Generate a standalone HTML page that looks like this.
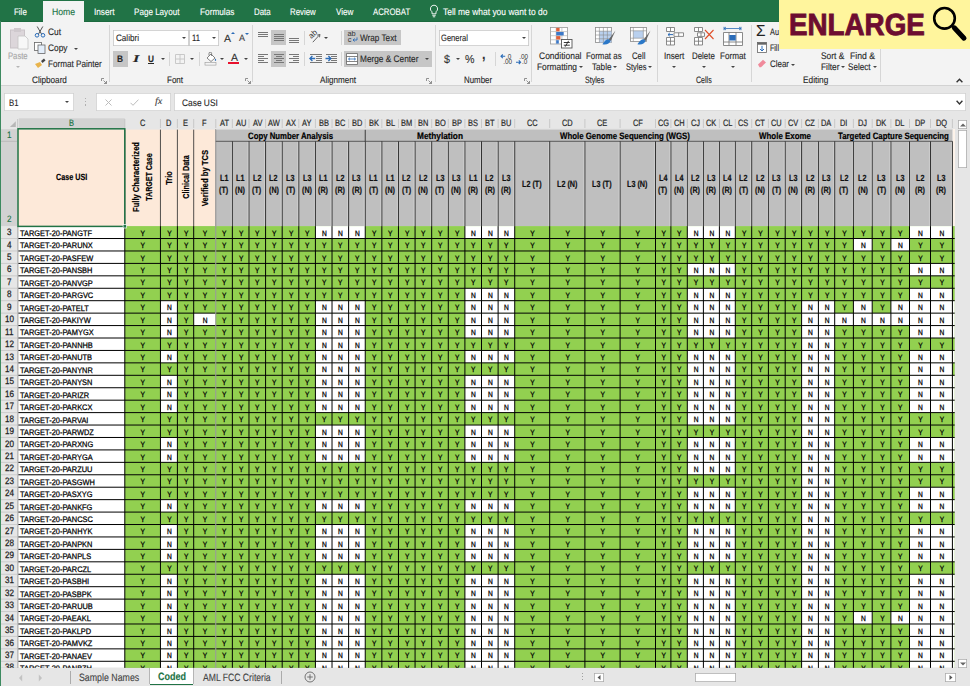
<!DOCTYPE html>
<html lang="en"><head><meta charset="utf-8"><title>Excel</title><style>
html,body{margin:0;padding:0}
body{width:970px;height:686px;overflow:hidden;background:#e6e6e6;font-family:"Liberation Sans",sans-serif;position:relative}
#w{position:absolute;left:0;top:0;width:970px;height:686px;overflow:hidden}
.r{position:absolute;display:block}
.t{position:absolute;white-space:nowrap;transform-origin:0 50%;display:block;-webkit-text-stroke:.12px currentColor}
.v{position:absolute;white-space:nowrap;font-weight:bold;color:#000;display:block;-webkit-text-stroke:.2px #000}
.arr{position:absolute;width:0;height:0;border:2.400px solid transparent;border-top:2.800px solid #444;border-bottom:0}
.arr.up{border:2.400px solid transparent;border-bottom:2.800px solid #444;border-top:0}
.row{position:absolute;left:0;height:11px;width:957px}
.row i{position:absolute;top:0;font-style:normal;text-align:center;font-size:7.7px;line-height:11px;color:#000;transform:scaleX(.86) rotate(.03deg);-webkit-text-stroke:.3px #000}
</style></head><body><div id="w">
<div class="r" style="left:0.0px;top:0.0px;width:970.0px;height:21.6px;background:#217346;"></div>
<div class="r" style="left:0.0px;top:21.6px;width:970.0px;height:64.0px;background:#f3f3f3;"></div>
<div class="r" style="left:0.0px;top:85.2px;width:970.0px;height:0.8px;background:#d2d2d2;"></div>
<div class="r" style="left:0.0px;top:20.8px;width:970.0px;height:0.8px;background:#1c6a3f;"></div>
<div class="r" style="left:42.9px;top:1.2px;width:41.2px;height:21.4px;background:#f3f3f3;"></div>
<span class="t" style="left:14.4px;top:6.1px;font-size:9.5px;line-height:11.40px;color:#fff;transform:scaleX(0.836) rotate(.03deg);">File</span>
<span class="t" style="left:51.5px;top:6.1px;font-size:9.5px;line-height:11.40px;color:#217346;transform:scaleX(0.912) rotate(.03deg);">Home</span>
<span class="t" style="left:94.2px;top:6.1px;font-size:9.5px;line-height:11.40px;color:#fff;transform:scaleX(0.867) rotate(.03deg);">Insert</span>
<span class="t" style="left:134.4px;top:6.1px;font-size:9.5px;line-height:11.40px;color:#fff;transform:scaleX(0.851) rotate(.03deg);">Page Layout</span>
<span class="t" style="left:199.6px;top:6.1px;font-size:9.5px;line-height:11.40px;color:#fff;transform:scaleX(0.869) rotate(.03deg);">Formulas</span>
<span class="t" style="left:253.6px;top:6.1px;font-size:9.5px;line-height:11.40px;color:#fff;transform:scaleX(0.832) rotate(.03deg);">Data</span>
<span class="t" style="left:290.3px;top:6.1px;font-size:9.5px;line-height:11.40px;color:#fff;transform:scaleX(0.825) rotate(.03deg);">Review</span>
<span class="t" style="left:335.7px;top:6.1px;font-size:9.5px;line-height:11.40px;color:#fff;transform:scaleX(0.857) rotate(.03deg);">View</span>
<span class="t" style="left:373.0px;top:6.1px;font-size:9.5px;line-height:11.40px;color:#fff;transform:scaleX(0.823) rotate(.03deg);">ACROBAT</span>
<span class="t" style="left:442.6px;top:6.1px;font-size:9.5px;line-height:11.40px;color:#fff;transform:scaleX(0.891) rotate(.03deg);">Tell me what you want to do</span>
<svg class="r" style="left:428px;top:4px" width="12" height="15" viewBox="0 0 12 15"><path d="M6 1.2a3.6 3.6 0 0 0-2 6.6v2h4v-2a3.6 3.6 0 0 0-2-6.6zM4.3 11.3h3.4M4.8 12.8h2.4" fill="none" stroke="#fff" stroke-width="0.9"/></svg>
<svg class="r" style="left:9px;top:27px" width="22" height="24" viewBox="0 0 22 24"><rect x="1.5" y="3" width="14" height="18" fill="#dcd6da" stroke="#c9c3c7"/><rect x="5" y="1" width="7" height="4" fill="#cfc9cd"/><path d="M9 9h7l3 3v10H9z" fill="#f7f7f7" stroke="#c4c4c4" stroke-width=".8"/></svg>
<span class="t" style="left:8.2px;top:49.8px;font-size:9.5px;line-height:11.40px;color:#a6a6a6;transform:scaleX(0.807) rotate(.03deg);">Paste</span>
<div class="arr" style="left:15.5px;top:66px;border-top-color:#b5b5b5"></div>
<svg class="r" style="left:34px;top:26px" width="12" height="12" viewBox="0 0 12 12"><path d="M3.2 0.5L7.5 8M8.8 0.5L4.5 8" stroke="#555" stroke-width="1" fill="none"/><circle cx="3" cy="9.3" r="1.8" fill="none" stroke="#2b6cb8" stroke-width="1"/><circle cx="9" cy="9.3" r="1.8" fill="none" stroke="#2b6cb8" stroke-width="1"/></svg>
<span class="t" style="left:47.8px;top:26.2px;font-size:9.5px;line-height:11.40px;color:#262626;transform:scaleX(0.879) rotate(.03deg);">Cut</span>
<svg class="r" style="left:34px;top:42px" width="12" height="12" viewBox="0 0 12 12"><rect x="0.5" y="0.5" width="7" height="8" fill="#fff" stroke="#666" stroke-width=".8"/><rect x="4" y="3" width="7" height="8.5" fill="#e4eefa" stroke="#666" stroke-width=".8"/></svg>
<span class="t" style="left:47.8px;top:42.3px;font-size:9.5px;line-height:11.40px;color:#262626;transform:scaleX(0.879) rotate(.03deg);">Copy</span>
<div class="arr" style="left:73.5px;top:47.5px"></div>
<svg class="r" style="left:34px;top:58px" width="13" height="12" viewBox="0 0 13 12"><path d="M1 6l5-2 2 3-4 3z" fill="#e9b44c"/><path d="M7 3l3-2.5 1.5 2L8.5 5z" fill="#444"/></svg>
<span class="t" style="left:47.8px;top:57.8px;font-size:9.5px;line-height:11.40px;color:#262626;transform:scaleX(0.856) rotate(.03deg);">Format Painter</span>
<span class="t" style="left:32.0px;top:73.9px;font-size:9.4px;line-height:11.28px;color:#262626;transform:scaleX(0.870) rotate(.03deg);">Clipboard</span>
<svg class="r" style="left:100.5px;top:78px" width="6" height="6" viewBox="0 0 6 6"><path d="M0.5 3V0.5H3M2.5 2.5l3 3M5.5 3v2.5H3" fill="none" stroke="#777" stroke-width=".8"/></svg>
<div class="r" style="left:109.0px;top:24.7px;width:1.0px;height:57.8px;background:#d6d6d6;"></div>
<div class="r" style="left:113.0px;top:29.6px;width:75.6px;height:16.0px;background:#fff;box-shadow:inset 0 0 0 .8px #c6c6c6"></div>
<span class="t" style="left:115.5px;top:31.9px;font-size:9.4px;line-height:11.28px;color:#262626;transform:scaleX(0.863) rotate(.03deg);">Calibri</span>
<div class="arr" style="left:182px;top:37px"></div>
<div class="r" style="left:189.4px;top:29.6px;width:29.2px;height:16.0px;background:#fff;box-shadow:inset 0 0 0 .8px #c6c6c6"></div>
<span class="t" style="left:192.0px;top:31.9px;font-size:9.4px;line-height:11.28px;color:#262626;transform:scaleX(0.820) rotate(.03deg);">11</span>
<div class="arr" style="left:212px;top:37px"></div>
<span class="t" style="left:223.5px;top:32.0px;font-size:10.5px;line-height:12.60px;color:#333;transform:scaleX(0.999) rotate(.03deg);">A</span>
<div class="arr up" style="left:231px;top:32px;border-bottom-color:#2b6cb8"></div>
<span class="t" style="left:239.0px;top:33.1px;font-size:9px;line-height:10.80px;color:#444;transform:scaleX(0.999) rotate(.03deg);">A</span>
<div class="arr" style="left:244.5px;top:32.5px;border-top-color:#2b6cb8"></div>
<div class="r" style="left:113.0px;top:51.1px;width:14.8px;height:15.5px;background:#c6c6c6;"></div>
<span class="t" style="left:117.3px;top:52.6px;font-size:9.5px;line-height:11.40px;color:#262626;transform:scaleX(0.875) rotate(.03deg);font-weight:bold;">B</span>
<span class="t" style="left:133.2px;top:52.8px;font-size:10.5px;line-height:12.60px;color:#262626;transform:scaleX(1.543) rotate(.03deg);font-weight:bold;font-style:italic;font-family:'Liberation Serif',serif;">I</span>
<span class="t" style="left:147.5px;top:52.6px;font-size:9.5px;line-height:11.40px;color:#262626;transform:scaleX(0.875) rotate(.03deg);font-weight:bold;text-decoration:underline;">U</span>
<div class="arr" style="left:160.5px;top:58px"></div>
<div class="r" style="left:169.0px;top:52.0px;width:1.0px;height:14.0px;background:#d6d6d6;"></div>
<svg class="r" style="left:175px;top:54px" width="10" height="10" viewBox="0 0 10 10"><path d="M.5 .5h9v9h-9zM5 .5v9M.5 5h9" fill="none" stroke="#c4c4c4" stroke-width=".9"/></svg>
<div class="arr" style="left:190px;top:58px"></div>
<div class="r" style="left:199.0px;top:52.0px;width:1.0px;height:14.0px;background:#d6d6d6;"></div>
<svg class="r" style="left:204px;top:52px" width="14" height="14" viewBox="0 0 14 14"><path d="M3 6l4-4 4 4-4 3.5z" fill="#fff" stroke="#666" stroke-width=".8"/><path d="M5 3.5V1.5a1.3 1.3 0 0 1 2.6 0V4" fill="none" stroke="#666" stroke-width=".8"/><path d="M11.5 6.5c.8 1.2 1 1.8 0 2.4-1-.6-.8-1.2 0-2.4z" fill="#2b6cb8"/><rect x="1" y="10.5" width="11" height="2.6" fill="#f3f3f3" stroke="#999" stroke-width=".6"/></svg>
<div class="arr" style="left:220px;top:58px"></div>
<span class="t" style="left:230.5px;top:50.7px;font-size:10.5px;line-height:12.60px;color:#333;transform:scaleX(0.999) rotate(.03deg);">A</span>
<div class="r" style="left:228.0px;top:62.3px;width:11.0px;height:2.2px;background:#e8112d;"></div>
<div class="arr" style="left:243.5px;top:58px"></div>
<span class="t" style="left:167.4px;top:73.9px;font-size:9.4px;line-height:11.28px;color:#262626;transform:scaleX(0.856) rotate(.03deg);">Font</span>
<svg class="r" style="left:244.5px;top:78px" width="6" height="6" viewBox="0 0 6 6"><path d="M0.5 3V0.5H3M2.5 2.5l3 3M5.5 3v2.5H3" fill="none" stroke="#777" stroke-width=".8"/></svg>
<div class="r" style="left:252.0px;top:24.7px;width:1.0px;height:57.8px;background:#d6d6d6;"></div>
<div class="r" style="left:271.0px;top:30.0px;width:15.0px;height:15.4px;background:#c6c6c6;"></div>
<div class="r" style="left:271.0px;top:51.0px;width:15.0px;height:15.6px;background:#c6c6c6;"></div>
<div class="r" style="left:258.0px;top:31.5px;width:10.0px;height:0.9px;background:#777;"></div>
<div class="r" style="left:258.0px;top:33.6px;width:10.0px;height:0.9px;background:#777;"></div>
<div class="r" style="left:258.0px;top:35.7px;width:10.0px;height:0.9px;background:#777;"></div>
<div class="r" style="left:273.5px;top:33.5px;width:10.0px;height:0.9px;background:#777;"></div>
<div class="r" style="left:273.5px;top:35.5px;width:10.0px;height:0.9px;background:#777;"></div>
<div class="r" style="left:273.5px;top:37.5px;width:10.0px;height:0.9px;background:#777;"></div>
<div class="r" style="left:273.5px;top:39.5px;width:10.0px;height:0.9px;background:#777;"></div>
<div class="r" style="left:289.0px;top:38.0px;width:10.0px;height:0.9px;background:#777;"></div>
<div class="r" style="left:289.0px;top:40.1px;width:10.0px;height:0.9px;background:#777;"></div>
<div class="r" style="left:289.0px;top:42.2px;width:10.0px;height:0.9px;background:#777;"></div>
<div class="r" style="left:258.0px;top:53.5px;width:10.0px;height:0.9px;background:#777;"></div>
<div class="r" style="left:258.0px;top:55.6px;width:6.0px;height:0.9px;background:#777;"></div>
<div class="r" style="left:258.0px;top:57.7px;width:10.0px;height:0.9px;background:#777;"></div>
<div class="r" style="left:258.0px;top:59.8px;width:6.0px;height:0.9px;background:#777;"></div>
<div class="r" style="left:258.0px;top:61.9px;width:10.0px;height:0.9px;background:#777;"></div>
<div class="r" style="left:273.5px;top:53.5px;width:10.0px;height:0.9px;background:#777;"></div>
<div class="r" style="left:275.5px;top:55.6px;width:6.0px;height:0.9px;background:#777;"></div>
<div class="r" style="left:273.5px;top:57.7px;width:10.0px;height:0.9px;background:#777;"></div>
<div class="r" style="left:275.5px;top:59.8px;width:6.0px;height:0.9px;background:#777;"></div>
<div class="r" style="left:273.5px;top:61.9px;width:10.0px;height:0.9px;background:#777;"></div>
<div class="r" style="left:289.0px;top:53.5px;width:10.0px;height:0.9px;background:#777;"></div>
<div class="r" style="left:293.0px;top:55.6px;width:6.0px;height:0.9px;background:#777;"></div>
<div class="r" style="left:289.0px;top:57.7px;width:10.0px;height:0.9px;background:#777;"></div>
<div class="r" style="left:293.0px;top:59.8px;width:6.0px;height:0.9px;background:#777;"></div>
<div class="r" style="left:289.0px;top:61.9px;width:10.0px;height:0.9px;background:#777;"></div>
<div class="r" style="left:304.0px;top:31.0px;width:1.0px;height:14.0px;background:#d6d6d6;"></div>
<div class="r" style="left:304.0px;top:52.0px;width:1.0px;height:14.0px;background:#d6d6d6;"></div>
<svg class="r" style="left:308px;top:29px" width="15" height="15" viewBox="0 0 15 15"><text x="0" y="0" font-size="8" fill="#333" transform="translate(3.200 10) rotate(-42)" font-family="Liberation Sans,sans-serif">ab</text><path d="M4.800 13.200L11.800 5.600M11.900 5.500l-2.800 .6M11.900 5.500l-.4 2.800" stroke="#555" stroke-width=".9" fill="none"/></svg>
<div class="arr" style="left:323.5px;top:37px"></div>
<div class="r" style="left:310.0px;top:53.6px;width:11.5px;height:0.9px;background:#777;"></div>
<div class="r" style="left:310.0px;top:62.0px;width:11.5px;height:0.9px;background:#777;"></div>
<div class="r" style="left:315.5px;top:55.7px;width:6.0px;height:0.9px;background:#777;"></div>
<div class="r" style="left:315.5px;top:57.8px;width:6.0px;height:0.9px;background:#777;"></div>
<div class="r" style="left:315.5px;top:59.9px;width:6.0px;height:0.9px;background:#777;"></div>
<svg class="r" style="left:309.0px;top:54.600px" width="7" height="7" viewBox="0 0 7 7"><path d="M6.200 3.500H1M3.400 1L.9 3.500 3.400 6" stroke="#2b6cb8" stroke-width="1.300" fill="none"/></svg>
<div class="r" style="left:325.5px;top:53.6px;width:11.5px;height:0.9px;background:#777;"></div>
<div class="r" style="left:325.5px;top:62.0px;width:11.5px;height:0.9px;background:#777;"></div>
<div class="r" style="left:331.0px;top:55.7px;width:6.0px;height:0.9px;background:#777;"></div>
<div class="r" style="left:331.0px;top:57.8px;width:6.0px;height:0.9px;background:#777;"></div>
<div class="r" style="left:331.0px;top:59.9px;width:6.0px;height:0.9px;background:#777;"></div>
<svg class="r" style="left:324.5px;top:54.600px" width="7" height="7" viewBox="0 0 7 7"><path d="M.5 3.500H5.800M3.400 1L5.900 3.500 3.400 6" stroke="#2b6cb8" stroke-width="1.300" fill="none"/></svg>
<div class="r" style="left:341.0px;top:31.0px;width:1.0px;height:14.0px;background:#d6d6d6;"></div>
<div class="r" style="left:341.0px;top:52.0px;width:1.0px;height:14.0px;background:#d6d6d6;"></div>
<div class="r" style="left:344.3px;top:30.0px;width:56.7px;height:15.4px;background:#c6c6c6;"></div>
<div class="r" style="left:344.3px;top:51.0px;width:87.6px;height:15.6px;background:#c6c6c6;"></div>
<svg class="r" style="left:346.500px;top:30px" width="13" height="14" viewBox="0 0 13 14"><text x=".5" y="6.300" font-size="7.400" fill="#333" font-family="Liberation Sans,sans-serif" >ab</text><text x=".8" y="12" font-size="7.400" fill="#333" font-family="Liberation Sans,sans-serif">c</text><path d="M10 7.400v2.600H6M7.600 8.500L6 10l1.600 1.500" stroke="#2b6cb8" stroke-width=".9" fill="none"/></svg>
<span class="t" style="left:359.5px;top:31.8px;font-size:9.5px;line-height:11.40px;color:#262626;transform:scaleX(0.861) rotate(.03deg);">Wrap Text</span>
<svg class="r" style="left:346px;top:52.5px" width="12" height="12" viewBox="0 0 12 12"><path d="M.5 .5h11v11H.5zM.5 3.5h11M.5 8.5h11" fill="#fff" stroke="#666" stroke-width=".8"/><path d="M2.5 6h7M4 4.7L2.5 6 4 7.3M8 4.7L9.5 6 8 7.3" stroke="#2b6cb8" stroke-width=".8" fill="none"/></svg>
<span class="t" style="left:359.5px;top:52.8px;font-size:9.5px;line-height:11.4px;color:#262626;transform:scaleX(0.872) rotate(.03deg)">Merge &amp; Center</span>
<div class="arr" style="left:424.5px;top:58px"></div>
<span class="t" style="left:320.2px;top:73.9px;font-size:9.4px;line-height:11.28px;color:#262626;transform:scaleX(0.864) rotate(.03deg);">Alignment</span>
<svg class="r" style="left:426px;top:78px" width="6" height="6" viewBox="0 0 6 6"><path d="M0.5 3V0.5H3M2.5 2.5l3 3M5.5 3v2.5H3" fill="none" stroke="#777" stroke-width=".8"/></svg>
<div class="r" style="left:435.0px;top:24.7px;width:1.0px;height:57.8px;background:#d6d6d6;"></div>
<div class="r" style="left:438.5px;top:29.6px;width:90.0px;height:16.0px;background:#fff;box-shadow:inset 0 0 0 .8px #c6c6c6"></div>
<span class="t" style="left:441.0px;top:31.9px;font-size:9.4px;line-height:11.28px;color:#262626;transform:scaleX(0.807) rotate(.03deg);">General</span>
<div class="arr" style="left:521.5px;top:37px"></div>
<span class="t" style="left:443.5px;top:52.8px;font-size:11.5px;line-height:13.80px;color:#333;transform:scaleX(0.938) rotate(.03deg);">$</span>
<div class="arr" style="left:455.5px;top:58px"></div>
<span class="t" style="left:465.0px;top:52.8px;font-size:11.5px;line-height:13.80px;color:#333;transform:scaleX(0.929) rotate(.03deg);">%</span>
<span class="t" style="left:481.5px;top:46.4px;font-size:14px;line-height:16.80px;color:#333;transform:scaleX(0.900) rotate(.03deg);font-weight:bold;">,</span>
<div class="r" style="left:495.0px;top:52.0px;width:1.0px;height:14.0px;background:#d6d6d6;"></div>
<svg class="r" style="left:499.5px;top:52.500px" width="14" height="13" viewBox="0 0 14 13"><text x="6" y="5.600" font-family="Liberation Sans,sans-serif" font-size="6.400" fill="#333">.0</text><text x="3.200" y="11.400" font-family="Liberation Sans,sans-serif" font-size="6.400" fill="#333">.00</text><path d="M5.200 3.300H1M2.800 1.500L1 3.300l1.800 1.800" stroke="#2b6cb8" stroke-width="1.100" fill="none"/></svg>
<svg class="r" style="left:515px;top:52.500px" width="14" height="13" viewBox="0 0 14 13"><text x="4.200" y="5.600" font-family="Liberation Sans,sans-serif" font-size="6.400" fill="#333">.00</text><text x="7" y="11.400" font-family="Liberation Sans,sans-serif" font-size="6.400" fill="#333">.0</text><path d="M1 9.200H5.600M3.800 7.400l1.800 1.800-1.800 1.800" stroke="#2b6cb8" stroke-width="1.100" fill="none"/></svg>
<span class="t" style="left:463.8px;top:73.9px;font-size:9.4px;line-height:11.28px;color:#262626;transform:scaleX(0.843) rotate(.03deg);">Number</span>
<svg class="r" style="left:523.5px;top:78px" width="6" height="6" viewBox="0 0 6 6"><path d="M0.5 3V0.5H3M2.5 2.5l3 3M5.5 3v2.5H3" fill="none" stroke="#777" stroke-width=".8"/></svg>
<div class="r" style="left:531.0px;top:24.7px;width:1.0px;height:57.8px;background:#d6d6d6;"></div>
<svg class="r" style="left:549.500px;top:26.500px" width="23" height="22" viewBox="0 0 23 22"><rect x=".5" y=".5" width="17" height="16.500" fill="#fff" stroke="#9a9a9a" stroke-width=".8"/><path d="M.5 4.600h17M.5 8.700h17M.5 12.800h17M6.200 .5v16.500M11.900 .5v16.500" stroke="#b5b5b5" stroke-width=".7"/><rect x="6.200" y=".9" width="3.400" height="3.400" fill="#e0603a"/><rect x="6.200" y="5" width="7.500" height="3.400" fill="#3c78c8"/><rect x="6.200" y="9.100" width="4.200" height="3.400" fill="#e0603a"/><rect x="6.200" y="13.200" width="2.600" height="3.400" fill="#3c78c8"/><rect x="11.500" y="12.500" width="10.500" height="8.500" fill="#fff" stroke="#555" stroke-width=".9"/><path d="M13.800 15.500h6M13.800 18.200h6M18.600 13.800l-3.400 5.900" stroke="#222" stroke-width=".9"/></svg>
<span class="t" style="left:538.7px;top:49.5px;font-size:9.5px;line-height:11.40px;color:#262626;transform:scaleX(0.894) rotate(.03deg);">Conditional</span>
<span class="t" style="left:536.7px;top:60.6px;font-size:9.5px;line-height:11.40px;color:#262626;transform:scaleX(0.881) rotate(.03deg);">Formatting</span>
<div class="arr" style="left:578.5px;top:66px"></div>
<svg class="r" style="left:594.500px;top:26.500px" width="22" height="22" viewBox="0 0 22 22"><rect x=".5" y=".5" width="16" height="15" fill="#fff" stroke="#8a8a8a" stroke-width=".8"/><rect x="4.400" y="4.200" width="12.100" height="11.300" fill="#b9d0ee"/><path d="M.5 4.200h16M.5 8h16M.5 11.800h16M4.400 .5v15M8.400 .5v15M12.400 .5v15" stroke="#8a8a8a" stroke-width=".6"/><path d="M20.500 3.500l-6.800 9 2 1.600z" fill="#666"/><path d="M13.600 12.300c-2.600-.4-3.800 2-6.200 4.900 3.600 1 7.400-.4 8.200-3.400z" fill="#2b78c8"/></svg>
<span class="t" style="left:586.4px;top:49.5px;font-size:9.5px;line-height:11.40px;color:#262626;transform:scaleX(0.833) rotate(.03deg);">Format as</span>
<span class="t" style="left:591.9px;top:60.6px;font-size:9.5px;line-height:11.40px;color:#262626;transform:scaleX(0.859) rotate(.03deg);">Table</span>
<div class="arr" style="left:613px;top:66px"></div>
<svg class="r" style="left:629.500px;top:26.500px" width="22" height="22" viewBox="0 0 22 22"><rect x=".5" y=".5" width="16" height="14" fill="#fff" stroke="#8a8a8a" stroke-width=".8"/><rect x="3.300" y="3.800" width="10" height="7.400" fill="#b9d0ee"/><path d="M.5 3.800h16M.5 11.200h16M3.300 .5v14M13.300 .5v14" stroke="#8a8a8a" stroke-width=".6"/><path d="M20.500 3.500l-6.800 9 2 1.600z" fill="#666"/><path d="M13.600 12.300c-2.600-.4-3.800 2-6.200 4.900 3.600 1 7.400-.4 8.200-3.400z" fill="#2b78c8"/></svg>
<span class="t" style="left:632.2px;top:49.5px;font-size:9.5px;line-height:11.40px;color:#262626;transform:scaleX(0.819) rotate(.03deg);">Cell</span>
<span class="t" style="left:625.8px;top:60.6px;font-size:9.5px;line-height:11.40px;color:#262626;transform:scaleX(0.792) rotate(.03deg);">Styles</span>
<div class="arr" style="left:648px;top:66px"></div>
<span class="t" style="left:584.5px;top:74.1px;font-size:9.4px;line-height:11.28px;color:#262626;transform:scaleX(0.754) rotate(.03deg);">Styles</span>
<div class="r" style="left:657.0px;top:24.7px;width:1.0px;height:57.8px;background:#d6d6d6;"></div>
<svg class="r" style="left:665.5px;top:27px" width="18" height="19" viewBox="0 0 18 19"><path d="M.5 .5h8v4h-8zM4.500 .5v4M.5 10.5h8v7.500h-8zM4.500 10.500v7.500M.5 14.200h8M8 5.800h9.500v3.600H8zM12.700 5.800v3.600" fill="#fff" stroke="#777" stroke-width=".85"/><path d="M7 7.600H2M3.800 6L2 7.600l1.800 1.600" stroke="#2b6cb8" stroke-width="1" fill="none"/></svg>
<span class="t" style="left:664.4px;top:49.5px;font-size:9.5px;line-height:11.40px;color:#262626;transform:scaleX(0.854) rotate(.03deg);">Insert</span>
<div class="arr" style="left:672px;top:66px"></div>
<svg class="r" style="left:694px;top:27px" width="21" height="19" viewBox="0 0 21 19"><path d="M.5 .5h8v4h-8zM4.500 .5v4M.5 10.500h8v7.500h-8zM4.500 10.500v7.500M.5 14.200h8M3.500 5.800h7v3.600h-7zM7 5.800v3.600" fill="#fff" stroke="#777" stroke-width=".85"/><path d="M11 3l8.500 9M19.500 3L11 12" stroke="#e0502a" stroke-width="1.100" fill="none"/></svg>
<span class="t" style="left:692.1px;top:49.5px;font-size:9.5px;line-height:11.40px;color:#262626;transform:scaleX(0.830) rotate(.03deg);">Delete</span>
<div class="arr" style="left:701.500px;top:66px"></div>
<svg class="r" style="left:723px;top:26px" width="20" height="21" viewBox="0 0 20 21"><path d="M1 2.500h17M1 .8v3.400M18 .8v3.400M3 1l-2 1.500 2 1.500M16 1l2 1.500-2 1.500" stroke="#2b6cb8" stroke-width=".8" fill="none"/><path d="M.5 6.500h19v9.500H.5zM6 6.500v13M13 6.500v13M.5 16v3.500h19V16" fill="#fff" stroke="#777" stroke-width=".85"/><rect x="6.300" y="9" width="6.400" height="5.500" fill="#2b6cb8"/></svg>
<span class="t" style="left:720.0px;top:49.5px;font-size:9.5px;line-height:11.40px;color:#262626;transform:scaleX(0.857) rotate(.03deg);">Format</span>
<div class="arr" style="left:731px;top:66px"></div>
<span class="t" style="left:696.3px;top:74.1px;font-size:9.4px;line-height:11.28px;color:#262626;transform:scaleX(0.751) rotate(.03deg);">Cells</span>
<div class="r" style="left:751.0px;top:24.7px;width:1.0px;height:57.8px;background:#d6d6d6;"></div>
<span class="t" style="left:756.0px;top:21.4px;font-size:16px;line-height:19.20px;color:#222;transform:scaleX(0.960) rotate(.03deg);">Σ</span>
<span class="t" style="left:769.6px;top:25.8px;font-size:9.5px;line-height:11.40px;color:#262626;transform:scaleX(0.774) rotate(.03deg);">Au</span>
<svg class="r" style="left:757px;top:41.500px" width="10" height="11" viewBox="0 0 10 11"><rect x=".5" y=".5" width="9" height="10" fill="#fff" stroke="#666" stroke-width=".8"/><rect x=".5" y=".5" width="9" height="2.200" fill="#666"/><path d="M5 3.800v5M3 7l2 2 2-2" stroke="#2b6cb8" stroke-width="1" fill="none"/></svg>
<span class="t" style="left:769.6px;top:41.9px;font-size:9.5px;line-height:11.40px;color:#262626;transform:scaleX(0.742) rotate(.03deg);">Fill</span>
<svg class="r" style="left:757px;top:59px" width="10" height="9" viewBox="0 0 10 9"><path d="M1 5.500L6 .8l3 2.700-5 4.700H2.500z" fill="#f08a9b"/></svg>
<span class="t" style="left:769.6px;top:57.8px;font-size:9.5px;line-height:11.40px;color:#262626;transform:scaleX(0.837) rotate(.03deg);">Clear</span>
<div class="arr" style="left:790.500px;top:63.500px"></div>
<span class="t" style="left:820.6px;top:50.0px;font-size:9.5px;line-height:11.4px;color:#262626;transform:scaleX(0.883) rotate(.03deg)">Sort &amp;</span>
<span class="t" style="left:820.6px;top:60.7px;font-size:9.5px;line-height:11.40px;color:#262626;transform:scaleX(0.876) rotate(.03deg);">Filter</span>
<div class="arr" style="left:840.500px;top:66px"></div>
<span class="t" style="left:849.6px;top:50.0px;font-size:9.5px;line-height:11.4px;color:#262626;transform:scaleX(0.914) rotate(.03deg)">Find &amp;</span>
<span class="t" style="left:848.4px;top:60.7px;font-size:9.5px;line-height:11.40px;color:#262626;transform:scaleX(0.852) rotate(.03deg);">Select</span>
<div class="arr" style="left:872.500px;top:66px"></div>
<span class="t" style="left:802.8px;top:74.1px;font-size:9.4px;line-height:11.28px;color:#262626;transform:scaleX(0.884) rotate(.03deg);">Editing</span>
<div class="r" style="left:880.0px;top:24.7px;width:1.0px;height:57.8px;background:#d6d6d6;"></div>
<svg class="r" style="left:956px;top:78px" width="7" height="5" viewBox="0 0 7 5"><path d="M.6 4.300L3.500 1.200l2.900 3.100" stroke="#333" stroke-width="1.400" fill="none"/></svg>
<div class="r" style="left:4.3px;top:93.3px;width:70.0px;height:17.5px;background:#fff;box-shadow:inset 0 0 0 .8px #d0d0d0"></div>
<span class="t" style="left:9.2px;top:96.6px;font-size:9.5px;line-height:11.40px;color:#262626;transform:scaleX(0.818) rotate(.03deg);">B1</span>
<div class="arr" style="left:64.500px;top:101px"></div>
<div class="r" style="left:84.5px;top:98.0px;width:1.2px;height:1.2px;background:#b0b0b0;"></div>
<div class="r" style="left:84.5px;top:101.2px;width:1.2px;height:1.2px;background:#b0b0b0;"></div>
<div class="r" style="left:84.5px;top:104.4px;width:1.2px;height:1.2px;background:#b0b0b0;"></div>
<div class="r" style="left:95.8px;top:93.3px;width:75.0px;height:17.5px;background:#fff;box-shadow:inset 0 0 0 .8px #d0d0d0"></div>
<svg class="r" style="left:105px;top:99px" width="7" height="7" viewBox="0 0 7 7"><path d="M.5 .5l6 6M6.500 .5l-6 6" stroke="#bbb" stroke-width="1"/></svg>
<svg class="r" style="left:129.500px;top:99px" width="9" height="7" viewBox="0 0 9 7"><path d="M.5 3.800l2.500 2.500L8.500 .6" stroke="#bbb" stroke-width="1" fill="none"/></svg>
<span class="t" style="left:154.5px;top:96.3px;font-size:9.5px;line-height:11.40px;color:#444;transform:scaleX(1.083) rotate(.03deg);font-style:italic;font-family:'Liberation Serif',serif;">fx</span>
<div class="r" style="left:174.0px;top:93.3px;width:792.4px;height:17.5px;background:#fff;box-shadow:inset 0 0 0 .8px #d0d0d0"></div>
<span class="t" style="left:182.0px;top:96.6px;font-size:9.5px;line-height:11.40px;color:#262626;transform:scaleX(0.881) rotate(.03deg);">Case USI</span>
<svg class="r" style="left:955.500px;top:100px" width="7" height="5" viewBox="0 0 7 5"><path d="M.6 .8l2.900 3.100 2.900-3.100" stroke="#333" stroke-width="1.400" fill="none"/></svg>
<svg class="r" style="left:0;top:0" width="970" height="686" viewBox="0 0 970 686"><rect x="0.80" y="118.30" width="956.50" height="10.00" fill="#e6e6e6" /><path d="M15.8 121.2v5.9h-5.9z" fill="#b7b7b7"/><rect x="18.80" y="118.30" width="106.00" height="10.00" fill="#d2d2d2" /><path d="M124.80 119.00L124.80 128.00" stroke="#c4c4c4" stroke-width="0.9"/><path d="M160.45 119.00L160.45 128.00" stroke="#c4c4c4" stroke-width="0.9"/><path d="M177.40 119.00L177.40 128.00" stroke="#c4c4c4" stroke-width="0.9"/><path d="M193.70 119.00L193.70 128.00" stroke="#c4c4c4" stroke-width="0.9"/><path d="M215.75 119.00L215.75 128.00" stroke="#c4c4c4" stroke-width="0.9"/><path d="M232.36 119.00L232.36 128.00" stroke="#c4c4c4" stroke-width="0.9"/><path d="M248.97 119.00L248.97 128.00" stroke="#c4c4c4" stroke-width="0.9"/><path d="M265.58 119.00L265.58 128.00" stroke="#c4c4c4" stroke-width="0.9"/><path d="M282.19 119.00L282.19 128.00" stroke="#c4c4c4" stroke-width="0.9"/><path d="M298.80 119.00L298.80 128.00" stroke="#c4c4c4" stroke-width="0.9"/><path d="M315.41 119.00L315.41 128.00" stroke="#c4c4c4" stroke-width="0.9"/><path d="M332.02 119.00L332.02 128.00" stroke="#c4c4c4" stroke-width="0.9"/><path d="M348.63 119.00L348.63 128.00" stroke="#c4c4c4" stroke-width="0.9"/><path d="M365.24 119.00L365.24 128.00" stroke="#c4c4c4" stroke-width="0.9"/><path d="M381.85 119.00L381.85 128.00" stroke="#c4c4c4" stroke-width="0.9"/><path d="M398.46 119.00L398.46 128.00" stroke="#c4c4c4" stroke-width="0.9"/><path d="M415.07 119.00L415.07 128.00" stroke="#c4c4c4" stroke-width="0.9"/><path d="M431.68 119.00L431.68 128.00" stroke="#c4c4c4" stroke-width="0.9"/><path d="M448.29 119.00L448.29 128.00" stroke="#c4c4c4" stroke-width="0.9"/><path d="M464.90 119.00L464.90 128.00" stroke="#c4c4c4" stroke-width="0.9"/><path d="M481.51 119.00L481.51 128.00" stroke="#c4c4c4" stroke-width="0.9"/><path d="M498.12 119.00L498.12 128.00" stroke="#c4c4c4" stroke-width="0.9"/><path d="M514.73 119.00L514.73 128.00" stroke="#c4c4c4" stroke-width="0.9"/><path d="M549.70 119.00L549.70 128.00" stroke="#c4c4c4" stroke-width="0.9"/><path d="M584.90 119.00L584.90 128.00" stroke="#c4c4c4" stroke-width="0.9"/><path d="M620.10 119.00L620.10 128.00" stroke="#c4c4c4" stroke-width="0.9"/><path d="M655.50 119.00L655.50 128.00" stroke="#c4c4c4" stroke-width="0.9"/><path d="M670.90 119.00L670.90 128.00" stroke="#c4c4c4" stroke-width="0.9"/><path d="M687.30 119.00L687.30 128.00" stroke="#c4c4c4" stroke-width="0.9"/><path d="M703.40 119.00L703.40 128.00" stroke="#c4c4c4" stroke-width="0.9"/><path d="M719.40 119.00L719.40 128.00" stroke="#c4c4c4" stroke-width="0.9"/><path d="M735.30 119.00L735.30 128.00" stroke="#c4c4c4" stroke-width="0.9"/><path d="M751.70 119.00L751.70 128.00" stroke="#c4c4c4" stroke-width="0.9"/><path d="M768.40 119.00L768.40 128.00" stroke="#c4c4c4" stroke-width="0.9"/><path d="M785.20 119.00L785.20 128.00" stroke="#c4c4c4" stroke-width="0.9"/><path d="M801.60 119.00L801.60 128.00" stroke="#c4c4c4" stroke-width="0.9"/><path d="M818.40 119.00L818.40 128.00" stroke="#c4c4c4" stroke-width="0.9"/><path d="M834.70 119.00L834.70 128.00" stroke="#c4c4c4" stroke-width="0.9"/><path d="M853.40 119.00L853.40 128.00" stroke="#c4c4c4" stroke-width="0.9"/><path d="M872.20 119.00L872.20 128.00" stroke="#c4c4c4" stroke-width="0.9"/><path d="M890.90 119.00L890.90 128.00" stroke="#c4c4c4" stroke-width="0.9"/><path d="M909.50 119.00L909.50 128.00" stroke="#c4c4c4" stroke-width="0.9"/><path d="M930.50 119.00L930.50 128.00" stroke="#c4c4c4" stroke-width="0.9"/><path d="M952.40 119.00L952.40 128.00" stroke="#c4c4c4" stroke-width="0.9"/><path d="M17.60 119.00L17.60 128.00" stroke="#c4c4c4" stroke-width="0.9"/><rect x="0.80" y="128.40" width="17.00" height="539.90" fill="#e6e6e6" /><rect x="0.80" y="129.20" width="16.60" height="96.90" fill="#d2d2d2" /><path d="M0.80 141.30L17.00 141.30" stroke="#b9b9b9" stroke-width="0.9"/><rect x="18.20" y="129.60" width="197.55" height="96.50" fill="#fde9d9" /><rect x="215.75" y="129.80" width="736.65" height="96.30" fill="#bfbfbf" /><rect x="952.80" y="129.00" width="2.20" height="97.10" fill="#fdf3ea" /><path d="M124.80 129.60L124.80 226.10" stroke="#333" stroke-width="0.85"/><path d="M160.45 129.60L160.45 226.10" stroke="#333" stroke-width="0.85"/><path d="M177.40 129.60L177.40 226.10" stroke="#333" stroke-width="0.85"/><path d="M193.70 129.60L193.70 226.10" stroke="#333" stroke-width="0.85"/><path d="M215.75 129.00L215.75 226.10" stroke="#8c8c8c" stroke-width="1"/><path d="M215.75 129.40L952.40 129.40" stroke="#cfcfcf" stroke-width="0.8"/><path d="M215.75 141.30L952.40 141.30" stroke="#5a5a5a" stroke-width="1"/><path d="M365.24 129.80L365.24 141.30" stroke="#3c3c3c" stroke-width="1"/><path d="M232.36 141.30L232.36 226.10" stroke="#333" stroke-width="1"/><path d="M231.26 142.00L231.26 226.10" stroke="#d0d0d0" stroke-width="0.8"/><path d="M248.97 141.30L248.97 226.10" stroke="#333" stroke-width="1"/><path d="M247.87 142.00L247.87 226.10" stroke="#d0d0d0" stroke-width="0.8"/><path d="M265.58 141.30L265.58 226.10" stroke="#333" stroke-width="1"/><path d="M264.48 142.00L264.48 226.10" stroke="#d0d0d0" stroke-width="0.8"/><path d="M282.19 141.30L282.19 226.10" stroke="#333" stroke-width="1"/><path d="M281.09 142.00L281.09 226.10" stroke="#d0d0d0" stroke-width="0.8"/><path d="M298.80 141.30L298.80 226.10" stroke="#333" stroke-width="1"/><path d="M297.70 142.00L297.70 226.10" stroke="#d0d0d0" stroke-width="0.8"/><path d="M315.41 141.30L315.41 226.10" stroke="#333" stroke-width="1"/><path d="M314.31 142.00L314.31 226.10" stroke="#d0d0d0" stroke-width="0.8"/><path d="M332.02 141.30L332.02 226.10" stroke="#333" stroke-width="1"/><path d="M330.92 142.00L330.92 226.10" stroke="#d0d0d0" stroke-width="0.8"/><path d="M348.63 141.30L348.63 226.10" stroke="#333" stroke-width="1"/><path d="M347.53 142.00L347.53 226.10" stroke="#d0d0d0" stroke-width="0.8"/><path d="M365.24 141.30L365.24 226.10" stroke="#333" stroke-width="1"/><path d="M364.14 142.00L364.14 226.10" stroke="#d0d0d0" stroke-width="0.8"/><path d="M381.85 141.30L381.85 226.10" stroke="#333" stroke-width="1"/><path d="M380.75 142.00L380.75 226.10" stroke="#d0d0d0" stroke-width="0.8"/><path d="M398.46 141.30L398.46 226.10" stroke="#333" stroke-width="1"/><path d="M397.36 142.00L397.36 226.10" stroke="#d0d0d0" stroke-width="0.8"/><path d="M415.07 141.30L415.07 226.10" stroke="#333" stroke-width="1"/><path d="M413.97 142.00L413.97 226.10" stroke="#d0d0d0" stroke-width="0.8"/><path d="M431.68 141.30L431.68 226.10" stroke="#333" stroke-width="1"/><path d="M430.58 142.00L430.58 226.10" stroke="#d0d0d0" stroke-width="0.8"/><path d="M448.29 141.30L448.29 226.10" stroke="#333" stroke-width="1"/><path d="M447.19 142.00L447.19 226.10" stroke="#d0d0d0" stroke-width="0.8"/><path d="M464.90 141.30L464.90 226.10" stroke="#333" stroke-width="1"/><path d="M463.80 142.00L463.80 226.10" stroke="#d0d0d0" stroke-width="0.8"/><path d="M481.51 141.30L481.51 226.10" stroke="#333" stroke-width="1"/><path d="M480.41 142.00L480.41 226.10" stroke="#d0d0d0" stroke-width="0.8"/><path d="M498.12 141.30L498.12 226.10" stroke="#333" stroke-width="1"/><path d="M497.02 142.00L497.02 226.10" stroke="#d0d0d0" stroke-width="0.8"/><path d="M514.73 141.30L514.73 226.10" stroke="#333" stroke-width="1"/><path d="M513.63 142.00L513.63 226.10" stroke="#d0d0d0" stroke-width="0.8"/><path d="M549.70 141.30L549.70 226.10" stroke="#333" stroke-width="1"/><path d="M548.60 142.00L548.60 226.10" stroke="#d0d0d0" stroke-width="0.8"/><path d="M584.90 141.30L584.90 226.10" stroke="#333" stroke-width="1"/><path d="M583.80 142.00L583.80 226.10" stroke="#d0d0d0" stroke-width="0.8"/><path d="M620.10 141.30L620.10 226.10" stroke="#333" stroke-width="1"/><path d="M619.00 142.00L619.00 226.10" stroke="#d0d0d0" stroke-width="0.8"/><path d="M655.50 141.30L655.50 226.10" stroke="#333" stroke-width="1"/><path d="M654.40 142.00L654.40 226.10" stroke="#d0d0d0" stroke-width="0.8"/><path d="M670.90 141.30L670.90 226.10" stroke="#333" stroke-width="1"/><path d="M669.80 142.00L669.80 226.10" stroke="#d0d0d0" stroke-width="0.8"/><path d="M687.30 141.30L687.30 226.10" stroke="#333" stroke-width="1"/><path d="M686.20 142.00L686.20 226.10" stroke="#d0d0d0" stroke-width="0.8"/><path d="M703.40 141.30L703.40 226.10" stroke="#333" stroke-width="1"/><path d="M702.30 142.00L702.30 226.10" stroke="#d0d0d0" stroke-width="0.8"/><path d="M719.40 141.30L719.40 226.10" stroke="#333" stroke-width="1"/><path d="M718.30 142.00L718.30 226.10" stroke="#d0d0d0" stroke-width="0.8"/><path d="M735.30 141.30L735.30 226.10" stroke="#333" stroke-width="1"/><path d="M734.20 142.00L734.20 226.10" stroke="#d0d0d0" stroke-width="0.8"/><path d="M751.70 141.30L751.70 226.10" stroke="#333" stroke-width="1"/><path d="M750.60 142.00L750.60 226.10" stroke="#d0d0d0" stroke-width="0.8"/><path d="M768.40 141.30L768.40 226.10" stroke="#333" stroke-width="1"/><path d="M767.30 142.00L767.30 226.10" stroke="#d0d0d0" stroke-width="0.8"/><path d="M785.20 141.30L785.20 226.10" stroke="#333" stroke-width="1"/><path d="M784.10 142.00L784.10 226.10" stroke="#d0d0d0" stroke-width="0.8"/><path d="M801.60 141.30L801.60 226.10" stroke="#333" stroke-width="1"/><path d="M800.50 142.00L800.50 226.10" stroke="#d0d0d0" stroke-width="0.8"/><path d="M818.40 141.30L818.40 226.10" stroke="#333" stroke-width="1"/><path d="M817.30 142.00L817.30 226.10" stroke="#d0d0d0" stroke-width="0.8"/><path d="M834.70 141.30L834.70 226.10" stroke="#333" stroke-width="1"/><path d="M833.60 142.00L833.60 226.10" stroke="#d0d0d0" stroke-width="0.8"/><path d="M853.40 141.30L853.40 226.10" stroke="#333" stroke-width="1"/><path d="M852.30 142.00L852.30 226.10" stroke="#d0d0d0" stroke-width="0.8"/><path d="M872.20 141.30L872.20 226.10" stroke="#333" stroke-width="1"/><path d="M871.10 142.00L871.10 226.10" stroke="#d0d0d0" stroke-width="0.8"/><path d="M890.90 141.30L890.90 226.10" stroke="#333" stroke-width="1"/><path d="M889.80 142.00L889.80 226.10" stroke="#d0d0d0" stroke-width="0.8"/><path d="M909.50 141.30L909.50 226.10" stroke="#333" stroke-width="1"/><path d="M908.40 142.00L908.40 226.10" stroke="#d0d0d0" stroke-width="0.8"/><path d="M930.50 141.30L930.50 226.10" stroke="#333" stroke-width="1"/><path d="M929.40 142.00L929.40 226.10" stroke="#d0d0d0" stroke-width="0.8"/><path d="M952.40 141.30L952.40 226.10" stroke="#333" stroke-width="1"/><path d="M951.30 142.00L951.30 226.10" stroke="#d0d0d0" stroke-width="0.8"/><rect x="18.20" y="226.10" width="106.60" height="442.20" fill="#fff" /><rect x="124.80" y="226.10" width="829.90" height="442.20" fill="#92d050" /><rect x="315.41" y="226.10" width="49.83" height="12.43" fill="#fff" /><rect x="464.90" y="226.10" width="49.83" height="12.43" fill="#fff" /><rect x="687.30" y="226.10" width="48.00" height="12.43" fill="#fff" /><rect x="909.50" y="226.10" width="42.90" height="12.43" fill="#fff" /><rect x="853.40" y="238.53" width="18.80" height="12.43" fill="#fff" /><rect x="890.90" y="238.53" width="18.60" height="12.43" fill="#fff" /><rect x="687.30" y="263.40" width="48.00" height="12.43" fill="#fff" /><rect x="909.50" y="263.40" width="42.90" height="12.43" fill="#fff" /><rect x="464.90" y="288.27" width="49.83" height="12.43" fill="#fff" /><rect x="687.30" y="288.27" width="48.00" height="12.43" fill="#fff" /><rect x="909.50" y="288.27" width="42.90" height="12.43" fill="#fff" /><rect x="160.45" y="300.70" width="16.95" height="12.43" fill="#fff" /><rect x="315.41" y="300.70" width="49.83" height="12.43" fill="#fff" /><rect x="464.90" y="300.70" width="49.83" height="12.43" fill="#fff" /><rect x="687.30" y="300.70" width="48.00" height="12.43" fill="#fff" /><rect x="801.60" y="300.70" width="33.10" height="12.43" fill="#fff" /><rect x="853.40" y="300.70" width="18.80" height="12.43" fill="#fff" /><rect x="890.90" y="300.70" width="61.50" height="12.43" fill="#fff" /><rect x="160.45" y="313.14" width="16.95" height="12.43" fill="#fff" /><rect x="193.70" y="313.14" width="22.05" height="12.43" fill="#fff" /><rect x="315.41" y="313.14" width="49.83" height="12.43" fill="#fff" /><rect x="464.90" y="313.14" width="49.83" height="12.43" fill="#fff" /><rect x="687.30" y="313.14" width="48.00" height="12.43" fill="#fff" /><rect x="801.60" y="313.14" width="150.80" height="12.43" fill="#fff" /><rect x="160.45" y="325.57" width="16.95" height="12.43" fill="#fff" /><rect x="315.41" y="325.57" width="49.83" height="12.43" fill="#fff" /><rect x="464.90" y="325.57" width="49.83" height="12.43" fill="#fff" /><rect x="687.30" y="325.57" width="48.00" height="12.43" fill="#fff" /><rect x="801.60" y="325.57" width="33.10" height="12.43" fill="#fff" /><rect x="909.50" y="325.57" width="42.90" height="12.43" fill="#fff" /><rect x="315.41" y="338.01" width="49.83" height="12.43" fill="#fff" /><rect x="801.60" y="338.01" width="33.10" height="12.43" fill="#fff" /><rect x="160.45" y="350.44" width="16.95" height="12.43" fill="#fff" /><rect x="315.41" y="350.44" width="49.83" height="12.43" fill="#fff" /><rect x="464.90" y="350.44" width="49.83" height="12.43" fill="#fff" /><rect x="687.30" y="350.44" width="48.00" height="12.43" fill="#fff" /><rect x="801.60" y="350.44" width="33.10" height="12.43" fill="#fff" /><rect x="909.50" y="350.44" width="42.90" height="12.43" fill="#fff" /><rect x="315.41" y="362.87" width="49.83" height="12.43" fill="#fff" /><rect x="687.30" y="362.87" width="48.00" height="12.43" fill="#fff" /><rect x="801.60" y="362.87" width="33.10" height="12.43" fill="#fff" /><rect x="909.50" y="362.87" width="42.90" height="12.43" fill="#fff" /><rect x="160.45" y="375.31" width="16.95" height="12.43" fill="#fff" /><rect x="315.41" y="375.31" width="49.83" height="12.43" fill="#fff" /><rect x="464.90" y="375.31" width="49.83" height="12.43" fill="#fff" /><rect x="687.30" y="375.31" width="48.00" height="12.43" fill="#fff" /><rect x="801.60" y="375.31" width="33.10" height="12.43" fill="#fff" /><rect x="909.50" y="375.31" width="42.90" height="12.43" fill="#fff" /><rect x="160.45" y="387.74" width="16.95" height="12.43" fill="#fff" /><rect x="315.41" y="387.74" width="49.83" height="12.43" fill="#fff" /><rect x="464.90" y="387.74" width="49.83" height="12.43" fill="#fff" /><rect x="687.30" y="387.74" width="48.00" height="12.43" fill="#fff" /><rect x="801.60" y="387.74" width="33.10" height="12.43" fill="#fff" /><rect x="909.50" y="387.74" width="42.90" height="12.43" fill="#fff" /><rect x="160.45" y="400.18" width="16.95" height="12.43" fill="#fff" /><rect x="315.41" y="400.18" width="49.83" height="12.43" fill="#fff" /><rect x="464.90" y="400.18" width="49.83" height="12.43" fill="#fff" /><rect x="687.30" y="400.18" width="48.00" height="12.43" fill="#fff" /><rect x="801.60" y="400.18" width="33.10" height="12.43" fill="#fff" /><rect x="909.50" y="400.18" width="42.90" height="12.43" fill="#fff" /><rect x="687.30" y="412.61" width="48.00" height="12.43" fill="#fff" /><rect x="801.60" y="412.61" width="33.10" height="12.43" fill="#fff" /><rect x="315.41" y="425.04" width="49.83" height="12.43" fill="#fff" /><rect x="464.90" y="425.04" width="49.83" height="12.43" fill="#fff" /><rect x="801.60" y="425.04" width="33.10" height="12.43" fill="#fff" /><rect x="160.45" y="437.48" width="16.95" height="12.43" fill="#fff" /><rect x="315.41" y="437.48" width="49.83" height="12.43" fill="#fff" /><rect x="464.90" y="437.48" width="49.83" height="12.43" fill="#fff" /><rect x="687.30" y="437.48" width="48.00" height="12.43" fill="#fff" /><rect x="801.60" y="437.48" width="33.10" height="12.43" fill="#fff" /><rect x="909.50" y="437.48" width="42.90" height="12.43" fill="#fff" /><rect x="160.45" y="449.91" width="16.95" height="12.43" fill="#fff" /><rect x="315.41" y="449.91" width="49.83" height="12.43" fill="#fff" /><rect x="464.90" y="449.91" width="49.83" height="12.43" fill="#fff" /><rect x="687.30" y="449.91" width="48.00" height="12.43" fill="#fff" /><rect x="801.60" y="449.91" width="33.10" height="12.43" fill="#fff" /><rect x="909.50" y="449.91" width="42.90" height="12.43" fill="#fff" /><rect x="687.30" y="462.35" width="48.00" height="12.43" fill="#fff" /><rect x="801.60" y="462.35" width="33.10" height="12.43" fill="#fff" /><rect x="801.60" y="474.78" width="33.10" height="12.43" fill="#fff" /><rect x="687.30" y="487.21" width="48.00" height="12.43" fill="#fff" /><rect x="801.60" y="487.21" width="33.10" height="12.43" fill="#fff" /><rect x="909.50" y="487.21" width="42.90" height="12.43" fill="#fff" /><rect x="160.45" y="499.65" width="16.95" height="12.43" fill="#fff" /><rect x="315.41" y="499.65" width="49.83" height="12.43" fill="#fff" /><rect x="464.90" y="499.65" width="49.83" height="12.43" fill="#fff" /><rect x="687.30" y="499.65" width="48.00" height="12.43" fill="#fff" /><rect x="801.60" y="499.65" width="33.10" height="12.43" fill="#fff" /><rect x="909.50" y="499.65" width="42.90" height="12.43" fill="#fff" /><rect x="801.60" y="512.08" width="33.10" height="12.43" fill="#fff" /><rect x="160.45" y="524.52" width="16.95" height="12.43" fill="#fff" /><rect x="315.41" y="524.52" width="49.83" height="12.43" fill="#fff" /><rect x="464.90" y="524.52" width="49.83" height="12.43" fill="#fff" /><rect x="687.30" y="524.52" width="48.00" height="12.43" fill="#fff" /><rect x="801.60" y="524.52" width="33.10" height="12.43" fill="#fff" /><rect x="909.50" y="524.52" width="42.90" height="12.43" fill="#fff" /><rect x="160.45" y="536.95" width="16.95" height="12.43" fill="#fff" /><rect x="315.41" y="536.95" width="49.83" height="12.43" fill="#fff" /><rect x="464.90" y="536.95" width="49.83" height="12.43" fill="#fff" /><rect x="687.30" y="536.95" width="48.00" height="12.43" fill="#fff" /><rect x="801.60" y="536.95" width="33.10" height="12.43" fill="#fff" /><rect x="909.50" y="536.95" width="42.90" height="12.43" fill="#fff" /><rect x="160.45" y="549.38" width="16.95" height="12.43" fill="#fff" /><rect x="315.41" y="549.38" width="49.83" height="12.43" fill="#fff" /><rect x="464.90" y="549.38" width="49.83" height="12.43" fill="#fff" /><rect x="687.30" y="549.38" width="48.00" height="12.43" fill="#fff" /><rect x="801.60" y="549.38" width="33.10" height="12.43" fill="#fff" /><rect x="909.50" y="549.38" width="42.90" height="12.43" fill="#fff" /><rect x="801.60" y="561.82" width="33.10" height="12.43" fill="#fff" /><rect x="160.45" y="574.25" width="16.95" height="12.43" fill="#fff" /><rect x="315.41" y="574.25" width="49.83" height="12.43" fill="#fff" /><rect x="464.90" y="574.25" width="49.83" height="12.43" fill="#fff" /><rect x="687.30" y="574.25" width="48.00" height="12.43" fill="#fff" /><rect x="801.60" y="574.25" width="33.10" height="12.43" fill="#fff" /><rect x="909.50" y="574.25" width="42.90" height="12.43" fill="#fff" /><rect x="160.45" y="586.69" width="16.95" height="12.43" fill="#fff" /><rect x="315.41" y="586.69" width="49.83" height="12.43" fill="#fff" /><rect x="464.90" y="586.69" width="49.83" height="12.43" fill="#fff" /><rect x="687.30" y="586.69" width="48.00" height="12.43" fill="#fff" /><rect x="801.60" y="586.69" width="33.10" height="12.43" fill="#fff" /><rect x="909.50" y="586.69" width="42.90" height="12.43" fill="#fff" /><rect x="160.45" y="599.12" width="16.95" height="12.43" fill="#fff" /><rect x="315.41" y="599.12" width="49.83" height="12.43" fill="#fff" /><rect x="464.90" y="599.12" width="49.83" height="12.43" fill="#fff" /><rect x="687.30" y="599.12" width="48.00" height="12.43" fill="#fff" /><rect x="801.60" y="599.12" width="33.10" height="12.43" fill="#fff" /><rect x="909.50" y="599.12" width="42.90" height="12.43" fill="#fff" /><rect x="160.45" y="611.55" width="16.95" height="12.43" fill="#fff" /><rect x="315.41" y="611.55" width="49.83" height="12.43" fill="#fff" /><rect x="464.90" y="611.55" width="49.83" height="12.43" fill="#fff" /><rect x="687.30" y="611.55" width="48.00" height="12.43" fill="#fff" /><rect x="801.60" y="611.55" width="33.10" height="12.43" fill="#fff" /><rect x="853.40" y="611.55" width="18.80" height="12.43" fill="#fff" /><rect x="890.90" y="611.55" width="61.50" height="12.43" fill="#fff" /><rect x="160.45" y="623.99" width="16.95" height="12.43" fill="#fff" /><rect x="315.41" y="623.99" width="49.83" height="12.43" fill="#fff" /><rect x="464.90" y="623.99" width="49.83" height="12.43" fill="#fff" /><rect x="687.30" y="623.99" width="48.00" height="12.43" fill="#fff" /><rect x="801.60" y="623.99" width="33.10" height="12.43" fill="#fff" /><rect x="909.50" y="623.99" width="42.90" height="12.43" fill="#fff" /><rect x="160.45" y="636.42" width="16.95" height="12.43" fill="#fff" /><rect x="315.41" y="636.42" width="49.83" height="12.43" fill="#fff" /><rect x="464.90" y="636.42" width="49.83" height="12.43" fill="#fff" /><rect x="687.30" y="636.42" width="48.00" height="12.43" fill="#fff" /><rect x="801.60" y="636.42" width="33.10" height="12.43" fill="#fff" /><rect x="909.50" y="636.42" width="42.90" height="12.43" fill="#fff" /><rect x="160.45" y="648.86" width="16.95" height="12.43" fill="#fff" /><rect x="315.41" y="648.86" width="49.83" height="12.43" fill="#fff" /><rect x="464.90" y="648.86" width="49.83" height="12.43" fill="#fff" /><rect x="687.30" y="648.86" width="48.00" height="12.43" fill="#fff" /><rect x="801.60" y="648.86" width="33.10" height="12.43" fill="#fff" /><rect x="909.50" y="648.86" width="42.90" height="12.43" fill="#fff" /><rect x="160.45" y="661.29" width="16.95" height="7.01" fill="#fff" /><rect x="315.41" y="661.29" width="49.83" height="7.01" fill="#fff" /><rect x="464.90" y="661.29" width="49.83" height="7.01" fill="#fff" /><rect x="687.30" y="661.29" width="48.00" height="7.01" fill="#fff" /><rect x="801.60" y="661.29" width="33.10" height="7.01" fill="#fff" /><rect x="909.50" y="661.29" width="42.90" height="7.01" fill="#fff" /><rect x="952.40" y="300.70" width="2.30" height="12.43" fill="#fff" /><rect x="952.40" y="313.14" width="2.30" height="12.43" fill="#fff" /><rect x="952.40" y="325.57" width="2.30" height="12.43" fill="#fff" /><rect x="952.40" y="350.44" width="2.30" height="12.43" fill="#fff" /><rect x="952.40" y="375.31" width="2.30" height="12.43" fill="#fff" /><rect x="952.40" y="387.74" width="2.30" height="12.43" fill="#fff" /><rect x="952.40" y="400.18" width="2.30" height="12.43" fill="#fff" /><rect x="952.40" y="437.48" width="2.30" height="12.43" fill="#fff" /><rect x="952.40" y="449.91" width="2.30" height="12.43" fill="#fff" /><rect x="952.40" y="499.65" width="2.30" height="12.43" fill="#fff" /><rect x="952.40" y="524.52" width="2.30" height="12.43" fill="#fff" /><rect x="952.40" y="536.95" width="2.30" height="12.43" fill="#fff" /><rect x="952.40" y="549.38" width="2.30" height="12.43" fill="#fff" /><rect x="952.40" y="574.25" width="2.30" height="12.43" fill="#fff" /><rect x="952.40" y="586.69" width="2.30" height="12.43" fill="#fff" /><rect x="952.40" y="599.12" width="2.30" height="12.43" fill="#fff" /><rect x="952.40" y="611.55" width="2.30" height="12.43" fill="#fff" /><rect x="952.40" y="623.99" width="2.30" height="12.43" fill="#fff" /><rect x="952.40" y="636.42" width="2.30" height="12.43" fill="#fff" /><rect x="952.40" y="648.86" width="2.30" height="12.43" fill="#fff" /><rect x="952.40" y="661.29" width="2.30" height="7.01" fill="#fff" /><path d="M18.20 238.53L954.70 238.53" stroke="#000" stroke-width="1.0"/><path d="M0.80 238.53L17.00 238.53" stroke="#c4c4c4" stroke-width="0.8"/><path d="M18.20 250.97L954.70 250.97" stroke="#000" stroke-width="1.0"/><path d="M0.80 250.97L17.00 250.97" stroke="#c4c4c4" stroke-width="0.8"/><path d="M18.20 263.40L954.70 263.40" stroke="#000" stroke-width="1.0"/><path d="M0.80 263.40L17.00 263.40" stroke="#c4c4c4" stroke-width="0.8"/><path d="M18.20 275.84L954.70 275.84" stroke="#000" stroke-width="1.0"/><path d="M0.80 275.84L17.00 275.84" stroke="#c4c4c4" stroke-width="0.8"/><path d="M18.20 288.27L954.70 288.27" stroke="#000" stroke-width="1.0"/><path d="M0.80 288.27L17.00 288.27" stroke="#c4c4c4" stroke-width="0.8"/><path d="M18.20 300.70L954.70 300.70" stroke="#000" stroke-width="1.0"/><path d="M0.80 300.70L17.00 300.70" stroke="#c4c4c4" stroke-width="0.8"/><path d="M18.20 313.14L954.70 313.14" stroke="#000" stroke-width="1.0"/><path d="M0.80 313.14L17.00 313.14" stroke="#c4c4c4" stroke-width="0.8"/><path d="M18.20 325.57L954.70 325.57" stroke="#000" stroke-width="1.0"/><path d="M0.80 325.57L17.00 325.57" stroke="#c4c4c4" stroke-width="0.8"/><path d="M18.20 338.01L954.70 338.01" stroke="#000" stroke-width="1.0"/><path d="M0.80 338.01L17.00 338.01" stroke="#c4c4c4" stroke-width="0.8"/><path d="M18.20 350.44L954.70 350.44" stroke="#000" stroke-width="1.0"/><path d="M0.80 350.44L17.00 350.44" stroke="#c4c4c4" stroke-width="0.8"/><path d="M18.20 362.87L954.70 362.87" stroke="#000" stroke-width="1.0"/><path d="M0.80 362.87L17.00 362.87" stroke="#c4c4c4" stroke-width="0.8"/><path d="M18.20 375.31L954.70 375.31" stroke="#000" stroke-width="1.0"/><path d="M0.80 375.31L17.00 375.31" stroke="#c4c4c4" stroke-width="0.8"/><path d="M18.20 387.74L954.70 387.74" stroke="#000" stroke-width="1.0"/><path d="M0.80 387.74L17.00 387.74" stroke="#c4c4c4" stroke-width="0.8"/><path d="M18.20 400.18L954.70 400.18" stroke="#000" stroke-width="1.0"/><path d="M0.80 400.18L17.00 400.18" stroke="#c4c4c4" stroke-width="0.8"/><path d="M18.20 412.61L954.70 412.61" stroke="#000" stroke-width="1.0"/><path d="M0.80 412.61L17.00 412.61" stroke="#c4c4c4" stroke-width="0.8"/><path d="M18.20 425.04L954.70 425.04" stroke="#000" stroke-width="1.0"/><path d="M0.80 425.04L17.00 425.04" stroke="#c4c4c4" stroke-width="0.8"/><path d="M18.20 437.48L954.70 437.48" stroke="#000" stroke-width="1.0"/><path d="M0.80 437.48L17.00 437.48" stroke="#c4c4c4" stroke-width="0.8"/><path d="M18.20 449.91L954.70 449.91" stroke="#000" stroke-width="1.0"/><path d="M0.80 449.91L17.00 449.91" stroke="#c4c4c4" stroke-width="0.8"/><path d="M18.20 462.35L954.70 462.35" stroke="#000" stroke-width="1.0"/><path d="M0.80 462.35L17.00 462.35" stroke="#c4c4c4" stroke-width="0.8"/><path d="M18.20 474.78L954.70 474.78" stroke="#000" stroke-width="1.0"/><path d="M0.80 474.78L17.00 474.78" stroke="#c4c4c4" stroke-width="0.8"/><path d="M18.20 487.21L954.70 487.21" stroke="#000" stroke-width="1.0"/><path d="M0.80 487.21L17.00 487.21" stroke="#c4c4c4" stroke-width="0.8"/><path d="M18.20 499.65L954.70 499.65" stroke="#000" stroke-width="1.0"/><path d="M0.80 499.65L17.00 499.65" stroke="#c4c4c4" stroke-width="0.8"/><path d="M18.20 512.08L954.70 512.08" stroke="#000" stroke-width="1.0"/><path d="M0.80 512.08L17.00 512.08" stroke="#c4c4c4" stroke-width="0.8"/><path d="M18.20 524.52L954.70 524.52" stroke="#000" stroke-width="1.0"/><path d="M0.80 524.52L17.00 524.52" stroke="#c4c4c4" stroke-width="0.8"/><path d="M18.20 536.95L954.70 536.95" stroke="#000" stroke-width="1.0"/><path d="M0.80 536.95L17.00 536.95" stroke="#c4c4c4" stroke-width="0.8"/><path d="M18.20 549.38L954.70 549.38" stroke="#000" stroke-width="1.0"/><path d="M0.80 549.38L17.00 549.38" stroke="#c4c4c4" stroke-width="0.8"/><path d="M18.20 561.82L954.70 561.82" stroke="#000" stroke-width="1.0"/><path d="M0.80 561.82L17.00 561.82" stroke="#c4c4c4" stroke-width="0.8"/><path d="M18.20 574.25L954.70 574.25" stroke="#000" stroke-width="1.0"/><path d="M0.80 574.25L17.00 574.25" stroke="#c4c4c4" stroke-width="0.8"/><path d="M18.20 586.69L954.70 586.69" stroke="#000" stroke-width="1.0"/><path d="M0.80 586.69L17.00 586.69" stroke="#c4c4c4" stroke-width="0.8"/><path d="M18.20 599.12L954.70 599.12" stroke="#000" stroke-width="1.0"/><path d="M0.80 599.12L17.00 599.12" stroke="#c4c4c4" stroke-width="0.8"/><path d="M18.20 611.55L954.70 611.55" stroke="#000" stroke-width="1.0"/><path d="M0.80 611.55L17.00 611.55" stroke="#c4c4c4" stroke-width="0.8"/><path d="M18.20 623.99L954.70 623.99" stroke="#000" stroke-width="1.0"/><path d="M0.80 623.99L17.00 623.99" stroke="#c4c4c4" stroke-width="0.8"/><path d="M18.20 636.42L954.70 636.42" stroke="#000" stroke-width="1.0"/><path d="M0.80 636.42L17.00 636.42" stroke="#c4c4c4" stroke-width="0.8"/><path d="M18.20 648.86L954.70 648.86" stroke="#000" stroke-width="1.0"/><path d="M0.80 648.86L17.00 648.86" stroke="#c4c4c4" stroke-width="0.8"/><path d="M18.20 661.29L954.70 661.29" stroke="#000" stroke-width="1.0"/><path d="M0.80 661.29L17.00 661.29" stroke="#c4c4c4" stroke-width="0.8"/><path d="M124.80 226.10L124.80 668.30" stroke="#000" stroke-width="1.0"/><path d="M160.45 226.10L160.45 668.30" stroke="#000" stroke-width="1.0"/><path d="M177.40 226.10L177.40 668.30" stroke="#000" stroke-width="1.0"/><path d="M193.70 226.10L193.70 668.30" stroke="#000" stroke-width="1.0"/><path d="M215.75 226.10L215.75 668.30" stroke="#9a9a9a" stroke-width="1.1"/><path d="M232.36 226.10L232.36 668.30" stroke="#000" stroke-width="1.0"/><path d="M248.97 226.10L248.97 668.30" stroke="#000" stroke-width="1.0"/><path d="M265.58 226.10L265.58 668.30" stroke="#000" stroke-width="1.0"/><path d="M282.19 226.10L282.19 668.30" stroke="#000" stroke-width="1.0"/><path d="M298.80 226.10L298.80 668.30" stroke="#000" stroke-width="1.0"/><path d="M315.41 226.10L315.41 668.30" stroke="#000" stroke-width="1.0"/><path d="M332.02 226.10L332.02 668.30" stroke="#000" stroke-width="1.0"/><path d="M348.63 226.10L348.63 668.30" stroke="#000" stroke-width="1.0"/><path d="M365.24 226.10L365.24 668.30" stroke="#000" stroke-width="1.0"/><path d="M381.85 226.10L381.85 668.30" stroke="#000" stroke-width="1.0"/><path d="M398.46 226.10L398.46 668.30" stroke="#000" stroke-width="1.0"/><path d="M415.07 226.10L415.07 668.30" stroke="#000" stroke-width="1.0"/><path d="M431.68 226.10L431.68 668.30" stroke="#000" stroke-width="1.0"/><path d="M448.29 226.10L448.29 668.30" stroke="#000" stroke-width="1.0"/><path d="M464.90 226.10L464.90 668.30" stroke="#000" stroke-width="1.0"/><path d="M481.51 226.10L481.51 668.30" stroke="#000" stroke-width="1.0"/><path d="M498.12 226.10L498.12 668.30" stroke="#000" stroke-width="1.0"/><path d="M514.73 226.10L514.73 668.30" stroke="#000" stroke-width="1.0"/><path d="M549.70 226.10L549.70 668.30" stroke="#000" stroke-width="1.0"/><path d="M584.90 226.10L584.90 668.30" stroke="#000" stroke-width="1.0"/><path d="M620.10 226.10L620.10 668.30" stroke="#000" stroke-width="1.0"/><path d="M655.50 226.10L655.50 668.30" stroke="#000" stroke-width="1.0"/><path d="M670.90 226.10L670.90 668.30" stroke="#000" stroke-width="1.0"/><path d="M687.30 226.10L687.30 668.30" stroke="#000" stroke-width="1.0"/><path d="M703.40 226.10L703.40 668.30" stroke="#000" stroke-width="1.0"/><path d="M719.40 226.10L719.40 668.30" stroke="#000" stroke-width="1.0"/><path d="M735.30 226.10L735.30 668.30" stroke="#000" stroke-width="1.0"/><path d="M751.70 226.10L751.70 668.30" stroke="#000" stroke-width="1.0"/><path d="M768.40 226.10L768.40 668.30" stroke="#000" stroke-width="1.0"/><path d="M785.20 226.10L785.20 668.30" stroke="#000" stroke-width="1.0"/><path d="M801.60 226.10L801.60 668.30" stroke="#000" stroke-width="1.0"/><path d="M818.40 226.10L818.40 668.30" stroke="#000" stroke-width="1.0"/><path d="M834.70 226.10L834.70 668.30" stroke="#000" stroke-width="1.0"/><path d="M853.40 226.10L853.40 668.30" stroke="#000" stroke-width="1.0"/><path d="M872.20 226.10L872.20 668.30" stroke="#000" stroke-width="1.0"/><path d="M890.90 226.10L890.90 668.30" stroke="#000" stroke-width="1.0"/><path d="M909.50 226.10L909.50 668.30" stroke="#000" stroke-width="1.0"/><path d="M930.50 226.10L930.50 668.30" stroke="#000" stroke-width="1.0"/><path d="M952.40 226.10L952.40 668.30" stroke="#000" stroke-width="1.0"/><path d="M17.90 226.10L17.90 668.30" stroke="#9a9a9a" stroke-width="0.9"/><rect x="18.00" y="128.8" width="106.80" height="97.60" fill="none" stroke="#217346" stroke-width="1.5"/><rect x="123.10" y="224.60" width="3.40" height="3.40" fill="#217346" stroke="#fff" stroke-width=".7"/><path d="M0.00 668.30L957.00 668.30" stroke="#b0b0b0" stroke-width="0.8"/></svg>
<span class="t" style="left:69.0px;top:117.7px;font-size:9.2px;line-height:11.04px;color:#217346;transform:scaleX(0.810) rotate(.03deg);-webkit-text-stroke:.2px currentColor;">B</span>
<span class="t" style="left:139.9px;top:117.7px;font-size:9.2px;line-height:11.04px;color:#2a2a2a;transform:scaleX(0.810) rotate(.03deg);-webkit-text-stroke:.2px currentColor;">C</span>
<span class="t" style="left:166.2px;top:117.7px;font-size:9.2px;line-height:11.04px;color:#2a2a2a;transform:scaleX(0.810) rotate(.03deg);-webkit-text-stroke:.2px currentColor;">D</span>
<span class="t" style="left:183.1px;top:117.7px;font-size:9.2px;line-height:11.04px;color:#2a2a2a;transform:scaleX(0.810) rotate(.03deg);-webkit-text-stroke:.2px currentColor;">E</span>
<span class="t" style="left:202.4px;top:117.7px;font-size:9.2px;line-height:11.04px;color:#2a2a2a;transform:scaleX(0.810) rotate(.03deg);-webkit-text-stroke:.2px currentColor;">F</span>
<span class="t" style="left:219.6px;top:117.7px;font-size:9.2px;line-height:11.04px;color:#2a2a2a;transform:scaleX(0.810) rotate(.03deg);-webkit-text-stroke:.2px currentColor;">AT</span>
<span class="t" style="left:235.5px;top:117.7px;font-size:9.2px;line-height:11.04px;color:#2a2a2a;transform:scaleX(0.810) rotate(.03deg);-webkit-text-stroke:.2px currentColor;">AU</span>
<span class="t" style="left:252.6px;top:117.7px;font-size:9.2px;line-height:11.04px;color:#2a2a2a;transform:scaleX(0.810) rotate(.03deg);-webkit-text-stroke:.2px currentColor;">AV</span>
<span class="t" style="left:268.0px;top:117.7px;font-size:9.2px;line-height:11.04px;color:#2a2a2a;transform:scaleX(0.810) rotate(.03deg);-webkit-text-stroke:.2px currentColor;">AW</span>
<span class="t" style="left:285.5px;top:117.7px;font-size:9.2px;line-height:11.04px;color:#2a2a2a;transform:scaleX(0.810) rotate(.03deg);-webkit-text-stroke:.2px currentColor;">AX</span>
<span class="t" style="left:302.4px;top:117.7px;font-size:9.2px;line-height:11.04px;color:#2a2a2a;transform:scaleX(0.810) rotate(.03deg);-webkit-text-stroke:.2px currentColor;">AY</span>
<span class="t" style="left:318.7px;top:117.7px;font-size:9.2px;line-height:11.04px;color:#2a2a2a;transform:scaleX(0.810) rotate(.03deg);-webkit-text-stroke:.2px currentColor;">BB</span>
<span class="t" style="left:335.1px;top:117.7px;font-size:9.2px;line-height:11.04px;color:#2a2a2a;transform:scaleX(0.810) rotate(.03deg);-webkit-text-stroke:.2px currentColor;">BC</span>
<span class="t" style="left:351.8px;top:117.7px;font-size:9.2px;line-height:11.04px;color:#2a2a2a;transform:scaleX(0.810) rotate(.03deg);-webkit-text-stroke:.2px currentColor;">BD</span>
<span class="t" style="left:368.6px;top:117.7px;font-size:9.2px;line-height:11.04px;color:#2a2a2a;transform:scaleX(0.810) rotate(.03deg);-webkit-text-stroke:.2px currentColor;">BK</span>
<span class="t" style="left:385.6px;top:117.7px;font-size:9.2px;line-height:11.04px;color:#2a2a2a;transform:scaleX(0.810) rotate(.03deg);-webkit-text-stroke:.2px currentColor;">BL</span>
<span class="t" style="left:401.2px;top:117.7px;font-size:9.2px;line-height:11.04px;color:#2a2a2a;transform:scaleX(0.810) rotate(.03deg);-webkit-text-stroke:.2px currentColor;">BM</span>
<span class="t" style="left:418.2px;top:117.7px;font-size:9.2px;line-height:11.04px;color:#2a2a2a;transform:scaleX(0.810) rotate(.03deg);-webkit-text-stroke:.2px currentColor;">BN</span>
<span class="t" style="left:434.6px;top:117.7px;font-size:9.2px;line-height:11.04px;color:#2a2a2a;transform:scaleX(0.810) rotate(.03deg);-webkit-text-stroke:.2px currentColor;">BO</span>
<span class="t" style="left:451.6px;top:117.7px;font-size:9.2px;line-height:11.04px;color:#2a2a2a;transform:scaleX(0.810) rotate(.03deg);-webkit-text-stroke:.2px currentColor;">BP</span>
<span class="t" style="left:468.2px;top:117.7px;font-size:9.2px;line-height:11.04px;color:#2a2a2a;transform:scaleX(0.810) rotate(.03deg);-webkit-text-stroke:.2px currentColor;">BS</span>
<span class="t" style="left:485.1px;top:117.7px;font-size:9.2px;line-height:11.04px;color:#2a2a2a;transform:scaleX(0.810) rotate(.03deg);-webkit-text-stroke:.2px currentColor;">BT</span>
<span class="t" style="left:501.2px;top:117.7px;font-size:9.2px;line-height:11.04px;color:#2a2a2a;transform:scaleX(0.810) rotate(.03deg);-webkit-text-stroke:.2px currentColor;">BU</span>
<span class="t" style="left:526.8px;top:117.7px;font-size:9.2px;line-height:11.04px;color:#2a2a2a;transform:scaleX(0.810) rotate(.03deg);-webkit-text-stroke:.2px currentColor;">CC</span>
<span class="t" style="left:561.9px;top:117.7px;font-size:9.2px;line-height:11.04px;color:#2a2a2a;transform:scaleX(0.810) rotate(.03deg);-webkit-text-stroke:.2px currentColor;">CD</span>
<span class="t" style="left:597.3px;top:117.7px;font-size:9.2px;line-height:11.04px;color:#2a2a2a;transform:scaleX(0.810) rotate(.03deg);-webkit-text-stroke:.2px currentColor;">CE</span>
<span class="t" style="left:632.8px;top:117.7px;font-size:9.2px;line-height:11.04px;color:#2a2a2a;transform:scaleX(0.810) rotate(.03deg);-webkit-text-stroke:.2px currentColor;">CF</span>
<span class="t" style="left:657.6px;top:117.7px;font-size:9.2px;line-height:11.04px;color:#2a2a2a;transform:scaleX(0.810) rotate(.03deg);-webkit-text-stroke:.2px currentColor;">CG</span>
<span class="t" style="left:673.7px;top:117.7px;font-size:9.2px;line-height:11.04px;color:#2a2a2a;transform:scaleX(0.810) rotate(.03deg);-webkit-text-stroke:.2px currentColor;">CH</span>
<span class="t" style="left:690.8px;top:117.7px;font-size:9.2px;line-height:11.04px;color:#2a2a2a;transform:scaleX(0.810) rotate(.03deg);-webkit-text-stroke:.2px currentColor;">CJ</span>
<span class="t" style="left:706.2px;top:117.7px;font-size:9.2px;line-height:11.04px;color:#2a2a2a;transform:scaleX(0.810) rotate(.03deg);-webkit-text-stroke:.2px currentColor;">CK</span>
<span class="t" style="left:722.6px;top:117.7px;font-size:9.2px;line-height:11.04px;color:#2a2a2a;transform:scaleX(0.810) rotate(.03deg);-webkit-text-stroke:.2px currentColor;">CL</span>
<span class="t" style="left:738.3px;top:117.7px;font-size:9.2px;line-height:11.04px;color:#2a2a2a;transform:scaleX(0.810) rotate(.03deg);-webkit-text-stroke:.2px currentColor;">CS</span>
<span class="t" style="left:755.1px;top:117.7px;font-size:9.2px;line-height:11.04px;color:#2a2a2a;transform:scaleX(0.810) rotate(.03deg);-webkit-text-stroke:.2px currentColor;">CT</span>
<span class="t" style="left:771.4px;top:117.7px;font-size:9.2px;line-height:11.04px;color:#2a2a2a;transform:scaleX(0.810) rotate(.03deg);-webkit-text-stroke:.2px currentColor;">CU</span>
<span class="t" style="left:788.2px;top:117.7px;font-size:9.2px;line-height:11.04px;color:#2a2a2a;transform:scaleX(0.810) rotate(.03deg);-webkit-text-stroke:.2px currentColor;">CV</span>
<span class="t" style="left:805.0px;top:117.7px;font-size:9.2px;line-height:11.04px;color:#2a2a2a;transform:scaleX(0.810) rotate(.03deg);-webkit-text-stroke:.2px currentColor;">CZ</span>
<span class="t" style="left:821.4px;top:117.7px;font-size:9.2px;line-height:11.04px;color:#2a2a2a;transform:scaleX(0.810) rotate(.03deg);-webkit-text-stroke:.2px currentColor;">DA</span>
<span class="t" style="left:840.3px;top:117.7px;font-size:9.2px;line-height:11.04px;color:#2a2a2a;transform:scaleX(0.810) rotate(.03deg);-webkit-text-stroke:.2px currentColor;">DI</span>
<span class="t" style="left:858.2px;top:117.7px;font-size:9.2px;line-height:11.04px;color:#2a2a2a;transform:scaleX(0.810) rotate(.03deg);-webkit-text-stroke:.2px currentColor;">DJ</span>
<span class="t" style="left:876.4px;top:117.7px;font-size:9.2px;line-height:11.04px;color:#2a2a2a;transform:scaleX(0.810) rotate(.03deg);-webkit-text-stroke:.2px currentColor;">DK</span>
<span class="t" style="left:895.4px;top:117.7px;font-size:9.2px;line-height:11.04px;color:#2a2a2a;transform:scaleX(0.810) rotate(.03deg);-webkit-text-stroke:.2px currentColor;">DL</span>
<span class="t" style="left:914.8px;top:117.7px;font-size:9.2px;line-height:11.04px;color:#2a2a2a;transform:scaleX(0.810) rotate(.03deg);-webkit-text-stroke:.2px currentColor;">DP</span>
<span class="t" style="left:935.9px;top:117.7px;font-size:9.2px;line-height:11.04px;color:#2a2a2a;transform:scaleX(0.810) rotate(.03deg);-webkit-text-stroke:.2px currentColor;">DQ</span>
<span class="t" style="left:6.8px;top:129.8px;font-size:9.3px;line-height:11.16px;color:#217346;transform:scaleX(0.870) rotate(.03deg);">1</span>
<span class="t" style="left:6.8px;top:214.1px;font-size:9.3px;line-height:11.16px;color:#217346;transform:scaleX(0.870) rotate(.03deg);">2</span>
<span class="t" style="left:248.0px;top:131.2px;font-size:9.3px;line-height:11.16px;color:#000;transform:scaleX(0.838) rotate(.03deg);font-weight:bold;-webkit-text-stroke:.2px #000;">Copy Number Analysis</span>
<span class="t" style="left:417.0px;top:131.2px;font-size:9.3px;line-height:11.16px;color:#000;transform:scaleX(0.890) rotate(.03deg);font-weight:bold;-webkit-text-stroke:.2px #000;">Methylation</span>
<span class="t" style="left:560.0px;top:131.2px;font-size:9.3px;line-height:11.16px;color:#000;transform:scaleX(0.844) rotate(.03deg);font-weight:bold;-webkit-text-stroke:.2px #000;">Whole Genome Sequencing (WGS)</span>
<span class="t" style="left:759.0px;top:131.2px;font-size:9.3px;line-height:11.16px;color:#000;transform:scaleX(0.853) rotate(.03deg);font-weight:bold;-webkit-text-stroke:.2px #000;">Whole Exome</span>
<span class="t" style="left:838.0px;top:131.2px;font-size:9.3px;line-height:11.16px;color:#000;transform:scaleX(0.843) rotate(.03deg);font-weight:bold;-webkit-text-stroke:.2px #000;">Targeted Capture Sequencing</span>
<span class="t" style="left:219.6px;top:172.7px;font-size:9px;line-height:10.80px;color:#111;transform:scaleX(0.800) rotate(.03deg);font-weight:bold;-webkit-text-stroke:.2px #111;">L1</span>
<span class="t" style="left:219.2px;top:185.1px;font-size:9px;line-height:10.80px;color:#111;transform:scaleX(0.800) rotate(.03deg);font-weight:bold;-webkit-text-stroke:.2px #111;">(T)</span>
<span class="t" style="left:236.2px;top:172.7px;font-size:9px;line-height:10.80px;color:#111;transform:scaleX(0.800) rotate(.03deg);font-weight:bold;-webkit-text-stroke:.2px #111;">L1</span>
<span class="t" style="left:235.4px;top:185.1px;font-size:9px;line-height:10.80px;color:#111;transform:scaleX(0.800) rotate(.03deg);font-weight:bold;-webkit-text-stroke:.2px #111;">(N)</span>
<span class="t" style="left:252.8px;top:172.7px;font-size:9px;line-height:10.80px;color:#111;transform:scaleX(0.800) rotate(.03deg);font-weight:bold;-webkit-text-stroke:.2px #111;">L2</span>
<span class="t" style="left:252.4px;top:185.1px;font-size:9px;line-height:10.80px;color:#111;transform:scaleX(0.800) rotate(.03deg);font-weight:bold;-webkit-text-stroke:.2px #111;">(T)</span>
<span class="t" style="left:269.4px;top:172.7px;font-size:9px;line-height:10.80px;color:#111;transform:scaleX(0.800) rotate(.03deg);font-weight:bold;-webkit-text-stroke:.2px #111;">L2</span>
<span class="t" style="left:268.6px;top:185.1px;font-size:9px;line-height:10.80px;color:#111;transform:scaleX(0.800) rotate(.03deg);font-weight:bold;-webkit-text-stroke:.2px #111;">(N)</span>
<span class="t" style="left:286.0px;top:172.7px;font-size:9px;line-height:10.80px;color:#111;transform:scaleX(0.800) rotate(.03deg);font-weight:bold;-webkit-text-stroke:.2px #111;">L3</span>
<span class="t" style="left:285.6px;top:185.1px;font-size:9px;line-height:10.80px;color:#111;transform:scaleX(0.800) rotate(.03deg);font-weight:bold;-webkit-text-stroke:.2px #111;">(T)</span>
<span class="t" style="left:302.6px;top:172.7px;font-size:9px;line-height:10.80px;color:#111;transform:scaleX(0.800) rotate(.03deg);font-weight:bold;-webkit-text-stroke:.2px #111;">L3</span>
<span class="t" style="left:301.8px;top:185.1px;font-size:9px;line-height:10.80px;color:#111;transform:scaleX(0.800) rotate(.03deg);font-weight:bold;-webkit-text-stroke:.2px #111;">(N)</span>
<span class="t" style="left:319.2px;top:172.7px;font-size:9px;line-height:10.80px;color:#111;transform:scaleX(0.800) rotate(.03deg);font-weight:bold;-webkit-text-stroke:.2px #111;">L1</span>
<span class="t" style="left:318.4px;top:185.1px;font-size:9px;line-height:10.80px;color:#111;transform:scaleX(0.800) rotate(.03deg);font-weight:bold;-webkit-text-stroke:.2px #111;">(R)</span>
<span class="t" style="left:335.8px;top:172.7px;font-size:9px;line-height:10.80px;color:#111;transform:scaleX(0.800) rotate(.03deg);font-weight:bold;-webkit-text-stroke:.2px #111;">L2</span>
<span class="t" style="left:335.0px;top:185.1px;font-size:9px;line-height:10.80px;color:#111;transform:scaleX(0.800) rotate(.03deg);font-weight:bold;-webkit-text-stroke:.2px #111;">(R)</span>
<span class="t" style="left:352.4px;top:172.7px;font-size:9px;line-height:10.80px;color:#111;transform:scaleX(0.800) rotate(.03deg);font-weight:bold;-webkit-text-stroke:.2px #111;">L3</span>
<span class="t" style="left:351.6px;top:185.1px;font-size:9px;line-height:10.80px;color:#111;transform:scaleX(0.800) rotate(.03deg);font-weight:bold;-webkit-text-stroke:.2px #111;">(R)</span>
<span class="t" style="left:369.0px;top:172.7px;font-size:9px;line-height:10.80px;color:#111;transform:scaleX(0.800) rotate(.03deg);font-weight:bold;-webkit-text-stroke:.2px #111;">L1</span>
<span class="t" style="left:368.6px;top:185.1px;font-size:9px;line-height:10.80px;color:#111;transform:scaleX(0.800) rotate(.03deg);font-weight:bold;-webkit-text-stroke:.2px #111;">(T)</span>
<span class="t" style="left:385.7px;top:172.7px;font-size:9px;line-height:10.80px;color:#111;transform:scaleX(0.800) rotate(.03deg);font-weight:bold;-webkit-text-stroke:.2px #111;">L1</span>
<span class="t" style="left:384.9px;top:185.1px;font-size:9px;line-height:10.80px;color:#111;transform:scaleX(0.800) rotate(.03deg);font-weight:bold;-webkit-text-stroke:.2px #111;">(N)</span>
<span class="t" style="left:402.3px;top:172.7px;font-size:9px;line-height:10.80px;color:#111;transform:scaleX(0.800) rotate(.03deg);font-weight:bold;-webkit-text-stroke:.2px #111;">L2</span>
<span class="t" style="left:401.9px;top:185.1px;font-size:9px;line-height:10.80px;color:#111;transform:scaleX(0.800) rotate(.03deg);font-weight:bold;-webkit-text-stroke:.2px #111;">(T)</span>
<span class="t" style="left:418.9px;top:172.7px;font-size:9px;line-height:10.80px;color:#111;transform:scaleX(0.800) rotate(.03deg);font-weight:bold;-webkit-text-stroke:.2px #111;">L2</span>
<span class="t" style="left:418.1px;top:185.1px;font-size:9px;line-height:10.80px;color:#111;transform:scaleX(0.800) rotate(.03deg);font-weight:bold;-webkit-text-stroke:.2px #111;">(N)</span>
<span class="t" style="left:435.5px;top:172.7px;font-size:9px;line-height:10.80px;color:#111;transform:scaleX(0.800) rotate(.03deg);font-weight:bold;-webkit-text-stroke:.2px #111;">L3</span>
<span class="t" style="left:435.1px;top:185.1px;font-size:9px;line-height:10.80px;color:#111;transform:scaleX(0.800) rotate(.03deg);font-weight:bold;-webkit-text-stroke:.2px #111;">(T)</span>
<span class="t" style="left:452.1px;top:172.7px;font-size:9px;line-height:10.80px;color:#111;transform:scaleX(0.800) rotate(.03deg);font-weight:bold;-webkit-text-stroke:.2px #111;">L3</span>
<span class="t" style="left:451.3px;top:185.1px;font-size:9px;line-height:10.80px;color:#111;transform:scaleX(0.800) rotate(.03deg);font-weight:bold;-webkit-text-stroke:.2px #111;">(N)</span>
<span class="t" style="left:468.7px;top:172.7px;font-size:9px;line-height:10.80px;color:#111;transform:scaleX(0.800) rotate(.03deg);font-weight:bold;-webkit-text-stroke:.2px #111;">L1</span>
<span class="t" style="left:467.9px;top:185.1px;font-size:9px;line-height:10.80px;color:#111;transform:scaleX(0.800) rotate(.03deg);font-weight:bold;-webkit-text-stroke:.2px #111;">(R)</span>
<span class="t" style="left:485.3px;top:172.7px;font-size:9px;line-height:10.80px;color:#111;transform:scaleX(0.800) rotate(.03deg);font-weight:bold;-webkit-text-stroke:.2px #111;">L2</span>
<span class="t" style="left:484.5px;top:185.1px;font-size:9px;line-height:10.80px;color:#111;transform:scaleX(0.800) rotate(.03deg);font-weight:bold;-webkit-text-stroke:.2px #111;">(R)</span>
<span class="t" style="left:501.9px;top:172.7px;font-size:9px;line-height:10.80px;color:#111;transform:scaleX(0.800) rotate(.03deg);font-weight:bold;-webkit-text-stroke:.2px #111;">L3</span>
<span class="t" style="left:501.1px;top:185.1px;font-size:9px;line-height:10.80px;color:#111;transform:scaleX(0.800) rotate(.03deg);font-weight:bold;-webkit-text-stroke:.2px #111;">(R)</span>
<span class="t" style="left:522.1px;top:178.7px;font-size:9px;line-height:10.80px;color:#111;transform:scaleX(0.800) rotate(.03deg);font-weight:bold;-webkit-text-stroke:.2px #111;">L2 (T)</span>
<span class="t" style="left:556.8px;top:178.7px;font-size:9px;line-height:10.80px;color:#111;transform:scaleX(0.800) rotate(.03deg);font-weight:bold;-webkit-text-stroke:.2px #111;">L2 (N)</span>
<span class="t" style="left:592.4px;top:178.7px;font-size:9px;line-height:10.80px;color:#111;transform:scaleX(0.800) rotate(.03deg);font-weight:bold;-webkit-text-stroke:.2px #111;">L3 (T)</span>
<span class="t" style="left:627.3px;top:178.7px;font-size:9px;line-height:10.80px;color:#111;transform:scaleX(0.800) rotate(.03deg);font-weight:bold;-webkit-text-stroke:.2px #111;">L3 (N)</span>
<span class="t" style="left:658.7px;top:172.7px;font-size:9px;line-height:10.80px;color:#111;transform:scaleX(0.800) rotate(.03deg);font-weight:bold;-webkit-text-stroke:.2px #111;">L4</span>
<span class="t" style="left:658.3px;top:185.1px;font-size:9px;line-height:10.80px;color:#111;transform:scaleX(0.800) rotate(.03deg);font-weight:bold;-webkit-text-stroke:.2px #111;">(T)</span>
<span class="t" style="left:674.6px;top:172.7px;font-size:9px;line-height:10.80px;color:#111;transform:scaleX(0.800) rotate(.03deg);font-weight:bold;-webkit-text-stroke:.2px #111;">L4</span>
<span class="t" style="left:673.8px;top:185.1px;font-size:9px;line-height:10.80px;color:#111;transform:scaleX(0.800) rotate(.03deg);font-weight:bold;-webkit-text-stroke:.2px #111;">(N)</span>
<span class="t" style="left:690.8px;top:172.7px;font-size:9px;line-height:10.80px;color:#111;transform:scaleX(0.800) rotate(.03deg);font-weight:bold;-webkit-text-stroke:.2px #111;">L2</span>
<span class="t" style="left:690.1px;top:185.1px;font-size:9px;line-height:10.80px;color:#111;transform:scaleX(0.800) rotate(.03deg);font-weight:bold;-webkit-text-stroke:.2px #111;">(R)</span>
<span class="t" style="left:706.9px;top:172.7px;font-size:9px;line-height:10.80px;color:#111;transform:scaleX(0.800) rotate(.03deg);font-weight:bold;-webkit-text-stroke:.2px #111;">L3</span>
<span class="t" style="left:706.1px;top:185.1px;font-size:9px;line-height:10.80px;color:#111;transform:scaleX(0.800) rotate(.03deg);font-weight:bold;-webkit-text-stroke:.2px #111;">(R)</span>
<span class="t" style="left:722.8px;top:172.7px;font-size:9px;line-height:10.80px;color:#111;transform:scaleX(0.800) rotate(.03deg);font-weight:bold;-webkit-text-stroke:.2px #111;">L4</span>
<span class="t" style="left:722.1px;top:185.1px;font-size:9px;line-height:10.80px;color:#111;transform:scaleX(0.800) rotate(.03deg);font-weight:bold;-webkit-text-stroke:.2px #111;">(R)</span>
<span class="t" style="left:739.0px;top:172.7px;font-size:9px;line-height:10.80px;color:#111;transform:scaleX(0.800) rotate(.03deg);font-weight:bold;-webkit-text-stroke:.2px #111;">L2</span>
<span class="t" style="left:738.6px;top:185.1px;font-size:9px;line-height:10.80px;color:#111;transform:scaleX(0.800) rotate(.03deg);font-weight:bold;-webkit-text-stroke:.2px #111;">(T)</span>
<span class="t" style="left:755.5px;top:172.7px;font-size:9px;line-height:10.80px;color:#111;transform:scaleX(0.800) rotate(.03deg);font-weight:bold;-webkit-text-stroke:.2px #111;">L2</span>
<span class="t" style="left:754.8px;top:185.1px;font-size:9px;line-height:10.80px;color:#111;transform:scaleX(0.800) rotate(.03deg);font-weight:bold;-webkit-text-stroke:.2px #111;">(N)</span>
<span class="t" style="left:772.3px;top:172.7px;font-size:9px;line-height:10.80px;color:#111;transform:scaleX(0.800) rotate(.03deg);font-weight:bold;-webkit-text-stroke:.2px #111;">L3</span>
<span class="t" style="left:771.9px;top:185.1px;font-size:9px;line-height:10.80px;color:#111;transform:scaleX(0.800) rotate(.03deg);font-weight:bold;-webkit-text-stroke:.2px #111;">(T)</span>
<span class="t" style="left:788.9px;top:172.7px;font-size:9px;line-height:10.80px;color:#111;transform:scaleX(0.800) rotate(.03deg);font-weight:bold;-webkit-text-stroke:.2px #111;">L3</span>
<span class="t" style="left:788.1px;top:185.1px;font-size:9px;line-height:10.80px;color:#111;transform:scaleX(0.800) rotate(.03deg);font-weight:bold;-webkit-text-stroke:.2px #111;">(N)</span>
<span class="t" style="left:805.5px;top:172.7px;font-size:9px;line-height:10.80px;color:#111;transform:scaleX(0.800) rotate(.03deg);font-weight:bold;-webkit-text-stroke:.2px #111;">L2</span>
<span class="t" style="left:804.7px;top:185.1px;font-size:9px;line-height:10.80px;color:#111;transform:scaleX(0.800) rotate(.03deg);font-weight:bold;-webkit-text-stroke:.2px #111;">(R)</span>
<span class="t" style="left:822.0px;top:172.7px;font-size:9px;line-height:10.80px;color:#111;transform:scaleX(0.800) rotate(.03deg);font-weight:bold;-webkit-text-stroke:.2px #111;">L3</span>
<span class="t" style="left:821.3px;top:185.1px;font-size:9px;line-height:10.80px;color:#111;transform:scaleX(0.800) rotate(.03deg);font-weight:bold;-webkit-text-stroke:.2px #111;">(R)</span>
<span class="t" style="left:839.5px;top:172.7px;font-size:9px;line-height:10.80px;color:#111;transform:scaleX(0.800) rotate(.03deg);font-weight:bold;-webkit-text-stroke:.2px #111;">L2</span>
<span class="t" style="left:839.2px;top:185.1px;font-size:9px;line-height:10.80px;color:#111;transform:scaleX(0.800) rotate(.03deg);font-weight:bold;-webkit-text-stroke:.2px #111;">(T)</span>
<span class="t" style="left:858.3px;top:172.7px;font-size:9px;line-height:10.80px;color:#111;transform:scaleX(0.800) rotate(.03deg);font-weight:bold;-webkit-text-stroke:.2px #111;">L2</span>
<span class="t" style="left:857.5px;top:185.1px;font-size:9px;line-height:10.80px;color:#111;transform:scaleX(0.800) rotate(.03deg);font-weight:bold;-webkit-text-stroke:.2px #111;">(N)</span>
<span class="t" style="left:877.0px;top:172.7px;font-size:9px;line-height:10.80px;color:#111;transform:scaleX(0.800) rotate(.03deg);font-weight:bold;-webkit-text-stroke:.2px #111;">L3</span>
<span class="t" style="left:876.7px;top:185.1px;font-size:9px;line-height:10.80px;color:#111;transform:scaleX(0.800) rotate(.03deg);font-weight:bold;-webkit-text-stroke:.2px #111;">(T)</span>
<span class="t" style="left:895.7px;top:172.7px;font-size:9px;line-height:10.80px;color:#111;transform:scaleX(0.800) rotate(.03deg);font-weight:bold;-webkit-text-stroke:.2px #111;">L3</span>
<span class="t" style="left:894.9px;top:185.1px;font-size:9px;line-height:10.80px;color:#111;transform:scaleX(0.800) rotate(.03deg);font-weight:bold;-webkit-text-stroke:.2px #111;">(N)</span>
<span class="t" style="left:915.5px;top:172.7px;font-size:9px;line-height:10.80px;color:#111;transform:scaleX(0.800) rotate(.03deg);font-weight:bold;-webkit-text-stroke:.2px #111;">L2</span>
<span class="t" style="left:914.7px;top:185.1px;font-size:9px;line-height:10.80px;color:#111;transform:scaleX(0.800) rotate(.03deg);font-weight:bold;-webkit-text-stroke:.2px #111;">(R)</span>
<span class="t" style="left:936.9px;top:172.7px;font-size:9px;line-height:10.80px;color:#111;transform:scaleX(0.800) rotate(.03deg);font-weight:bold;-webkit-text-stroke:.2px #111;">L3</span>
<span class="t" style="left:936.2px;top:185.1px;font-size:9px;line-height:10.80px;color:#111;transform:scaleX(0.800) rotate(.03deg);font-weight:bold;-webkit-text-stroke:.2px #111;">(R)</span>
<span class="t" style="left:55.9px;top:171.6px;font-size:9px;line-height:10.80px;color:#000;transform:scaleX(0.800) rotate(.03deg);font-weight:bold;-webkit-text-stroke:.2px #000;">Case USI</span>
<span class="v" style="left:136.0px;top:176.5px;font-size:9px;line-height:10.8px;transform:translate(-50%,-50%) rotate(-90deg) scaleX(0.843)">Fully Characterized</span>
<span class="v" style="left:148.9px;top:177.2px;font-size:9px;line-height:10.8px;transform:translate(-50%,-50%) rotate(-90deg) scaleX(0.785)">TARGET Case</span>
<span class="v" style="left:169.0px;top:177.6px;font-size:9px;line-height:10.8px;transform:translate(-50%,-50%) rotate(-90deg) scaleX(0.824)">Trio</span>
<span class="v" style="left:185.6px;top:177.2px;font-size:9px;line-height:10.8px;transform:translate(-50%,-50%) rotate(-90deg) scaleX(0.802)">Clinical Data</span>
<span class="v" style="left:205.0px;top:177.8px;font-size:9px;line-height:10.8px;transform:translate(-50%,-50%) rotate(-90deg) scaleX(0.853)">Verified by TCS</span>
<div class="r" style="left:0;top:226.1px;width:957px;height:442.2px;overflow:hidden">
<span class="t" style="left:7.1px;top:1.10px;font-size:9.3px;line-height:11.5px;color:#222;-webkit-text-stroke:.25px #222;transform:scaleX(.87) rotate(.03deg)">3</span>
<span class="t" style="left:20px;top:1.90px;font-size:8px;line-height:11px;color:#000;-webkit-text-stroke:.25px #000;transform:scaleX(0.929) rotate(.03deg)">TARGET-20-PANGTF</span>
<div class="row" style="top:1.60px"><i style="left:125.1px;width:35.6px">Y</i><i style="left:160.8px;width:17.0px">Y</i><i style="left:177.7px;width:16.3px">Y</i><i style="left:194.0px;width:22.1px">Y</i><i style="left:216.1px;width:16.6px">Y</i><i style="left:232.7px;width:16.6px">Y</i><i style="left:249.3px;width:16.6px">Y</i><i style="left:265.9px;width:16.6px">Y</i><i style="left:282.5px;width:16.6px">Y</i><i style="left:299.1px;width:16.6px">Y</i><i style="left:315.7px;width:16.6px">N</i><i style="left:332.3px;width:16.6px">N</i><i style="left:348.9px;width:16.6px">N</i><i style="left:365.5px;width:16.6px">Y</i><i style="left:382.2px;width:16.6px">Y</i><i style="left:398.8px;width:16.6px">Y</i><i style="left:415.4px;width:16.6px">Y</i><i style="left:432.0px;width:16.6px">Y</i><i style="left:448.6px;width:16.6px">Y</i><i style="left:465.2px;width:16.6px">N</i><i style="left:481.8px;width:16.6px">N</i><i style="left:498.4px;width:16.6px">N</i><i style="left:515.0px;width:35.0px">Y</i><i style="left:550.0px;width:35.2px">Y</i><i style="left:585.2px;width:35.2px">Y</i><i style="left:620.4px;width:35.4px">Y</i><i style="left:655.8px;width:15.4px">Y</i><i style="left:671.2px;width:16.4px">Y</i><i style="left:687.6px;width:16.1px">N</i><i style="left:703.7px;width:16.0px">N</i><i style="left:719.7px;width:15.9px">N</i><i style="left:735.6px;width:16.4px">Y</i><i style="left:752.0px;width:16.7px">Y</i><i style="left:768.7px;width:16.8px">Y</i><i style="left:785.5px;width:16.4px">Y</i><i style="left:801.9px;width:16.8px">Y</i><i style="left:818.7px;width:16.3px">Y</i><i style="left:835.0px;width:18.7px">Y</i><i style="left:853.7px;width:18.8px">Y</i><i style="left:872.5px;width:18.7px">Y</i><i style="left:891.2px;width:18.6px">Y</i><i style="left:909.8px;width:21.0px">N</i><i style="left:930.8px;width:21.9px">N</i></div>
<span class="t" style="left:7.1px;top:13.53px;font-size:9.3px;line-height:11.5px;color:#222;-webkit-text-stroke:.25px #222;transform:scaleX(.87) rotate(.03deg)">4</span>
<span class="t" style="left:20px;top:14.33px;font-size:8px;line-height:11px;color:#000;-webkit-text-stroke:.25px #000;transform:scaleX(0.929) rotate(.03deg)">TARGET-20-PARUNX</span>
<div class="row" style="top:14.03px"><i style="left:125.1px;width:35.6px">Y</i><i style="left:160.8px;width:17.0px">Y</i><i style="left:177.7px;width:16.3px">Y</i><i style="left:194.0px;width:22.1px">Y</i><i style="left:216.1px;width:16.6px">Y</i><i style="left:232.7px;width:16.6px">Y</i><i style="left:249.3px;width:16.6px">Y</i><i style="left:265.9px;width:16.6px">Y</i><i style="left:282.5px;width:16.6px">Y</i><i style="left:299.1px;width:16.6px">Y</i><i style="left:315.7px;width:16.6px">Y</i><i style="left:332.3px;width:16.6px">Y</i><i style="left:348.9px;width:16.6px">Y</i><i style="left:365.5px;width:16.6px">Y</i><i style="left:382.2px;width:16.6px">Y</i><i style="left:398.8px;width:16.6px">Y</i><i style="left:415.4px;width:16.6px">Y</i><i style="left:432.0px;width:16.6px">Y</i><i style="left:448.6px;width:16.6px">Y</i><i style="left:465.2px;width:16.6px">Y</i><i style="left:481.8px;width:16.6px">Y</i><i style="left:498.4px;width:16.6px">Y</i><i style="left:515.0px;width:35.0px">Y</i><i style="left:550.0px;width:35.2px">Y</i><i style="left:585.2px;width:35.2px">Y</i><i style="left:620.4px;width:35.4px">Y</i><i style="left:655.8px;width:15.4px">Y</i><i style="left:671.2px;width:16.4px">Y</i><i style="left:687.6px;width:16.1px">Y</i><i style="left:703.7px;width:16.0px">Y</i><i style="left:719.7px;width:15.9px">Y</i><i style="left:735.6px;width:16.4px">Y</i><i style="left:752.0px;width:16.7px">Y</i><i style="left:768.7px;width:16.8px">Y</i><i style="left:785.5px;width:16.4px">Y</i><i style="left:801.9px;width:16.8px">Y</i><i style="left:818.7px;width:16.3px">Y</i><i style="left:835.0px;width:18.7px">Y</i><i style="left:853.7px;width:18.8px">N</i><i style="left:872.5px;width:18.7px">Y</i><i style="left:891.2px;width:18.6px">N</i><i style="left:909.8px;width:21.0px">Y</i><i style="left:930.8px;width:21.9px">Y</i></div>
<span class="t" style="left:7.1px;top:25.97px;font-size:9.3px;line-height:11.5px;color:#222;-webkit-text-stroke:.25px #222;transform:scaleX(.87) rotate(.03deg)">5</span>
<span class="t" style="left:20px;top:26.77px;font-size:8px;line-height:11px;color:#000;-webkit-text-stroke:.25px #000;transform:scaleX(0.929) rotate(.03deg)">TARGET-20-PASFEW</span>
<div class="row" style="top:26.47px"><i style="left:125.1px;width:35.6px">Y</i><i style="left:160.8px;width:17.0px">Y</i><i style="left:177.7px;width:16.3px">Y</i><i style="left:194.0px;width:22.1px">Y</i><i style="left:216.1px;width:16.6px">Y</i><i style="left:232.7px;width:16.6px">Y</i><i style="left:249.3px;width:16.6px">Y</i><i style="left:265.9px;width:16.6px">Y</i><i style="left:282.5px;width:16.6px">Y</i><i style="left:299.1px;width:16.6px">Y</i><i style="left:315.7px;width:16.6px">Y</i><i style="left:332.3px;width:16.6px">Y</i><i style="left:348.9px;width:16.6px">Y</i><i style="left:365.5px;width:16.6px">Y</i><i style="left:382.2px;width:16.6px">Y</i><i style="left:398.8px;width:16.6px">Y</i><i style="left:415.4px;width:16.6px">Y</i><i style="left:432.0px;width:16.6px">Y</i><i style="left:448.6px;width:16.6px">Y</i><i style="left:465.2px;width:16.6px">Y</i><i style="left:481.8px;width:16.6px">Y</i><i style="left:498.4px;width:16.6px">Y</i><i style="left:515.0px;width:35.0px">Y</i><i style="left:550.0px;width:35.2px">Y</i><i style="left:585.2px;width:35.2px">Y</i><i style="left:620.4px;width:35.4px">Y</i><i style="left:655.8px;width:15.4px">Y</i><i style="left:671.2px;width:16.4px">Y</i><i style="left:687.6px;width:16.1px">Y</i><i style="left:703.7px;width:16.0px">Y</i><i style="left:719.7px;width:15.9px">Y</i><i style="left:735.6px;width:16.4px">Y</i><i style="left:752.0px;width:16.7px">Y</i><i style="left:768.7px;width:16.8px">Y</i><i style="left:785.5px;width:16.4px">Y</i><i style="left:801.9px;width:16.8px">Y</i><i style="left:818.7px;width:16.3px">Y</i><i style="left:835.0px;width:18.7px">Y</i><i style="left:853.7px;width:18.8px">Y</i><i style="left:872.5px;width:18.7px">Y</i><i style="left:891.2px;width:18.6px">Y</i><i style="left:909.8px;width:21.0px">Y</i><i style="left:930.8px;width:21.9px">Y</i></div>
<span class="t" style="left:7.1px;top:38.40px;font-size:9.3px;line-height:11.5px;color:#222;-webkit-text-stroke:.25px #222;transform:scaleX(.87) rotate(.03deg)">6</span>
<span class="t" style="left:20px;top:39.20px;font-size:8px;line-height:11px;color:#000;-webkit-text-stroke:.25px #000;transform:scaleX(0.929) rotate(.03deg)">TARGET-20-PANSBH</span>
<div class="row" style="top:38.90px"><i style="left:125.1px;width:35.6px">Y</i><i style="left:160.8px;width:17.0px">Y</i><i style="left:177.7px;width:16.3px">Y</i><i style="left:194.0px;width:22.1px">Y</i><i style="left:216.1px;width:16.6px">Y</i><i style="left:232.7px;width:16.6px">Y</i><i style="left:249.3px;width:16.6px">Y</i><i style="left:265.9px;width:16.6px">Y</i><i style="left:282.5px;width:16.6px">Y</i><i style="left:299.1px;width:16.6px">Y</i><i style="left:315.7px;width:16.6px">Y</i><i style="left:332.3px;width:16.6px">Y</i><i style="left:348.9px;width:16.6px">Y</i><i style="left:365.5px;width:16.6px">Y</i><i style="left:382.2px;width:16.6px">Y</i><i style="left:398.8px;width:16.6px">Y</i><i style="left:415.4px;width:16.6px">Y</i><i style="left:432.0px;width:16.6px">Y</i><i style="left:448.6px;width:16.6px">Y</i><i style="left:465.2px;width:16.6px">Y</i><i style="left:481.8px;width:16.6px">Y</i><i style="left:498.4px;width:16.6px">Y</i><i style="left:515.0px;width:35.0px">Y</i><i style="left:550.0px;width:35.2px">Y</i><i style="left:585.2px;width:35.2px">Y</i><i style="left:620.4px;width:35.4px">Y</i><i style="left:655.8px;width:15.4px">Y</i><i style="left:671.2px;width:16.4px">Y</i><i style="left:687.6px;width:16.1px">N</i><i style="left:703.7px;width:16.0px">N</i><i style="left:719.7px;width:15.9px">N</i><i style="left:735.6px;width:16.4px">Y</i><i style="left:752.0px;width:16.7px">Y</i><i style="left:768.7px;width:16.8px">Y</i><i style="left:785.5px;width:16.4px">Y</i><i style="left:801.9px;width:16.8px">Y</i><i style="left:818.7px;width:16.3px">Y</i><i style="left:835.0px;width:18.7px">Y</i><i style="left:853.7px;width:18.8px">Y</i><i style="left:872.5px;width:18.7px">Y</i><i style="left:891.2px;width:18.6px">Y</i><i style="left:909.8px;width:21.0px">N</i><i style="left:930.8px;width:21.9px">N</i></div>
<span class="t" style="left:7.1px;top:50.84px;font-size:9.3px;line-height:11.5px;color:#222;-webkit-text-stroke:.25px #222;transform:scaleX(.87) rotate(.03deg)">7</span>
<span class="t" style="left:20px;top:51.64px;font-size:8px;line-height:11px;color:#000;-webkit-text-stroke:.25px #000;transform:scaleX(0.929) rotate(.03deg)">TARGET-20-PANVGP</span>
<div class="row" style="top:51.34px"><i style="left:125.1px;width:35.6px">Y</i><i style="left:160.8px;width:17.0px">Y</i><i style="left:177.7px;width:16.3px">Y</i><i style="left:194.0px;width:22.1px">Y</i><i style="left:216.1px;width:16.6px">Y</i><i style="left:232.7px;width:16.6px">Y</i><i style="left:249.3px;width:16.6px">Y</i><i style="left:265.9px;width:16.6px">Y</i><i style="left:282.5px;width:16.6px">Y</i><i style="left:299.1px;width:16.6px">Y</i><i style="left:315.7px;width:16.6px">Y</i><i style="left:332.3px;width:16.6px">Y</i><i style="left:348.9px;width:16.6px">Y</i><i style="left:365.5px;width:16.6px">Y</i><i style="left:382.2px;width:16.6px">Y</i><i style="left:398.8px;width:16.6px">Y</i><i style="left:415.4px;width:16.6px">Y</i><i style="left:432.0px;width:16.6px">Y</i><i style="left:448.6px;width:16.6px">Y</i><i style="left:465.2px;width:16.6px">Y</i><i style="left:481.8px;width:16.6px">Y</i><i style="left:498.4px;width:16.6px">Y</i><i style="left:515.0px;width:35.0px">Y</i><i style="left:550.0px;width:35.2px">Y</i><i style="left:585.2px;width:35.2px">Y</i><i style="left:620.4px;width:35.4px">Y</i><i style="left:655.8px;width:15.4px">Y</i><i style="left:671.2px;width:16.4px">Y</i><i style="left:687.6px;width:16.1px">Y</i><i style="left:703.7px;width:16.0px">Y</i><i style="left:719.7px;width:15.9px">Y</i><i style="left:735.6px;width:16.4px">Y</i><i style="left:752.0px;width:16.7px">Y</i><i style="left:768.7px;width:16.8px">Y</i><i style="left:785.5px;width:16.4px">Y</i><i style="left:801.9px;width:16.8px">Y</i><i style="left:818.7px;width:16.3px">Y</i><i style="left:835.0px;width:18.7px">Y</i><i style="left:853.7px;width:18.8px">Y</i><i style="left:872.5px;width:18.7px">Y</i><i style="left:891.2px;width:18.6px">Y</i><i style="left:909.8px;width:21.0px">Y</i><i style="left:930.8px;width:21.9px">Y</i></div>
<span class="t" style="left:7.1px;top:63.27px;font-size:9.3px;line-height:11.5px;color:#222;-webkit-text-stroke:.25px #222;transform:scaleX(.87) rotate(.03deg)">8</span>
<span class="t" style="left:20px;top:64.07px;font-size:8px;line-height:11px;color:#000;-webkit-text-stroke:.25px #000;transform:scaleX(0.929) rotate(.03deg)">TARGET-20-PARGVC</span>
<div class="row" style="top:63.77px"><i style="left:125.1px;width:35.6px">Y</i><i style="left:160.8px;width:17.0px">Y</i><i style="left:177.7px;width:16.3px">Y</i><i style="left:194.0px;width:22.1px">Y</i><i style="left:216.1px;width:16.6px">Y</i><i style="left:232.7px;width:16.6px">Y</i><i style="left:249.3px;width:16.6px">Y</i><i style="left:265.9px;width:16.6px">Y</i><i style="left:282.5px;width:16.6px">Y</i><i style="left:299.1px;width:16.6px">Y</i><i style="left:315.7px;width:16.6px">Y</i><i style="left:332.3px;width:16.6px">Y</i><i style="left:348.9px;width:16.6px">Y</i><i style="left:365.5px;width:16.6px">Y</i><i style="left:382.2px;width:16.6px">Y</i><i style="left:398.8px;width:16.6px">Y</i><i style="left:415.4px;width:16.6px">Y</i><i style="left:432.0px;width:16.6px">Y</i><i style="left:448.6px;width:16.6px">Y</i><i style="left:465.2px;width:16.6px">N</i><i style="left:481.8px;width:16.6px">N</i><i style="left:498.4px;width:16.6px">N</i><i style="left:515.0px;width:35.0px">Y</i><i style="left:550.0px;width:35.2px">Y</i><i style="left:585.2px;width:35.2px">Y</i><i style="left:620.4px;width:35.4px">Y</i><i style="left:655.8px;width:15.4px">Y</i><i style="left:671.2px;width:16.4px">Y</i><i style="left:687.6px;width:16.1px">N</i><i style="left:703.7px;width:16.0px">N</i><i style="left:719.7px;width:15.9px">N</i><i style="left:735.6px;width:16.4px">Y</i><i style="left:752.0px;width:16.7px">Y</i><i style="left:768.7px;width:16.8px">Y</i><i style="left:785.5px;width:16.4px">Y</i><i style="left:801.9px;width:16.8px">Y</i><i style="left:818.7px;width:16.3px">Y</i><i style="left:835.0px;width:18.7px">Y</i><i style="left:853.7px;width:18.8px">Y</i><i style="left:872.5px;width:18.7px">Y</i><i style="left:891.2px;width:18.6px">Y</i><i style="left:909.8px;width:21.0px">N</i><i style="left:930.8px;width:21.9px">N</i></div>
<span class="t" style="left:7.1px;top:75.70px;font-size:9.3px;line-height:11.5px;color:#222;-webkit-text-stroke:.25px #222;transform:scaleX(.87) rotate(.03deg)">9</span>
<span class="t" style="left:20px;top:76.50px;font-size:8px;line-height:11px;color:#000;-webkit-text-stroke:.25px #000;transform:scaleX(0.929) rotate(.03deg)">TARGET-20-PATELT</span>
<div class="row" style="top:76.20px"><i style="left:125.1px;width:35.6px">Y</i><i style="left:160.8px;width:17.0px">N</i><i style="left:177.7px;width:16.3px">Y</i><i style="left:194.0px;width:22.1px">Y</i><i style="left:216.1px;width:16.6px">Y</i><i style="left:232.7px;width:16.6px">Y</i><i style="left:249.3px;width:16.6px">Y</i><i style="left:265.9px;width:16.6px">Y</i><i style="left:282.5px;width:16.6px">Y</i><i style="left:299.1px;width:16.6px">Y</i><i style="left:315.7px;width:16.6px">N</i><i style="left:332.3px;width:16.6px">N</i><i style="left:348.9px;width:16.6px">N</i><i style="left:365.5px;width:16.6px">Y</i><i style="left:382.2px;width:16.6px">Y</i><i style="left:398.8px;width:16.6px">Y</i><i style="left:415.4px;width:16.6px">Y</i><i style="left:432.0px;width:16.6px">Y</i><i style="left:448.6px;width:16.6px">Y</i><i style="left:465.2px;width:16.6px">N</i><i style="left:481.8px;width:16.6px">N</i><i style="left:498.4px;width:16.6px">N</i><i style="left:515.0px;width:35.0px">Y</i><i style="left:550.0px;width:35.2px">Y</i><i style="left:585.2px;width:35.2px">Y</i><i style="left:620.4px;width:35.4px">Y</i><i style="left:655.8px;width:15.4px">Y</i><i style="left:671.2px;width:16.4px">Y</i><i style="left:687.6px;width:16.1px">N</i><i style="left:703.7px;width:16.0px">N</i><i style="left:719.7px;width:15.9px">N</i><i style="left:735.6px;width:16.4px">Y</i><i style="left:752.0px;width:16.7px">Y</i><i style="left:768.7px;width:16.8px">Y</i><i style="left:785.5px;width:16.4px">Y</i><i style="left:801.9px;width:16.8px">N</i><i style="left:818.7px;width:16.3px">N</i><i style="left:835.0px;width:18.7px">Y</i><i style="left:853.7px;width:18.8px">N</i><i style="left:872.5px;width:18.7px">Y</i><i style="left:891.2px;width:18.6px">N</i><i style="left:909.8px;width:21.0px">N</i><i style="left:930.8px;width:21.9px">N</i></div>
<span class="t" style="left:4.8px;top:88.14px;font-size:9.3px;line-height:11.5px;color:#222;-webkit-text-stroke:.25px #222;transform:scaleX(.87) rotate(.03deg)">10</span>
<span class="t" style="left:20px;top:88.94px;font-size:8px;line-height:11px;color:#000;-webkit-text-stroke:.25px #000;transform:scaleX(0.929) rotate(.03deg)">TARGET-20-PAKIYW</span>
<div class="row" style="top:88.64px"><i style="left:125.1px;width:35.6px">Y</i><i style="left:160.8px;width:17.0px">N</i><i style="left:177.7px;width:16.3px">Y</i><i style="left:194.0px;width:22.1px">N</i><i style="left:216.1px;width:16.6px">Y</i><i style="left:232.7px;width:16.6px">Y</i><i style="left:249.3px;width:16.6px">Y</i><i style="left:265.9px;width:16.6px">Y</i><i style="left:282.5px;width:16.6px">Y</i><i style="left:299.1px;width:16.6px">Y</i><i style="left:315.7px;width:16.6px">N</i><i style="left:332.3px;width:16.6px">N</i><i style="left:348.9px;width:16.6px">N</i><i style="left:365.5px;width:16.6px">Y</i><i style="left:382.2px;width:16.6px">Y</i><i style="left:398.8px;width:16.6px">Y</i><i style="left:415.4px;width:16.6px">Y</i><i style="left:432.0px;width:16.6px">Y</i><i style="left:448.6px;width:16.6px">Y</i><i style="left:465.2px;width:16.6px">N</i><i style="left:481.8px;width:16.6px">N</i><i style="left:498.4px;width:16.6px">N</i><i style="left:515.0px;width:35.0px">Y</i><i style="left:550.0px;width:35.2px">Y</i><i style="left:585.2px;width:35.2px">Y</i><i style="left:620.4px;width:35.4px">Y</i><i style="left:655.8px;width:15.4px">Y</i><i style="left:671.2px;width:16.4px">Y</i><i style="left:687.6px;width:16.1px">N</i><i style="left:703.7px;width:16.0px">N</i><i style="left:719.7px;width:15.9px">N</i><i style="left:735.6px;width:16.4px">Y</i><i style="left:752.0px;width:16.7px">Y</i><i style="left:768.7px;width:16.8px">Y</i><i style="left:785.5px;width:16.4px">Y</i><i style="left:801.9px;width:16.8px">N</i><i style="left:818.7px;width:16.3px">N</i><i style="left:835.0px;width:18.7px">N</i><i style="left:853.7px;width:18.8px">N</i><i style="left:872.5px;width:18.7px">N</i><i style="left:891.2px;width:18.6px">N</i><i style="left:909.8px;width:21.0px">N</i><i style="left:930.8px;width:21.9px">N</i></div>
<span class="t" style="left:5.1px;top:100.57px;font-size:9.3px;line-height:11.5px;color:#222;-webkit-text-stroke:.25px #222;transform:scaleX(.87) rotate(.03deg)">11</span>
<span class="t" style="left:20px;top:101.37px;font-size:8px;line-height:11px;color:#000;-webkit-text-stroke:.25px #000;transform:scaleX(0.929) rotate(.03deg)">TARGET-20-PAMYGX</span>
<div class="row" style="top:101.07px"><i style="left:125.1px;width:35.6px">Y</i><i style="left:160.8px;width:17.0px">N</i><i style="left:177.7px;width:16.3px">Y</i><i style="left:194.0px;width:22.1px">Y</i><i style="left:216.1px;width:16.6px">Y</i><i style="left:232.7px;width:16.6px">Y</i><i style="left:249.3px;width:16.6px">Y</i><i style="left:265.9px;width:16.6px">Y</i><i style="left:282.5px;width:16.6px">Y</i><i style="left:299.1px;width:16.6px">Y</i><i style="left:315.7px;width:16.6px">N</i><i style="left:332.3px;width:16.6px">N</i><i style="left:348.9px;width:16.6px">N</i><i style="left:365.5px;width:16.6px">Y</i><i style="left:382.2px;width:16.6px">Y</i><i style="left:398.8px;width:16.6px">Y</i><i style="left:415.4px;width:16.6px">Y</i><i style="left:432.0px;width:16.6px">Y</i><i style="left:448.6px;width:16.6px">Y</i><i style="left:465.2px;width:16.6px">N</i><i style="left:481.8px;width:16.6px">N</i><i style="left:498.4px;width:16.6px">N</i><i style="left:515.0px;width:35.0px">Y</i><i style="left:550.0px;width:35.2px">Y</i><i style="left:585.2px;width:35.2px">Y</i><i style="left:620.4px;width:35.4px">Y</i><i style="left:655.8px;width:15.4px">Y</i><i style="left:671.2px;width:16.4px">Y</i><i style="left:687.6px;width:16.1px">N</i><i style="left:703.7px;width:16.0px">N</i><i style="left:719.7px;width:15.9px">N</i><i style="left:735.6px;width:16.4px">Y</i><i style="left:752.0px;width:16.7px">Y</i><i style="left:768.7px;width:16.8px">Y</i><i style="left:785.5px;width:16.4px">Y</i><i style="left:801.9px;width:16.8px">N</i><i style="left:818.7px;width:16.3px">N</i><i style="left:835.0px;width:18.7px">Y</i><i style="left:853.7px;width:18.8px">Y</i><i style="left:872.5px;width:18.7px">Y</i><i style="left:891.2px;width:18.6px">Y</i><i style="left:909.8px;width:21.0px">N</i><i style="left:930.8px;width:21.9px">N</i></div>
<span class="t" style="left:4.8px;top:113.01px;font-size:9.3px;line-height:11.5px;color:#222;-webkit-text-stroke:.25px #222;transform:scaleX(.87) rotate(.03deg)">12</span>
<span class="t" style="left:20px;top:113.81px;font-size:8px;line-height:11px;color:#000;-webkit-text-stroke:.25px #000;transform:scaleX(0.929) rotate(.03deg)">TARGET-20-PANNHB</span>
<div class="row" style="top:113.51px"><i style="left:125.1px;width:35.6px">Y</i><i style="left:160.8px;width:17.0px">Y</i><i style="left:177.7px;width:16.3px">Y</i><i style="left:194.0px;width:22.1px">Y</i><i style="left:216.1px;width:16.6px">Y</i><i style="left:232.7px;width:16.6px">Y</i><i style="left:249.3px;width:16.6px">Y</i><i style="left:265.9px;width:16.6px">Y</i><i style="left:282.5px;width:16.6px">Y</i><i style="left:299.1px;width:16.6px">Y</i><i style="left:315.7px;width:16.6px">N</i><i style="left:332.3px;width:16.6px">N</i><i style="left:348.9px;width:16.6px">N</i><i style="left:365.5px;width:16.6px">Y</i><i style="left:382.2px;width:16.6px">Y</i><i style="left:398.8px;width:16.6px">Y</i><i style="left:415.4px;width:16.6px">Y</i><i style="left:432.0px;width:16.6px">Y</i><i style="left:448.6px;width:16.6px">Y</i><i style="left:465.2px;width:16.6px">Y</i><i style="left:481.8px;width:16.6px">Y</i><i style="left:498.4px;width:16.6px">Y</i><i style="left:515.0px;width:35.0px">Y</i><i style="left:550.0px;width:35.2px">Y</i><i style="left:585.2px;width:35.2px">Y</i><i style="left:620.4px;width:35.4px">Y</i><i style="left:655.8px;width:15.4px">Y</i><i style="left:671.2px;width:16.4px">Y</i><i style="left:687.6px;width:16.1px">Y</i><i style="left:703.7px;width:16.0px">Y</i><i style="left:719.7px;width:15.9px">Y</i><i style="left:735.6px;width:16.4px">Y</i><i style="left:752.0px;width:16.7px">Y</i><i style="left:768.7px;width:16.8px">Y</i><i style="left:785.5px;width:16.4px">Y</i><i style="left:801.9px;width:16.8px">N</i><i style="left:818.7px;width:16.3px">N</i><i style="left:835.0px;width:18.7px">Y</i><i style="left:853.7px;width:18.8px">Y</i><i style="left:872.5px;width:18.7px">Y</i><i style="left:891.2px;width:18.6px">Y</i><i style="left:909.8px;width:21.0px">Y</i><i style="left:930.8px;width:21.9px">Y</i></div>
<span class="t" style="left:4.8px;top:125.44px;font-size:9.3px;line-height:11.5px;color:#222;-webkit-text-stroke:.25px #222;transform:scaleX(.87) rotate(.03deg)">13</span>
<span class="t" style="left:20px;top:126.24px;font-size:8px;line-height:11px;color:#000;-webkit-text-stroke:.25px #000;transform:scaleX(0.929) rotate(.03deg)">TARGET-20-PANUTB</span>
<div class="row" style="top:125.94px"><i style="left:125.1px;width:35.6px">Y</i><i style="left:160.8px;width:17.0px">N</i><i style="left:177.7px;width:16.3px">Y</i><i style="left:194.0px;width:22.1px">Y</i><i style="left:216.1px;width:16.6px">Y</i><i style="left:232.7px;width:16.6px">Y</i><i style="left:249.3px;width:16.6px">Y</i><i style="left:265.9px;width:16.6px">Y</i><i style="left:282.5px;width:16.6px">Y</i><i style="left:299.1px;width:16.6px">Y</i><i style="left:315.7px;width:16.6px">N</i><i style="left:332.3px;width:16.6px">N</i><i style="left:348.9px;width:16.6px">N</i><i style="left:365.5px;width:16.6px">Y</i><i style="left:382.2px;width:16.6px">Y</i><i style="left:398.8px;width:16.6px">Y</i><i style="left:415.4px;width:16.6px">Y</i><i style="left:432.0px;width:16.6px">Y</i><i style="left:448.6px;width:16.6px">Y</i><i style="left:465.2px;width:16.6px">N</i><i style="left:481.8px;width:16.6px">N</i><i style="left:498.4px;width:16.6px">N</i><i style="left:515.0px;width:35.0px">Y</i><i style="left:550.0px;width:35.2px">Y</i><i style="left:585.2px;width:35.2px">Y</i><i style="left:620.4px;width:35.4px">Y</i><i style="left:655.8px;width:15.4px">Y</i><i style="left:671.2px;width:16.4px">Y</i><i style="left:687.6px;width:16.1px">N</i><i style="left:703.7px;width:16.0px">N</i><i style="left:719.7px;width:15.9px">N</i><i style="left:735.6px;width:16.4px">Y</i><i style="left:752.0px;width:16.7px">Y</i><i style="left:768.7px;width:16.8px">Y</i><i style="left:785.5px;width:16.4px">Y</i><i style="left:801.9px;width:16.8px">N</i><i style="left:818.7px;width:16.3px">N</i><i style="left:835.0px;width:18.7px">Y</i><i style="left:853.7px;width:18.8px">Y</i><i style="left:872.5px;width:18.7px">Y</i><i style="left:891.2px;width:18.6px">Y</i><i style="left:909.8px;width:21.0px">N</i><i style="left:930.8px;width:21.9px">N</i></div>
<span class="t" style="left:4.8px;top:137.87px;font-size:9.3px;line-height:11.5px;color:#222;-webkit-text-stroke:.25px #222;transform:scaleX(.87) rotate(.03deg)">14</span>
<span class="t" style="left:20px;top:138.67px;font-size:8px;line-height:11px;color:#000;-webkit-text-stroke:.25px #000;transform:scaleX(0.929) rotate(.03deg)">TARGET-20-PANYNR</span>
<div class="row" style="top:138.37px"><i style="left:125.1px;width:35.6px">Y</i><i style="left:160.8px;width:17.0px">Y</i><i style="left:177.7px;width:16.3px">Y</i><i style="left:194.0px;width:22.1px">Y</i><i style="left:216.1px;width:16.6px">Y</i><i style="left:232.7px;width:16.6px">Y</i><i style="left:249.3px;width:16.6px">Y</i><i style="left:265.9px;width:16.6px">Y</i><i style="left:282.5px;width:16.6px">Y</i><i style="left:299.1px;width:16.6px">Y</i><i style="left:315.7px;width:16.6px">N</i><i style="left:332.3px;width:16.6px">N</i><i style="left:348.9px;width:16.6px">N</i><i style="left:365.5px;width:16.6px">Y</i><i style="left:382.2px;width:16.6px">Y</i><i style="left:398.8px;width:16.6px">Y</i><i style="left:415.4px;width:16.6px">Y</i><i style="left:432.0px;width:16.6px">Y</i><i style="left:448.6px;width:16.6px">Y</i><i style="left:465.2px;width:16.6px">Y</i><i style="left:481.8px;width:16.6px">Y</i><i style="left:498.4px;width:16.6px">Y</i><i style="left:515.0px;width:35.0px">Y</i><i style="left:550.0px;width:35.2px">Y</i><i style="left:585.2px;width:35.2px">Y</i><i style="left:620.4px;width:35.4px">Y</i><i style="left:655.8px;width:15.4px">Y</i><i style="left:671.2px;width:16.4px">Y</i><i style="left:687.6px;width:16.1px">N</i><i style="left:703.7px;width:16.0px">N</i><i style="left:719.7px;width:15.9px">N</i><i style="left:735.6px;width:16.4px">Y</i><i style="left:752.0px;width:16.7px">Y</i><i style="left:768.7px;width:16.8px">Y</i><i style="left:785.5px;width:16.4px">Y</i><i style="left:801.9px;width:16.8px">N</i><i style="left:818.7px;width:16.3px">N</i><i style="left:835.0px;width:18.7px">Y</i><i style="left:853.7px;width:18.8px">Y</i><i style="left:872.5px;width:18.7px">Y</i><i style="left:891.2px;width:18.6px">Y</i><i style="left:909.8px;width:21.0px">N</i><i style="left:930.8px;width:21.9px">N</i></div>
<span class="t" style="left:4.8px;top:150.31px;font-size:9.3px;line-height:11.5px;color:#222;-webkit-text-stroke:.25px #222;transform:scaleX(.87) rotate(.03deg)">15</span>
<span class="t" style="left:20px;top:151.11px;font-size:8px;line-height:11px;color:#000;-webkit-text-stroke:.25px #000;transform:scaleX(0.929) rotate(.03deg)">TARGET-20-PANYSN</span>
<div class="row" style="top:150.81px"><i style="left:125.1px;width:35.6px">Y</i><i style="left:160.8px;width:17.0px">N</i><i style="left:177.7px;width:16.3px">Y</i><i style="left:194.0px;width:22.1px">Y</i><i style="left:216.1px;width:16.6px">Y</i><i style="left:232.7px;width:16.6px">Y</i><i style="left:249.3px;width:16.6px">Y</i><i style="left:265.9px;width:16.6px">Y</i><i style="left:282.5px;width:16.6px">Y</i><i style="left:299.1px;width:16.6px">Y</i><i style="left:315.7px;width:16.6px">N</i><i style="left:332.3px;width:16.6px">N</i><i style="left:348.9px;width:16.6px">N</i><i style="left:365.5px;width:16.6px">Y</i><i style="left:382.2px;width:16.6px">Y</i><i style="left:398.8px;width:16.6px">Y</i><i style="left:415.4px;width:16.6px">Y</i><i style="left:432.0px;width:16.6px">Y</i><i style="left:448.6px;width:16.6px">Y</i><i style="left:465.2px;width:16.6px">N</i><i style="left:481.8px;width:16.6px">N</i><i style="left:498.4px;width:16.6px">N</i><i style="left:515.0px;width:35.0px">Y</i><i style="left:550.0px;width:35.2px">Y</i><i style="left:585.2px;width:35.2px">Y</i><i style="left:620.4px;width:35.4px">Y</i><i style="left:655.8px;width:15.4px">Y</i><i style="left:671.2px;width:16.4px">Y</i><i style="left:687.6px;width:16.1px">N</i><i style="left:703.7px;width:16.0px">N</i><i style="left:719.7px;width:15.9px">N</i><i style="left:735.6px;width:16.4px">Y</i><i style="left:752.0px;width:16.7px">Y</i><i style="left:768.7px;width:16.8px">Y</i><i style="left:785.5px;width:16.4px">Y</i><i style="left:801.9px;width:16.8px">N</i><i style="left:818.7px;width:16.3px">N</i><i style="left:835.0px;width:18.7px">Y</i><i style="left:853.7px;width:18.8px">Y</i><i style="left:872.5px;width:18.7px">Y</i><i style="left:891.2px;width:18.6px">Y</i><i style="left:909.8px;width:21.0px">N</i><i style="left:930.8px;width:21.9px">N</i></div>
<span class="t" style="left:4.8px;top:162.74px;font-size:9.3px;line-height:11.5px;color:#222;-webkit-text-stroke:.25px #222;transform:scaleX(.87) rotate(.03deg)">16</span>
<span class="t" style="left:20px;top:163.54px;font-size:8px;line-height:11px;color:#000;-webkit-text-stroke:.25px #000;transform:scaleX(0.929) rotate(.03deg)">TARGET-20-PARIZR</span>
<div class="row" style="top:163.24px"><i style="left:125.1px;width:35.6px">Y</i><i style="left:160.8px;width:17.0px">N</i><i style="left:177.7px;width:16.3px">Y</i><i style="left:194.0px;width:22.1px">Y</i><i style="left:216.1px;width:16.6px">Y</i><i style="left:232.7px;width:16.6px">Y</i><i style="left:249.3px;width:16.6px">Y</i><i style="left:265.9px;width:16.6px">Y</i><i style="left:282.5px;width:16.6px">Y</i><i style="left:299.1px;width:16.6px">Y</i><i style="left:315.7px;width:16.6px">N</i><i style="left:332.3px;width:16.6px">N</i><i style="left:348.9px;width:16.6px">N</i><i style="left:365.5px;width:16.6px">Y</i><i style="left:382.2px;width:16.6px">Y</i><i style="left:398.8px;width:16.6px">Y</i><i style="left:415.4px;width:16.6px">Y</i><i style="left:432.0px;width:16.6px">Y</i><i style="left:448.6px;width:16.6px">Y</i><i style="left:465.2px;width:16.6px">N</i><i style="left:481.8px;width:16.6px">N</i><i style="left:498.4px;width:16.6px">N</i><i style="left:515.0px;width:35.0px">Y</i><i style="left:550.0px;width:35.2px">Y</i><i style="left:585.2px;width:35.2px">Y</i><i style="left:620.4px;width:35.4px">Y</i><i style="left:655.8px;width:15.4px">Y</i><i style="left:671.2px;width:16.4px">Y</i><i style="left:687.6px;width:16.1px">N</i><i style="left:703.7px;width:16.0px">N</i><i style="left:719.7px;width:15.9px">N</i><i style="left:735.6px;width:16.4px">Y</i><i style="left:752.0px;width:16.7px">Y</i><i style="left:768.7px;width:16.8px">Y</i><i style="left:785.5px;width:16.4px">Y</i><i style="left:801.9px;width:16.8px">N</i><i style="left:818.7px;width:16.3px">N</i><i style="left:835.0px;width:18.7px">Y</i><i style="left:853.7px;width:18.8px">Y</i><i style="left:872.5px;width:18.7px">Y</i><i style="left:891.2px;width:18.6px">Y</i><i style="left:909.8px;width:21.0px">N</i><i style="left:930.8px;width:21.9px">N</i></div>
<span class="t" style="left:4.8px;top:175.18px;font-size:9.3px;line-height:11.5px;color:#222;-webkit-text-stroke:.25px #222;transform:scaleX(.87) rotate(.03deg)">17</span>
<span class="t" style="left:20px;top:175.98px;font-size:8px;line-height:11px;color:#000;-webkit-text-stroke:.25px #000;transform:scaleX(0.929) rotate(.03deg)">TARGET-20-PARKCX</span>
<div class="row" style="top:175.68px"><i style="left:125.1px;width:35.6px">Y</i><i style="left:160.8px;width:17.0px">N</i><i style="left:177.7px;width:16.3px">Y</i><i style="left:194.0px;width:22.1px">Y</i><i style="left:216.1px;width:16.6px">Y</i><i style="left:232.7px;width:16.6px">Y</i><i style="left:249.3px;width:16.6px">Y</i><i style="left:265.9px;width:16.6px">Y</i><i style="left:282.5px;width:16.6px">Y</i><i style="left:299.1px;width:16.6px">Y</i><i style="left:315.7px;width:16.6px">N</i><i style="left:332.3px;width:16.6px">N</i><i style="left:348.9px;width:16.6px">N</i><i style="left:365.5px;width:16.6px">Y</i><i style="left:382.2px;width:16.6px">Y</i><i style="left:398.8px;width:16.6px">Y</i><i style="left:415.4px;width:16.6px">Y</i><i style="left:432.0px;width:16.6px">Y</i><i style="left:448.6px;width:16.6px">Y</i><i style="left:465.2px;width:16.6px">N</i><i style="left:481.8px;width:16.6px">N</i><i style="left:498.4px;width:16.6px">N</i><i style="left:515.0px;width:35.0px">Y</i><i style="left:550.0px;width:35.2px">Y</i><i style="left:585.2px;width:35.2px">Y</i><i style="left:620.4px;width:35.4px">Y</i><i style="left:655.8px;width:15.4px">Y</i><i style="left:671.2px;width:16.4px">Y</i><i style="left:687.6px;width:16.1px">N</i><i style="left:703.7px;width:16.0px">N</i><i style="left:719.7px;width:15.9px">N</i><i style="left:735.6px;width:16.4px">Y</i><i style="left:752.0px;width:16.7px">Y</i><i style="left:768.7px;width:16.8px">Y</i><i style="left:785.5px;width:16.4px">Y</i><i style="left:801.9px;width:16.8px">N</i><i style="left:818.7px;width:16.3px">N</i><i style="left:835.0px;width:18.7px">Y</i><i style="left:853.7px;width:18.8px">Y</i><i style="left:872.5px;width:18.7px">Y</i><i style="left:891.2px;width:18.6px">Y</i><i style="left:909.8px;width:21.0px">N</i><i style="left:930.8px;width:21.9px">N</i></div>
<span class="t" style="left:4.8px;top:187.61px;font-size:9.3px;line-height:11.5px;color:#222;-webkit-text-stroke:.25px #222;transform:scaleX(.87) rotate(.03deg)">18</span>
<span class="t" style="left:20px;top:188.41px;font-size:8px;line-height:11px;color:#000;-webkit-text-stroke:.25px #000;transform:scaleX(0.929) rotate(.03deg)">TARGET-20-PARVAI</span>
<div class="row" style="top:188.11px"><i style="left:125.1px;width:35.6px">Y</i><i style="left:160.8px;width:17.0px">Y</i><i style="left:177.7px;width:16.3px">Y</i><i style="left:194.0px;width:22.1px">Y</i><i style="left:216.1px;width:16.6px">Y</i><i style="left:232.7px;width:16.6px">Y</i><i style="left:249.3px;width:16.6px">Y</i><i style="left:265.9px;width:16.6px">Y</i><i style="left:282.5px;width:16.6px">Y</i><i style="left:299.1px;width:16.6px">Y</i><i style="left:315.7px;width:16.6px">Y</i><i style="left:332.3px;width:16.6px">Y</i><i style="left:348.9px;width:16.6px">Y</i><i style="left:365.5px;width:16.6px">Y</i><i style="left:382.2px;width:16.6px">Y</i><i style="left:398.8px;width:16.6px">Y</i><i style="left:415.4px;width:16.6px">Y</i><i style="left:432.0px;width:16.6px">Y</i><i style="left:448.6px;width:16.6px">Y</i><i style="left:465.2px;width:16.6px">Y</i><i style="left:481.8px;width:16.6px">Y</i><i style="left:498.4px;width:16.6px">Y</i><i style="left:515.0px;width:35.0px">Y</i><i style="left:550.0px;width:35.2px">Y</i><i style="left:585.2px;width:35.2px">Y</i><i style="left:620.4px;width:35.4px">Y</i><i style="left:655.8px;width:15.4px">Y</i><i style="left:671.2px;width:16.4px">Y</i><i style="left:687.6px;width:16.1px">N</i><i style="left:703.7px;width:16.0px">N</i><i style="left:719.7px;width:15.9px">N</i><i style="left:735.6px;width:16.4px">Y</i><i style="left:752.0px;width:16.7px">Y</i><i style="left:768.7px;width:16.8px">Y</i><i style="left:785.5px;width:16.4px">Y</i><i style="left:801.9px;width:16.8px">N</i><i style="left:818.7px;width:16.3px">N</i><i style="left:835.0px;width:18.7px">Y</i><i style="left:853.7px;width:18.8px">Y</i><i style="left:872.5px;width:18.7px">Y</i><i style="left:891.2px;width:18.6px">Y</i><i style="left:909.8px;width:21.0px">Y</i><i style="left:930.8px;width:21.9px">Y</i></div>
<span class="t" style="left:4.8px;top:200.04px;font-size:9.3px;line-height:11.5px;color:#222;-webkit-text-stroke:.25px #222;transform:scaleX(.87) rotate(.03deg)">19</span>
<span class="t" style="left:20px;top:200.84px;font-size:8px;line-height:11px;color:#000;-webkit-text-stroke:.25px #000;transform:scaleX(0.929) rotate(.03deg)">TARGET-20-PARWDZ</span>
<div class="row" style="top:200.54px"><i style="left:125.1px;width:35.6px">Y</i><i style="left:160.8px;width:17.0px">Y</i><i style="left:177.7px;width:16.3px">Y</i><i style="left:194.0px;width:22.1px">Y</i><i style="left:216.1px;width:16.6px">Y</i><i style="left:232.7px;width:16.6px">Y</i><i style="left:249.3px;width:16.6px">Y</i><i style="left:265.9px;width:16.6px">Y</i><i style="left:282.5px;width:16.6px">Y</i><i style="left:299.1px;width:16.6px">Y</i><i style="left:315.7px;width:16.6px">N</i><i style="left:332.3px;width:16.6px">N</i><i style="left:348.9px;width:16.6px">N</i><i style="left:365.5px;width:16.6px">Y</i><i style="left:382.2px;width:16.6px">Y</i><i style="left:398.8px;width:16.6px">Y</i><i style="left:415.4px;width:16.6px">Y</i><i style="left:432.0px;width:16.6px">Y</i><i style="left:448.6px;width:16.6px">Y</i><i style="left:465.2px;width:16.6px">N</i><i style="left:481.8px;width:16.6px">N</i><i style="left:498.4px;width:16.6px">N</i><i style="left:515.0px;width:35.0px">Y</i><i style="left:550.0px;width:35.2px">Y</i><i style="left:585.2px;width:35.2px">Y</i><i style="left:620.4px;width:35.4px">Y</i><i style="left:655.8px;width:15.4px">Y</i><i style="left:671.2px;width:16.4px">Y</i><i style="left:687.6px;width:16.1px">Y</i><i style="left:703.7px;width:16.0px">Y</i><i style="left:719.7px;width:15.9px">Y</i><i style="left:735.6px;width:16.4px">Y</i><i style="left:752.0px;width:16.7px">Y</i><i style="left:768.7px;width:16.8px">Y</i><i style="left:785.5px;width:16.4px">Y</i><i style="left:801.9px;width:16.8px">N</i><i style="left:818.7px;width:16.3px">N</i><i style="left:835.0px;width:18.7px">Y</i><i style="left:853.7px;width:18.8px">Y</i><i style="left:872.5px;width:18.7px">Y</i><i style="left:891.2px;width:18.6px">Y</i><i style="left:909.8px;width:21.0px">Y</i><i style="left:930.8px;width:21.9px">Y</i></div>
<span class="t" style="left:4.8px;top:212.48px;font-size:9.3px;line-height:11.5px;color:#222;-webkit-text-stroke:.25px #222;transform:scaleX(.87) rotate(.03deg)">20</span>
<span class="t" style="left:20px;top:213.28px;font-size:8px;line-height:11px;color:#000;-webkit-text-stroke:.25px #000;transform:scaleX(0.929) rotate(.03deg)">TARGET-20-PARXNG</span>
<div class="row" style="top:212.98px"><i style="left:125.1px;width:35.6px">Y</i><i style="left:160.8px;width:17.0px">N</i><i style="left:177.7px;width:16.3px">Y</i><i style="left:194.0px;width:22.1px">Y</i><i style="left:216.1px;width:16.6px">Y</i><i style="left:232.7px;width:16.6px">Y</i><i style="left:249.3px;width:16.6px">Y</i><i style="left:265.9px;width:16.6px">Y</i><i style="left:282.5px;width:16.6px">Y</i><i style="left:299.1px;width:16.6px">Y</i><i style="left:315.7px;width:16.6px">N</i><i style="left:332.3px;width:16.6px">N</i><i style="left:348.9px;width:16.6px">N</i><i style="left:365.5px;width:16.6px">Y</i><i style="left:382.2px;width:16.6px">Y</i><i style="left:398.8px;width:16.6px">Y</i><i style="left:415.4px;width:16.6px">Y</i><i style="left:432.0px;width:16.6px">Y</i><i style="left:448.6px;width:16.6px">Y</i><i style="left:465.2px;width:16.6px">N</i><i style="left:481.8px;width:16.6px">N</i><i style="left:498.4px;width:16.6px">N</i><i style="left:515.0px;width:35.0px">Y</i><i style="left:550.0px;width:35.2px">Y</i><i style="left:585.2px;width:35.2px">Y</i><i style="left:620.4px;width:35.4px">Y</i><i style="left:655.8px;width:15.4px">Y</i><i style="left:671.2px;width:16.4px">Y</i><i style="left:687.6px;width:16.1px">N</i><i style="left:703.7px;width:16.0px">N</i><i style="left:719.7px;width:15.9px">N</i><i style="left:735.6px;width:16.4px">Y</i><i style="left:752.0px;width:16.7px">Y</i><i style="left:768.7px;width:16.8px">Y</i><i style="left:785.5px;width:16.4px">Y</i><i style="left:801.9px;width:16.8px">N</i><i style="left:818.7px;width:16.3px">N</i><i style="left:835.0px;width:18.7px">Y</i><i style="left:853.7px;width:18.8px">Y</i><i style="left:872.5px;width:18.7px">Y</i><i style="left:891.2px;width:18.6px">Y</i><i style="left:909.8px;width:21.0px">N</i><i style="left:930.8px;width:21.9px">N</i></div>
<span class="t" style="left:4.8px;top:224.91px;font-size:9.3px;line-height:11.5px;color:#222;-webkit-text-stroke:.25px #222;transform:scaleX(.87) rotate(.03deg)">21</span>
<span class="t" style="left:20px;top:225.71px;font-size:8px;line-height:11px;color:#000;-webkit-text-stroke:.25px #000;transform:scaleX(0.929) rotate(.03deg)">TARGET-20-PARYGA</span>
<div class="row" style="top:225.41px"><i style="left:125.1px;width:35.6px">Y</i><i style="left:160.8px;width:17.0px">N</i><i style="left:177.7px;width:16.3px">Y</i><i style="left:194.0px;width:22.1px">Y</i><i style="left:216.1px;width:16.6px">Y</i><i style="left:232.7px;width:16.6px">Y</i><i style="left:249.3px;width:16.6px">Y</i><i style="left:265.9px;width:16.6px">Y</i><i style="left:282.5px;width:16.6px">Y</i><i style="left:299.1px;width:16.6px">Y</i><i style="left:315.7px;width:16.6px">N</i><i style="left:332.3px;width:16.6px">N</i><i style="left:348.9px;width:16.6px">N</i><i style="left:365.5px;width:16.6px">Y</i><i style="left:382.2px;width:16.6px">Y</i><i style="left:398.8px;width:16.6px">Y</i><i style="left:415.4px;width:16.6px">Y</i><i style="left:432.0px;width:16.6px">Y</i><i style="left:448.6px;width:16.6px">Y</i><i style="left:465.2px;width:16.6px">N</i><i style="left:481.8px;width:16.6px">N</i><i style="left:498.4px;width:16.6px">N</i><i style="left:515.0px;width:35.0px">Y</i><i style="left:550.0px;width:35.2px">Y</i><i style="left:585.2px;width:35.2px">Y</i><i style="left:620.4px;width:35.4px">Y</i><i style="left:655.8px;width:15.4px">Y</i><i style="left:671.2px;width:16.4px">Y</i><i style="left:687.6px;width:16.1px">N</i><i style="left:703.7px;width:16.0px">N</i><i style="left:719.7px;width:15.9px">N</i><i style="left:735.6px;width:16.4px">Y</i><i style="left:752.0px;width:16.7px">Y</i><i style="left:768.7px;width:16.8px">Y</i><i style="left:785.5px;width:16.4px">Y</i><i style="left:801.9px;width:16.8px">N</i><i style="left:818.7px;width:16.3px">N</i><i style="left:835.0px;width:18.7px">Y</i><i style="left:853.7px;width:18.8px">Y</i><i style="left:872.5px;width:18.7px">Y</i><i style="left:891.2px;width:18.6px">Y</i><i style="left:909.8px;width:21.0px">N</i><i style="left:930.8px;width:21.9px">N</i></div>
<span class="t" style="left:4.8px;top:237.35px;font-size:9.3px;line-height:11.5px;color:#222;-webkit-text-stroke:.25px #222;transform:scaleX(.87) rotate(.03deg)">22</span>
<span class="t" style="left:20px;top:238.15px;font-size:8px;line-height:11px;color:#000;-webkit-text-stroke:.25px #000;transform:scaleX(0.929) rotate(.03deg)">TARGET-20-PARZUU</span>
<div class="row" style="top:237.85px"><i style="left:125.1px;width:35.6px">Y</i><i style="left:160.8px;width:17.0px">Y</i><i style="left:177.7px;width:16.3px">Y</i><i style="left:194.0px;width:22.1px">Y</i><i style="left:216.1px;width:16.6px">Y</i><i style="left:232.7px;width:16.6px">Y</i><i style="left:249.3px;width:16.6px">Y</i><i style="left:265.9px;width:16.6px">Y</i><i style="left:282.5px;width:16.6px">Y</i><i style="left:299.1px;width:16.6px">Y</i><i style="left:315.7px;width:16.6px">Y</i><i style="left:332.3px;width:16.6px">Y</i><i style="left:348.9px;width:16.6px">Y</i><i style="left:365.5px;width:16.6px">Y</i><i style="left:382.2px;width:16.6px">Y</i><i style="left:398.8px;width:16.6px">Y</i><i style="left:415.4px;width:16.6px">Y</i><i style="left:432.0px;width:16.6px">Y</i><i style="left:448.6px;width:16.6px">Y</i><i style="left:465.2px;width:16.6px">Y</i><i style="left:481.8px;width:16.6px">Y</i><i style="left:498.4px;width:16.6px">Y</i><i style="left:515.0px;width:35.0px">Y</i><i style="left:550.0px;width:35.2px">Y</i><i style="left:585.2px;width:35.2px">Y</i><i style="left:620.4px;width:35.4px">Y</i><i style="left:655.8px;width:15.4px">Y</i><i style="left:671.2px;width:16.4px">Y</i><i style="left:687.6px;width:16.1px">N</i><i style="left:703.7px;width:16.0px">N</i><i style="left:719.7px;width:15.9px">N</i><i style="left:735.6px;width:16.4px">Y</i><i style="left:752.0px;width:16.7px">Y</i><i style="left:768.7px;width:16.8px">Y</i><i style="left:785.5px;width:16.4px">Y</i><i style="left:801.9px;width:16.8px">N</i><i style="left:818.7px;width:16.3px">N</i><i style="left:835.0px;width:18.7px">Y</i><i style="left:853.7px;width:18.8px">Y</i><i style="left:872.5px;width:18.7px">Y</i><i style="left:891.2px;width:18.6px">Y</i><i style="left:909.8px;width:21.0px">Y</i><i style="left:930.8px;width:21.9px">Y</i></div>
<span class="t" style="left:4.8px;top:249.78px;font-size:9.3px;line-height:11.5px;color:#222;-webkit-text-stroke:.25px #222;transform:scaleX(.87) rotate(.03deg)">23</span>
<span class="t" style="left:20px;top:250.58px;font-size:8px;line-height:11px;color:#000;-webkit-text-stroke:.25px #000;transform:scaleX(0.929) rotate(.03deg)">TARGET-20-PASGWH</span>
<div class="row" style="top:250.28px"><i style="left:125.1px;width:35.6px">Y</i><i style="left:160.8px;width:17.0px">Y</i><i style="left:177.7px;width:16.3px">Y</i><i style="left:194.0px;width:22.1px">Y</i><i style="left:216.1px;width:16.6px">Y</i><i style="left:232.7px;width:16.6px">Y</i><i style="left:249.3px;width:16.6px">Y</i><i style="left:265.9px;width:16.6px">Y</i><i style="left:282.5px;width:16.6px">Y</i><i style="left:299.1px;width:16.6px">Y</i><i style="left:315.7px;width:16.6px">Y</i><i style="left:332.3px;width:16.6px">Y</i><i style="left:348.9px;width:16.6px">Y</i><i style="left:365.5px;width:16.6px">Y</i><i style="left:382.2px;width:16.6px">Y</i><i style="left:398.8px;width:16.6px">Y</i><i style="left:415.4px;width:16.6px">Y</i><i style="left:432.0px;width:16.6px">Y</i><i style="left:448.6px;width:16.6px">Y</i><i style="left:465.2px;width:16.6px">Y</i><i style="left:481.8px;width:16.6px">Y</i><i style="left:498.4px;width:16.6px">Y</i><i style="left:515.0px;width:35.0px">Y</i><i style="left:550.0px;width:35.2px">Y</i><i style="left:585.2px;width:35.2px">Y</i><i style="left:620.4px;width:35.4px">Y</i><i style="left:655.8px;width:15.4px">Y</i><i style="left:671.2px;width:16.4px">Y</i><i style="left:687.6px;width:16.1px">Y</i><i style="left:703.7px;width:16.0px">Y</i><i style="left:719.7px;width:15.9px">Y</i><i style="left:735.6px;width:16.4px">Y</i><i style="left:752.0px;width:16.7px">Y</i><i style="left:768.7px;width:16.8px">Y</i><i style="left:785.5px;width:16.4px">Y</i><i style="left:801.9px;width:16.8px">N</i><i style="left:818.7px;width:16.3px">N</i><i style="left:835.0px;width:18.7px">Y</i><i style="left:853.7px;width:18.8px">Y</i><i style="left:872.5px;width:18.7px">Y</i><i style="left:891.2px;width:18.6px">Y</i><i style="left:909.8px;width:21.0px">Y</i><i style="left:930.8px;width:21.9px">Y</i></div>
<span class="t" style="left:4.8px;top:262.21px;font-size:9.3px;line-height:11.5px;color:#222;-webkit-text-stroke:.25px #222;transform:scaleX(.87) rotate(.03deg)">24</span>
<span class="t" style="left:20px;top:263.01px;font-size:8px;line-height:11px;color:#000;-webkit-text-stroke:.25px #000;transform:scaleX(0.929) rotate(.03deg)">TARGET-20-PASXYG</span>
<div class="row" style="top:262.71px"><i style="left:125.1px;width:35.6px">Y</i><i style="left:160.8px;width:17.0px">Y</i><i style="left:177.7px;width:16.3px">Y</i><i style="left:194.0px;width:22.1px">Y</i><i style="left:216.1px;width:16.6px">Y</i><i style="left:232.7px;width:16.6px">Y</i><i style="left:249.3px;width:16.6px">Y</i><i style="left:265.9px;width:16.6px">Y</i><i style="left:282.5px;width:16.6px">Y</i><i style="left:299.1px;width:16.6px">Y</i><i style="left:315.7px;width:16.6px">Y</i><i style="left:332.3px;width:16.6px">Y</i><i style="left:348.9px;width:16.6px">Y</i><i style="left:365.5px;width:16.6px">Y</i><i style="left:382.2px;width:16.6px">Y</i><i style="left:398.8px;width:16.6px">Y</i><i style="left:415.4px;width:16.6px">Y</i><i style="left:432.0px;width:16.6px">Y</i><i style="left:448.6px;width:16.6px">Y</i><i style="left:465.2px;width:16.6px">Y</i><i style="left:481.8px;width:16.6px">Y</i><i style="left:498.4px;width:16.6px">Y</i><i style="left:515.0px;width:35.0px">Y</i><i style="left:550.0px;width:35.2px">Y</i><i style="left:585.2px;width:35.2px">Y</i><i style="left:620.4px;width:35.4px">Y</i><i style="left:655.8px;width:15.4px">Y</i><i style="left:671.2px;width:16.4px">Y</i><i style="left:687.6px;width:16.1px">N</i><i style="left:703.7px;width:16.0px">N</i><i style="left:719.7px;width:15.9px">N</i><i style="left:735.6px;width:16.4px">Y</i><i style="left:752.0px;width:16.7px">Y</i><i style="left:768.7px;width:16.8px">Y</i><i style="left:785.5px;width:16.4px">Y</i><i style="left:801.9px;width:16.8px">N</i><i style="left:818.7px;width:16.3px">N</i><i style="left:835.0px;width:18.7px">Y</i><i style="left:853.7px;width:18.8px">Y</i><i style="left:872.5px;width:18.7px">Y</i><i style="left:891.2px;width:18.6px">Y</i><i style="left:909.8px;width:21.0px">N</i><i style="left:930.8px;width:21.9px">N</i></div>
<span class="t" style="left:4.8px;top:274.65px;font-size:9.3px;line-height:11.5px;color:#222;-webkit-text-stroke:.25px #222;transform:scaleX(.87) rotate(.03deg)">25</span>
<span class="t" style="left:20px;top:275.45px;font-size:8px;line-height:11px;color:#000;-webkit-text-stroke:.25px #000;transform:scaleX(0.929) rotate(.03deg)">TARGET-20-PANKFG</span>
<div class="row" style="top:275.15px"><i style="left:125.1px;width:35.6px">Y</i><i style="left:160.8px;width:17.0px">N</i><i style="left:177.7px;width:16.3px">Y</i><i style="left:194.0px;width:22.1px">Y</i><i style="left:216.1px;width:16.6px">Y</i><i style="left:232.7px;width:16.6px">Y</i><i style="left:249.3px;width:16.6px">Y</i><i style="left:265.9px;width:16.6px">Y</i><i style="left:282.5px;width:16.6px">Y</i><i style="left:299.1px;width:16.6px">Y</i><i style="left:315.7px;width:16.6px">N</i><i style="left:332.3px;width:16.6px">N</i><i style="left:348.9px;width:16.6px">N</i><i style="left:365.5px;width:16.6px">Y</i><i style="left:382.2px;width:16.6px">Y</i><i style="left:398.8px;width:16.6px">Y</i><i style="left:415.4px;width:16.6px">Y</i><i style="left:432.0px;width:16.6px">Y</i><i style="left:448.6px;width:16.6px">Y</i><i style="left:465.2px;width:16.6px">N</i><i style="left:481.8px;width:16.6px">N</i><i style="left:498.4px;width:16.6px">N</i><i style="left:515.0px;width:35.0px">Y</i><i style="left:550.0px;width:35.2px">Y</i><i style="left:585.2px;width:35.2px">Y</i><i style="left:620.4px;width:35.4px">Y</i><i style="left:655.8px;width:15.4px">Y</i><i style="left:671.2px;width:16.4px">Y</i><i style="left:687.6px;width:16.1px">N</i><i style="left:703.7px;width:16.0px">N</i><i style="left:719.7px;width:15.9px">N</i><i style="left:735.6px;width:16.4px">Y</i><i style="left:752.0px;width:16.7px">Y</i><i style="left:768.7px;width:16.8px">Y</i><i style="left:785.5px;width:16.4px">Y</i><i style="left:801.9px;width:16.8px">N</i><i style="left:818.7px;width:16.3px">N</i><i style="left:835.0px;width:18.7px">Y</i><i style="left:853.7px;width:18.8px">Y</i><i style="left:872.5px;width:18.7px">Y</i><i style="left:891.2px;width:18.6px">Y</i><i style="left:909.8px;width:21.0px">N</i><i style="left:930.8px;width:21.9px">N</i></div>
<span class="t" style="left:4.8px;top:287.08px;font-size:9.3px;line-height:11.5px;color:#222;-webkit-text-stroke:.25px #222;transform:scaleX(.87) rotate(.03deg)">26</span>
<span class="t" style="left:20px;top:287.88px;font-size:8px;line-height:11px;color:#000;-webkit-text-stroke:.25px #000;transform:scaleX(0.929) rotate(.03deg)">TARGET-20-PANCSC</span>
<div class="row" style="top:287.58px"><i style="left:125.1px;width:35.6px">Y</i><i style="left:160.8px;width:17.0px">Y</i><i style="left:177.7px;width:16.3px">Y</i><i style="left:194.0px;width:22.1px">Y</i><i style="left:216.1px;width:16.6px">Y</i><i style="left:232.7px;width:16.6px">Y</i><i style="left:249.3px;width:16.6px">Y</i><i style="left:265.9px;width:16.6px">Y</i><i style="left:282.5px;width:16.6px">Y</i><i style="left:299.1px;width:16.6px">Y</i><i style="left:315.7px;width:16.6px">Y</i><i style="left:332.3px;width:16.6px">Y</i><i style="left:348.9px;width:16.6px">Y</i><i style="left:365.5px;width:16.6px">Y</i><i style="left:382.2px;width:16.6px">Y</i><i style="left:398.8px;width:16.6px">Y</i><i style="left:415.4px;width:16.6px">Y</i><i style="left:432.0px;width:16.6px">Y</i><i style="left:448.6px;width:16.6px">Y</i><i style="left:465.2px;width:16.6px">Y</i><i style="left:481.8px;width:16.6px">Y</i><i style="left:498.4px;width:16.6px">Y</i><i style="left:515.0px;width:35.0px">Y</i><i style="left:550.0px;width:35.2px">Y</i><i style="left:585.2px;width:35.2px">Y</i><i style="left:620.4px;width:35.4px">Y</i><i style="left:655.8px;width:15.4px">Y</i><i style="left:671.2px;width:16.4px">Y</i><i style="left:687.6px;width:16.1px">Y</i><i style="left:703.7px;width:16.0px">Y</i><i style="left:719.7px;width:15.9px">Y</i><i style="left:735.6px;width:16.4px">Y</i><i style="left:752.0px;width:16.7px">Y</i><i style="left:768.7px;width:16.8px">Y</i><i style="left:785.5px;width:16.4px">Y</i><i style="left:801.9px;width:16.8px">N</i><i style="left:818.7px;width:16.3px">N</i><i style="left:835.0px;width:18.7px">Y</i><i style="left:853.7px;width:18.8px">Y</i><i style="left:872.5px;width:18.7px">Y</i><i style="left:891.2px;width:18.6px">Y</i><i style="left:909.8px;width:21.0px">Y</i><i style="left:930.8px;width:21.9px">Y</i></div>
<span class="t" style="left:4.8px;top:299.52px;font-size:9.3px;line-height:11.5px;color:#222;-webkit-text-stroke:.25px #222;transform:scaleX(.87) rotate(.03deg)">27</span>
<span class="t" style="left:20px;top:300.32px;font-size:8px;line-height:11px;color:#000;-webkit-text-stroke:.25px #000;transform:scaleX(0.929) rotate(.03deg)">TARGET-20-PANHYK</span>
<div class="row" style="top:300.02px"><i style="left:125.1px;width:35.6px">Y</i><i style="left:160.8px;width:17.0px">N</i><i style="left:177.7px;width:16.3px">Y</i><i style="left:194.0px;width:22.1px">Y</i><i style="left:216.1px;width:16.6px">Y</i><i style="left:232.7px;width:16.6px">Y</i><i style="left:249.3px;width:16.6px">Y</i><i style="left:265.9px;width:16.6px">Y</i><i style="left:282.5px;width:16.6px">Y</i><i style="left:299.1px;width:16.6px">Y</i><i style="left:315.7px;width:16.6px">N</i><i style="left:332.3px;width:16.6px">N</i><i style="left:348.9px;width:16.6px">N</i><i style="left:365.5px;width:16.6px">Y</i><i style="left:382.2px;width:16.6px">Y</i><i style="left:398.8px;width:16.6px">Y</i><i style="left:415.4px;width:16.6px">Y</i><i style="left:432.0px;width:16.6px">Y</i><i style="left:448.6px;width:16.6px">Y</i><i style="left:465.2px;width:16.6px">N</i><i style="left:481.8px;width:16.6px">N</i><i style="left:498.4px;width:16.6px">N</i><i style="left:515.0px;width:35.0px">Y</i><i style="left:550.0px;width:35.2px">Y</i><i style="left:585.2px;width:35.2px">Y</i><i style="left:620.4px;width:35.4px">Y</i><i style="left:655.8px;width:15.4px">Y</i><i style="left:671.2px;width:16.4px">Y</i><i style="left:687.6px;width:16.1px">N</i><i style="left:703.7px;width:16.0px">N</i><i style="left:719.7px;width:15.9px">N</i><i style="left:735.6px;width:16.4px">Y</i><i style="left:752.0px;width:16.7px">Y</i><i style="left:768.7px;width:16.8px">Y</i><i style="left:785.5px;width:16.4px">Y</i><i style="left:801.9px;width:16.8px">N</i><i style="left:818.7px;width:16.3px">N</i><i style="left:835.0px;width:18.7px">Y</i><i style="left:853.7px;width:18.8px">Y</i><i style="left:872.5px;width:18.7px">Y</i><i style="left:891.2px;width:18.6px">Y</i><i style="left:909.8px;width:21.0px">N</i><i style="left:930.8px;width:21.9px">N</i></div>
<span class="t" style="left:4.8px;top:311.95px;font-size:9.3px;line-height:11.5px;color:#222;-webkit-text-stroke:.25px #222;transform:scaleX(.87) rotate(.03deg)">28</span>
<span class="t" style="left:20px;top:312.75px;font-size:8px;line-height:11px;color:#000;-webkit-text-stroke:.25px #000;transform:scaleX(0.929) rotate(.03deg)">TARGET-20-PANPKN</span>
<div class="row" style="top:312.45px"><i style="left:125.1px;width:35.6px">Y</i><i style="left:160.8px;width:17.0px">N</i><i style="left:177.7px;width:16.3px">Y</i><i style="left:194.0px;width:22.1px">Y</i><i style="left:216.1px;width:16.6px">Y</i><i style="left:232.7px;width:16.6px">Y</i><i style="left:249.3px;width:16.6px">Y</i><i style="left:265.9px;width:16.6px">Y</i><i style="left:282.5px;width:16.6px">Y</i><i style="left:299.1px;width:16.6px">Y</i><i style="left:315.7px;width:16.6px">N</i><i style="left:332.3px;width:16.6px">N</i><i style="left:348.9px;width:16.6px">N</i><i style="left:365.5px;width:16.6px">Y</i><i style="left:382.2px;width:16.6px">Y</i><i style="left:398.8px;width:16.6px">Y</i><i style="left:415.4px;width:16.6px">Y</i><i style="left:432.0px;width:16.6px">Y</i><i style="left:448.6px;width:16.6px">Y</i><i style="left:465.2px;width:16.6px">N</i><i style="left:481.8px;width:16.6px">N</i><i style="left:498.4px;width:16.6px">N</i><i style="left:515.0px;width:35.0px">Y</i><i style="left:550.0px;width:35.2px">Y</i><i style="left:585.2px;width:35.2px">Y</i><i style="left:620.4px;width:35.4px">Y</i><i style="left:655.8px;width:15.4px">Y</i><i style="left:671.2px;width:16.4px">Y</i><i style="left:687.6px;width:16.1px">N</i><i style="left:703.7px;width:16.0px">N</i><i style="left:719.7px;width:15.9px">N</i><i style="left:735.6px;width:16.4px">Y</i><i style="left:752.0px;width:16.7px">Y</i><i style="left:768.7px;width:16.8px">Y</i><i style="left:785.5px;width:16.4px">Y</i><i style="left:801.9px;width:16.8px">N</i><i style="left:818.7px;width:16.3px">N</i><i style="left:835.0px;width:18.7px">Y</i><i style="left:853.7px;width:18.8px">Y</i><i style="left:872.5px;width:18.7px">Y</i><i style="left:891.2px;width:18.6px">Y</i><i style="left:909.8px;width:21.0px">N</i><i style="left:930.8px;width:21.9px">N</i></div>
<span class="t" style="left:4.8px;top:324.38px;font-size:9.3px;line-height:11.5px;color:#222;-webkit-text-stroke:.25px #222;transform:scaleX(.87) rotate(.03deg)">29</span>
<span class="t" style="left:20px;top:325.18px;font-size:8px;line-height:11px;color:#000;-webkit-text-stroke:.25px #000;transform:scaleX(0.929) rotate(.03deg)">TARGET-20-PANPLS</span>
<div class="row" style="top:324.88px"><i style="left:125.1px;width:35.6px">Y</i><i style="left:160.8px;width:17.0px">N</i><i style="left:177.7px;width:16.3px">Y</i><i style="left:194.0px;width:22.1px">Y</i><i style="left:216.1px;width:16.6px">Y</i><i style="left:232.7px;width:16.6px">Y</i><i style="left:249.3px;width:16.6px">Y</i><i style="left:265.9px;width:16.6px">Y</i><i style="left:282.5px;width:16.6px">Y</i><i style="left:299.1px;width:16.6px">Y</i><i style="left:315.7px;width:16.6px">N</i><i style="left:332.3px;width:16.6px">N</i><i style="left:348.9px;width:16.6px">N</i><i style="left:365.5px;width:16.6px">Y</i><i style="left:382.2px;width:16.6px">Y</i><i style="left:398.8px;width:16.6px">Y</i><i style="left:415.4px;width:16.6px">Y</i><i style="left:432.0px;width:16.6px">Y</i><i style="left:448.6px;width:16.6px">Y</i><i style="left:465.2px;width:16.6px">N</i><i style="left:481.8px;width:16.6px">N</i><i style="left:498.4px;width:16.6px">N</i><i style="left:515.0px;width:35.0px">Y</i><i style="left:550.0px;width:35.2px">Y</i><i style="left:585.2px;width:35.2px">Y</i><i style="left:620.4px;width:35.4px">Y</i><i style="left:655.8px;width:15.4px">Y</i><i style="left:671.2px;width:16.4px">Y</i><i style="left:687.6px;width:16.1px">N</i><i style="left:703.7px;width:16.0px">N</i><i style="left:719.7px;width:15.9px">N</i><i style="left:735.6px;width:16.4px">Y</i><i style="left:752.0px;width:16.7px">Y</i><i style="left:768.7px;width:16.8px">Y</i><i style="left:785.5px;width:16.4px">Y</i><i style="left:801.9px;width:16.8px">N</i><i style="left:818.7px;width:16.3px">N</i><i style="left:835.0px;width:18.7px">Y</i><i style="left:853.7px;width:18.8px">Y</i><i style="left:872.5px;width:18.7px">Y</i><i style="left:891.2px;width:18.6px">Y</i><i style="left:909.8px;width:21.0px">N</i><i style="left:930.8px;width:21.9px">N</i></div>
<span class="t" style="left:4.8px;top:336.82px;font-size:9.3px;line-height:11.5px;color:#222;-webkit-text-stroke:.25px #222;transform:scaleX(.87) rotate(.03deg)">30</span>
<span class="t" style="left:20px;top:337.62px;font-size:8px;line-height:11px;color:#000;-webkit-text-stroke:.25px #000;transform:scaleX(0.929) rotate(.03deg)">TARGET-20-PARCZL</span>
<div class="row" style="top:337.32px"><i style="left:125.1px;width:35.6px">Y</i><i style="left:160.8px;width:17.0px">Y</i><i style="left:177.7px;width:16.3px">Y</i><i style="left:194.0px;width:22.1px">Y</i><i style="left:216.1px;width:16.6px">Y</i><i style="left:232.7px;width:16.6px">Y</i><i style="left:249.3px;width:16.6px">Y</i><i style="left:265.9px;width:16.6px">Y</i><i style="left:282.5px;width:16.6px">Y</i><i style="left:299.1px;width:16.6px">Y</i><i style="left:315.7px;width:16.6px">Y</i><i style="left:332.3px;width:16.6px">Y</i><i style="left:348.9px;width:16.6px">Y</i><i style="left:365.5px;width:16.6px">Y</i><i style="left:382.2px;width:16.6px">Y</i><i style="left:398.8px;width:16.6px">Y</i><i style="left:415.4px;width:16.6px">Y</i><i style="left:432.0px;width:16.6px">Y</i><i style="left:448.6px;width:16.6px">Y</i><i style="left:465.2px;width:16.6px">Y</i><i style="left:481.8px;width:16.6px">Y</i><i style="left:498.4px;width:16.6px">Y</i><i style="left:515.0px;width:35.0px">Y</i><i style="left:550.0px;width:35.2px">Y</i><i style="left:585.2px;width:35.2px">Y</i><i style="left:620.4px;width:35.4px">Y</i><i style="left:655.8px;width:15.4px">Y</i><i style="left:671.2px;width:16.4px">Y</i><i style="left:687.6px;width:16.1px">Y</i><i style="left:703.7px;width:16.0px">Y</i><i style="left:719.7px;width:15.9px">Y</i><i style="left:735.6px;width:16.4px">Y</i><i style="left:752.0px;width:16.7px">Y</i><i style="left:768.7px;width:16.8px">Y</i><i style="left:785.5px;width:16.4px">Y</i><i style="left:801.9px;width:16.8px">N</i><i style="left:818.7px;width:16.3px">N</i><i style="left:835.0px;width:18.7px">Y</i><i style="left:853.7px;width:18.8px">Y</i><i style="left:872.5px;width:18.7px">Y</i><i style="left:891.2px;width:18.6px">Y</i><i style="left:909.8px;width:21.0px">Y</i><i style="left:930.8px;width:21.9px">Y</i></div>
<span class="t" style="left:4.8px;top:349.25px;font-size:9.3px;line-height:11.5px;color:#222;-webkit-text-stroke:.25px #222;transform:scaleX(.87) rotate(.03deg)">31</span>
<span class="t" style="left:20px;top:350.05px;font-size:8px;line-height:11px;color:#000;-webkit-text-stroke:.25px #000;transform:scaleX(0.929) rotate(.03deg)">TARGET-20-PASBHI</span>
<div class="row" style="top:349.75px"><i style="left:125.1px;width:35.6px">Y</i><i style="left:160.8px;width:17.0px">N</i><i style="left:177.7px;width:16.3px">Y</i><i style="left:194.0px;width:22.1px">Y</i><i style="left:216.1px;width:16.6px">Y</i><i style="left:232.7px;width:16.6px">Y</i><i style="left:249.3px;width:16.6px">Y</i><i style="left:265.9px;width:16.6px">Y</i><i style="left:282.5px;width:16.6px">Y</i><i style="left:299.1px;width:16.6px">Y</i><i style="left:315.7px;width:16.6px">N</i><i style="left:332.3px;width:16.6px">N</i><i style="left:348.9px;width:16.6px">N</i><i style="left:365.5px;width:16.6px">Y</i><i style="left:382.2px;width:16.6px">Y</i><i style="left:398.8px;width:16.6px">Y</i><i style="left:415.4px;width:16.6px">Y</i><i style="left:432.0px;width:16.6px">Y</i><i style="left:448.6px;width:16.6px">Y</i><i style="left:465.2px;width:16.6px">N</i><i style="left:481.8px;width:16.6px">N</i><i style="left:498.4px;width:16.6px">N</i><i style="left:515.0px;width:35.0px">Y</i><i style="left:550.0px;width:35.2px">Y</i><i style="left:585.2px;width:35.2px">Y</i><i style="left:620.4px;width:35.4px">Y</i><i style="left:655.8px;width:15.4px">Y</i><i style="left:671.2px;width:16.4px">Y</i><i style="left:687.6px;width:16.1px">N</i><i style="left:703.7px;width:16.0px">N</i><i style="left:719.7px;width:15.9px">N</i><i style="left:735.6px;width:16.4px">Y</i><i style="left:752.0px;width:16.7px">Y</i><i style="left:768.7px;width:16.8px">Y</i><i style="left:785.5px;width:16.4px">Y</i><i style="left:801.9px;width:16.8px">N</i><i style="left:818.7px;width:16.3px">N</i><i style="left:835.0px;width:18.7px">Y</i><i style="left:853.7px;width:18.8px">Y</i><i style="left:872.5px;width:18.7px">Y</i><i style="left:891.2px;width:18.6px">Y</i><i style="left:909.8px;width:21.0px">N</i><i style="left:930.8px;width:21.9px">N</i></div>
<span class="t" style="left:4.8px;top:361.69px;font-size:9.3px;line-height:11.5px;color:#222;-webkit-text-stroke:.25px #222;transform:scaleX(.87) rotate(.03deg)">32</span>
<span class="t" style="left:20px;top:362.49px;font-size:8px;line-height:11px;color:#000;-webkit-text-stroke:.25px #000;transform:scaleX(0.929) rotate(.03deg)">TARGET-20-PASBPK</span>
<div class="row" style="top:362.19px"><i style="left:125.1px;width:35.6px">Y</i><i style="left:160.8px;width:17.0px">N</i><i style="left:177.7px;width:16.3px">Y</i><i style="left:194.0px;width:22.1px">Y</i><i style="left:216.1px;width:16.6px">Y</i><i style="left:232.7px;width:16.6px">Y</i><i style="left:249.3px;width:16.6px">Y</i><i style="left:265.9px;width:16.6px">Y</i><i style="left:282.5px;width:16.6px">Y</i><i style="left:299.1px;width:16.6px">Y</i><i style="left:315.7px;width:16.6px">N</i><i style="left:332.3px;width:16.6px">N</i><i style="left:348.9px;width:16.6px">N</i><i style="left:365.5px;width:16.6px">Y</i><i style="left:382.2px;width:16.6px">Y</i><i style="left:398.8px;width:16.6px">Y</i><i style="left:415.4px;width:16.6px">Y</i><i style="left:432.0px;width:16.6px">Y</i><i style="left:448.6px;width:16.6px">Y</i><i style="left:465.2px;width:16.6px">N</i><i style="left:481.8px;width:16.6px">N</i><i style="left:498.4px;width:16.6px">N</i><i style="left:515.0px;width:35.0px">Y</i><i style="left:550.0px;width:35.2px">Y</i><i style="left:585.2px;width:35.2px">Y</i><i style="left:620.4px;width:35.4px">Y</i><i style="left:655.8px;width:15.4px">Y</i><i style="left:671.2px;width:16.4px">Y</i><i style="left:687.6px;width:16.1px">N</i><i style="left:703.7px;width:16.0px">N</i><i style="left:719.7px;width:15.9px">N</i><i style="left:735.6px;width:16.4px">Y</i><i style="left:752.0px;width:16.7px">Y</i><i style="left:768.7px;width:16.8px">Y</i><i style="left:785.5px;width:16.4px">Y</i><i style="left:801.9px;width:16.8px">N</i><i style="left:818.7px;width:16.3px">N</i><i style="left:835.0px;width:18.7px">Y</i><i style="left:853.7px;width:18.8px">Y</i><i style="left:872.5px;width:18.7px">Y</i><i style="left:891.2px;width:18.6px">Y</i><i style="left:909.8px;width:21.0px">N</i><i style="left:930.8px;width:21.9px">N</i></div>
<span class="t" style="left:4.8px;top:374.12px;font-size:9.3px;line-height:11.5px;color:#222;-webkit-text-stroke:.25px #222;transform:scaleX(.87) rotate(.03deg)">33</span>
<span class="t" style="left:20px;top:374.92px;font-size:8px;line-height:11px;color:#000;-webkit-text-stroke:.25px #000;transform:scaleX(0.929) rotate(.03deg)">TARGET-20-PARUUB</span>
<div class="row" style="top:374.62px"><i style="left:125.1px;width:35.6px">Y</i><i style="left:160.8px;width:17.0px">N</i><i style="left:177.7px;width:16.3px">Y</i><i style="left:194.0px;width:22.1px">Y</i><i style="left:216.1px;width:16.6px">Y</i><i style="left:232.7px;width:16.6px">Y</i><i style="left:249.3px;width:16.6px">Y</i><i style="left:265.9px;width:16.6px">Y</i><i style="left:282.5px;width:16.6px">Y</i><i style="left:299.1px;width:16.6px">Y</i><i style="left:315.7px;width:16.6px">N</i><i style="left:332.3px;width:16.6px">N</i><i style="left:348.9px;width:16.6px">N</i><i style="left:365.5px;width:16.6px">Y</i><i style="left:382.2px;width:16.6px">Y</i><i style="left:398.8px;width:16.6px">Y</i><i style="left:415.4px;width:16.6px">Y</i><i style="left:432.0px;width:16.6px">Y</i><i style="left:448.6px;width:16.6px">Y</i><i style="left:465.2px;width:16.6px">N</i><i style="left:481.8px;width:16.6px">N</i><i style="left:498.4px;width:16.6px">N</i><i style="left:515.0px;width:35.0px">Y</i><i style="left:550.0px;width:35.2px">Y</i><i style="left:585.2px;width:35.2px">Y</i><i style="left:620.4px;width:35.4px">Y</i><i style="left:655.8px;width:15.4px">Y</i><i style="left:671.2px;width:16.4px">Y</i><i style="left:687.6px;width:16.1px">N</i><i style="left:703.7px;width:16.0px">N</i><i style="left:719.7px;width:15.9px">N</i><i style="left:735.6px;width:16.4px">Y</i><i style="left:752.0px;width:16.7px">Y</i><i style="left:768.7px;width:16.8px">Y</i><i style="left:785.5px;width:16.4px">Y</i><i style="left:801.9px;width:16.8px">N</i><i style="left:818.7px;width:16.3px">N</i><i style="left:835.0px;width:18.7px">Y</i><i style="left:853.7px;width:18.8px">Y</i><i style="left:872.5px;width:18.7px">Y</i><i style="left:891.2px;width:18.6px">Y</i><i style="left:909.8px;width:21.0px">N</i><i style="left:930.8px;width:21.9px">N</i></div>
<span class="t" style="left:4.8px;top:386.55px;font-size:9.3px;line-height:11.5px;color:#222;-webkit-text-stroke:.25px #222;transform:scaleX(.87) rotate(.03deg)">34</span>
<span class="t" style="left:20px;top:387.35px;font-size:8px;line-height:11px;color:#000;-webkit-text-stroke:.25px #000;transform:scaleX(0.929) rotate(.03deg)">TARGET-20-PAEAKL</span>
<div class="row" style="top:387.05px"><i style="left:125.1px;width:35.6px">Y</i><i style="left:160.8px;width:17.0px">N</i><i style="left:177.7px;width:16.3px">Y</i><i style="left:194.0px;width:22.1px">Y</i><i style="left:216.1px;width:16.6px">Y</i><i style="left:232.7px;width:16.6px">Y</i><i style="left:249.3px;width:16.6px">Y</i><i style="left:265.9px;width:16.6px">Y</i><i style="left:282.5px;width:16.6px">Y</i><i style="left:299.1px;width:16.6px">Y</i><i style="left:315.7px;width:16.6px">N</i><i style="left:332.3px;width:16.6px">N</i><i style="left:348.9px;width:16.6px">N</i><i style="left:365.5px;width:16.6px">Y</i><i style="left:382.2px;width:16.6px">Y</i><i style="left:398.8px;width:16.6px">Y</i><i style="left:415.4px;width:16.6px">Y</i><i style="left:432.0px;width:16.6px">Y</i><i style="left:448.6px;width:16.6px">Y</i><i style="left:465.2px;width:16.6px">N</i><i style="left:481.8px;width:16.6px">N</i><i style="left:498.4px;width:16.6px">N</i><i style="left:515.0px;width:35.0px">Y</i><i style="left:550.0px;width:35.2px">Y</i><i style="left:585.2px;width:35.2px">Y</i><i style="left:620.4px;width:35.4px">Y</i><i style="left:655.8px;width:15.4px">Y</i><i style="left:671.2px;width:16.4px">Y</i><i style="left:687.6px;width:16.1px">N</i><i style="left:703.7px;width:16.0px">N</i><i style="left:719.7px;width:15.9px">N</i><i style="left:735.6px;width:16.4px">Y</i><i style="left:752.0px;width:16.7px">Y</i><i style="left:768.7px;width:16.8px">Y</i><i style="left:785.5px;width:16.4px">Y</i><i style="left:801.9px;width:16.8px">N</i><i style="left:818.7px;width:16.3px">N</i><i style="left:835.0px;width:18.7px">Y</i><i style="left:853.7px;width:18.8px">N</i><i style="left:872.5px;width:18.7px">Y</i><i style="left:891.2px;width:18.6px">N</i><i style="left:909.8px;width:21.0px">N</i><i style="left:930.8px;width:21.9px">N</i></div>
<span class="t" style="left:4.8px;top:398.99px;font-size:9.3px;line-height:11.5px;color:#222;-webkit-text-stroke:.25px #222;transform:scaleX(.87) rotate(.03deg)">35</span>
<span class="t" style="left:20px;top:399.79px;font-size:8px;line-height:11px;color:#000;-webkit-text-stroke:.25px #000;transform:scaleX(0.929) rotate(.03deg)">TARGET-20-PAKLPD</span>
<div class="row" style="top:399.49px"><i style="left:125.1px;width:35.6px">Y</i><i style="left:160.8px;width:17.0px">N</i><i style="left:177.7px;width:16.3px">Y</i><i style="left:194.0px;width:22.1px">Y</i><i style="left:216.1px;width:16.6px">Y</i><i style="left:232.7px;width:16.6px">Y</i><i style="left:249.3px;width:16.6px">Y</i><i style="left:265.9px;width:16.6px">Y</i><i style="left:282.5px;width:16.6px">Y</i><i style="left:299.1px;width:16.6px">Y</i><i style="left:315.7px;width:16.6px">N</i><i style="left:332.3px;width:16.6px">N</i><i style="left:348.9px;width:16.6px">N</i><i style="left:365.5px;width:16.6px">Y</i><i style="left:382.2px;width:16.6px">Y</i><i style="left:398.8px;width:16.6px">Y</i><i style="left:415.4px;width:16.6px">Y</i><i style="left:432.0px;width:16.6px">Y</i><i style="left:448.6px;width:16.6px">Y</i><i style="left:465.2px;width:16.6px">N</i><i style="left:481.8px;width:16.6px">N</i><i style="left:498.4px;width:16.6px">N</i><i style="left:515.0px;width:35.0px">Y</i><i style="left:550.0px;width:35.2px">Y</i><i style="left:585.2px;width:35.2px">Y</i><i style="left:620.4px;width:35.4px">Y</i><i style="left:655.8px;width:15.4px">Y</i><i style="left:671.2px;width:16.4px">Y</i><i style="left:687.6px;width:16.1px">N</i><i style="left:703.7px;width:16.0px">N</i><i style="left:719.7px;width:15.9px">N</i><i style="left:735.6px;width:16.4px">Y</i><i style="left:752.0px;width:16.7px">Y</i><i style="left:768.7px;width:16.8px">Y</i><i style="left:785.5px;width:16.4px">Y</i><i style="left:801.9px;width:16.8px">N</i><i style="left:818.7px;width:16.3px">N</i><i style="left:835.0px;width:18.7px">Y</i><i style="left:853.7px;width:18.8px">Y</i><i style="left:872.5px;width:18.7px">Y</i><i style="left:891.2px;width:18.6px">Y</i><i style="left:909.8px;width:21.0px">N</i><i style="left:930.8px;width:21.9px">N</i></div>
<span class="t" style="left:4.8px;top:411.42px;font-size:9.3px;line-height:11.5px;color:#222;-webkit-text-stroke:.25px #222;transform:scaleX(.87) rotate(.03deg)">36</span>
<span class="t" style="left:20px;top:412.22px;font-size:8px;line-height:11px;color:#000;-webkit-text-stroke:.25px #000;transform:scaleX(0.929) rotate(.03deg)">TARGET-20-PAMVKZ</span>
<div class="row" style="top:411.92px"><i style="left:125.1px;width:35.6px">Y</i><i style="left:160.8px;width:17.0px">N</i><i style="left:177.7px;width:16.3px">Y</i><i style="left:194.0px;width:22.1px">Y</i><i style="left:216.1px;width:16.6px">Y</i><i style="left:232.7px;width:16.6px">Y</i><i style="left:249.3px;width:16.6px">Y</i><i style="left:265.9px;width:16.6px">Y</i><i style="left:282.5px;width:16.6px">Y</i><i style="left:299.1px;width:16.6px">Y</i><i style="left:315.7px;width:16.6px">N</i><i style="left:332.3px;width:16.6px">N</i><i style="left:348.9px;width:16.6px">N</i><i style="left:365.5px;width:16.6px">Y</i><i style="left:382.2px;width:16.6px">Y</i><i style="left:398.8px;width:16.6px">Y</i><i style="left:415.4px;width:16.6px">Y</i><i style="left:432.0px;width:16.6px">Y</i><i style="left:448.6px;width:16.6px">Y</i><i style="left:465.2px;width:16.6px">N</i><i style="left:481.8px;width:16.6px">N</i><i style="left:498.4px;width:16.6px">N</i><i style="left:515.0px;width:35.0px">Y</i><i style="left:550.0px;width:35.2px">Y</i><i style="left:585.2px;width:35.2px">Y</i><i style="left:620.4px;width:35.4px">Y</i><i style="left:655.8px;width:15.4px">Y</i><i style="left:671.2px;width:16.4px">Y</i><i style="left:687.6px;width:16.1px">N</i><i style="left:703.7px;width:16.0px">N</i><i style="left:719.7px;width:15.9px">N</i><i style="left:735.6px;width:16.4px">Y</i><i style="left:752.0px;width:16.7px">Y</i><i style="left:768.7px;width:16.8px">Y</i><i style="left:785.5px;width:16.4px">Y</i><i style="left:801.9px;width:16.8px">N</i><i style="left:818.7px;width:16.3px">N</i><i style="left:835.0px;width:18.7px">Y</i><i style="left:853.7px;width:18.8px">Y</i><i style="left:872.5px;width:18.7px">Y</i><i style="left:891.2px;width:18.6px">Y</i><i style="left:909.8px;width:21.0px">N</i><i style="left:930.8px;width:21.9px">N</i></div>
<span class="t" style="left:4.8px;top:423.86px;font-size:9.3px;line-height:11.5px;color:#222;-webkit-text-stroke:.25px #222;transform:scaleX(.87) rotate(.03deg)">37</span>
<span class="t" style="left:20px;top:424.66px;font-size:8px;line-height:11px;color:#000;-webkit-text-stroke:.25px #000;transform:scaleX(0.929) rotate(.03deg)">TARGET-20-PANAEV</span>
<div class="row" style="top:424.36px"><i style="left:125.1px;width:35.6px">Y</i><i style="left:160.8px;width:17.0px">N</i><i style="left:177.7px;width:16.3px">Y</i><i style="left:194.0px;width:22.1px">Y</i><i style="left:216.1px;width:16.6px">Y</i><i style="left:232.7px;width:16.6px">Y</i><i style="left:249.3px;width:16.6px">Y</i><i style="left:265.9px;width:16.6px">Y</i><i style="left:282.5px;width:16.6px">Y</i><i style="left:299.1px;width:16.6px">Y</i><i style="left:315.7px;width:16.6px">N</i><i style="left:332.3px;width:16.6px">N</i><i style="left:348.9px;width:16.6px">N</i><i style="left:365.5px;width:16.6px">Y</i><i style="left:382.2px;width:16.6px">Y</i><i style="left:398.8px;width:16.6px">Y</i><i style="left:415.4px;width:16.6px">Y</i><i style="left:432.0px;width:16.6px">Y</i><i style="left:448.6px;width:16.6px">Y</i><i style="left:465.2px;width:16.6px">N</i><i style="left:481.8px;width:16.6px">N</i><i style="left:498.4px;width:16.6px">N</i><i style="left:515.0px;width:35.0px">Y</i><i style="left:550.0px;width:35.2px">Y</i><i style="left:585.2px;width:35.2px">Y</i><i style="left:620.4px;width:35.4px">Y</i><i style="left:655.8px;width:15.4px">Y</i><i style="left:671.2px;width:16.4px">Y</i><i style="left:687.6px;width:16.1px">N</i><i style="left:703.7px;width:16.0px">N</i><i style="left:719.7px;width:15.9px">N</i><i style="left:735.6px;width:16.4px">Y</i><i style="left:752.0px;width:16.7px">Y</i><i style="left:768.7px;width:16.8px">Y</i><i style="left:785.5px;width:16.4px">Y</i><i style="left:801.9px;width:16.8px">N</i><i style="left:818.7px;width:16.3px">N</i><i style="left:835.0px;width:18.7px">Y</i><i style="left:853.7px;width:18.8px">Y</i><i style="left:872.5px;width:18.7px">Y</i><i style="left:891.2px;width:18.6px">Y</i><i style="left:909.8px;width:21.0px">N</i><i style="left:930.8px;width:21.9px">N</i></div>
<span class="t" style="left:4.8px;top:436.29px;font-size:9.3px;line-height:11.5px;color:#222;-webkit-text-stroke:.25px #222;transform:scaleX(.87) rotate(.03deg)">38</span>
<span class="t" style="left:20px;top:437.09px;font-size:8px;line-height:11px;color:#000;-webkit-text-stroke:.25px #000;transform:scaleX(0.929) rotate(.03deg)">TARGET-20-PANBZH</span>
<div class="row" style="top:436.79px"><i style="left:125.1px;width:35.6px">Y</i><i style="left:160.8px;width:17.0px">N</i><i style="left:177.7px;width:16.3px">Y</i><i style="left:194.0px;width:22.1px">Y</i><i style="left:216.1px;width:16.6px">Y</i><i style="left:232.7px;width:16.6px">Y</i><i style="left:249.3px;width:16.6px">Y</i><i style="left:265.9px;width:16.6px">Y</i><i style="left:282.5px;width:16.6px">Y</i><i style="left:299.1px;width:16.6px">Y</i><i style="left:315.7px;width:16.6px">N</i><i style="left:332.3px;width:16.6px">N</i><i style="left:348.9px;width:16.6px">N</i><i style="left:365.5px;width:16.6px">Y</i><i style="left:382.2px;width:16.6px">Y</i><i style="left:398.8px;width:16.6px">Y</i><i style="left:415.4px;width:16.6px">Y</i><i style="left:432.0px;width:16.6px">Y</i><i style="left:448.6px;width:16.6px">Y</i><i style="left:465.2px;width:16.6px">N</i><i style="left:481.8px;width:16.6px">N</i><i style="left:498.4px;width:16.6px">N</i><i style="left:515.0px;width:35.0px">Y</i><i style="left:550.0px;width:35.2px">Y</i><i style="left:585.2px;width:35.2px">Y</i><i style="left:620.4px;width:35.4px">Y</i><i style="left:655.8px;width:15.4px">Y</i><i style="left:671.2px;width:16.4px">Y</i><i style="left:687.6px;width:16.1px">N</i><i style="left:703.7px;width:16.0px">N</i><i style="left:719.7px;width:15.9px">N</i><i style="left:735.6px;width:16.4px">Y</i><i style="left:752.0px;width:16.7px">Y</i><i style="left:768.7px;width:16.8px">Y</i><i style="left:785.5px;width:16.4px">Y</i><i style="left:801.9px;width:16.8px">N</i><i style="left:818.7px;width:16.3px">N</i><i style="left:835.0px;width:18.7px">Y</i><i style="left:853.7px;width:18.8px">Y</i><i style="left:872.5px;width:18.7px">Y</i><i style="left:891.2px;width:18.6px">Y</i><i style="left:909.8px;width:21.0px">N</i><i style="left:930.8px;width:21.9px">N</i></div>
</div>
<div class="r" style="left:957.0px;top:117.5px;width:13.0px;height:551.0px;background:#e6e6e6;"></div>
<div class="r" style="left:957.6px;top:119.7px;width:9.8px;height:9.5px;background:#fff;box-shadow:inset 0 0 0 .8px #ababab"></div>
<svg class="r" style="left:959.500px;top:122.500px" width="6" height="4" viewBox="0 0 6 4"><path d="M0 3.600L3 .4l3 3.200z" fill="#666"/></svg>
<div class="r" style="left:957.6px;top:130.0px;width:9.8px;height:37.8px;background:#fff;box-shadow:inset 0 0 0 .8px #ababab"></div>
<div class="r" style="left:957.6px;top:658.5px;width:9.8px;height:9.3px;background:#fff;box-shadow:inset 0 0 0 .8px #ababab"></div>
<svg class="r" style="left:959.500px;top:661.500px" width="6" height="4" viewBox="0 0 6 4"><path d="M0 .4L3 3.600 6 .4z" fill="#666"/></svg>
<div class="r" style="left:0.0px;top:668.3px;width:970.0px;height:17.7px;background:#e6e6e6;"></div>
<svg class="r" style="left:18px;top:673.500px" width="5" height="8" viewBox="0 0 5 8"><path d="M4.200 .5L1 4l3.200 3.500z" fill="#c2c2c2"/></svg>
<svg class="r" style="left:38px;top:673.500px" width="5" height="8" viewBox="0 0 5 8"><path d="M.8 .5L4 4 .8 7.500z" fill="#c2c2c2"/></svg>
<div class="r" style="left:70.0px;top:671.0px;width:0.9px;height:13.0px;background:#ababab;"></div>
<span class="t" style="left:78.8px;top:670.6px;font-size:10.6px;line-height:12.72px;color:#444;transform:scaleX(0.831) rotate(.03deg);">Sample Names</span>
<div class="r" style="left:149.7px;top:668.3px;width:43.7px;height:16.0px;background:#fff;"></div>
<div class="r" style="left:149.7px;top:683.8px;width:43.7px;height:1.5px;background:#217346;"></div>
<div class="r" style="left:149.3px;top:668.0px;width:0.8px;height:16.0px;background:#b5b5b5;"></div>
<div class="r" style="left:193.2px;top:668.0px;width:0.8px;height:16.0px;background:#b5b5b5;"></div>
<span class="t" style="left:157.5px;top:670.4px;font-size:10.6px;line-height:12.72px;color:#217346;transform:scaleX(0.849) rotate(.03deg);font-weight:bold;">Coded</span>
<span class="t" style="left:203.0px;top:670.6px;font-size:10.6px;line-height:12.72px;color:#444;transform:scaleX(0.813) rotate(.03deg);">AML FCC Criteria</span>
<div class="r" style="left:280.8px;top:671.0px;width:0.9px;height:13.0px;background:#ababab;"></div>
<svg class="r" style="left:303.500px;top:671.300px" width="12" height="12" viewBox="0 0 12 12"><circle cx="6" cy="6" r="5" fill="none" stroke="#666" stroke-width=".9"/><path d="M6 3.200v5.600M3.200 6h5.600" stroke="#666" stroke-width=".9"/></svg>
<div class="r" style="left:581.5px;top:673.0px;width:1.2px;height:1.2px;background:#a0a0a0;"></div>
<div class="r" style="left:581.5px;top:676.0px;width:1.2px;height:1.2px;background:#a0a0a0;"></div>
<div class="r" style="left:581.5px;top:679.0px;width:1.2px;height:1.2px;background:#a0a0a0;"></div>
<div class="r" style="left:593.5px;top:672.8px;width:10.3px;height:9.3px;background:#fff;box-shadow:inset 0 0 0 .8px #ababab"></div>
<svg class="r" style="left:596.500px;top:675px" width="4" height="5" viewBox="0 0 4 5"><path d="M3.500 0L.5 2.500l3 2.500z" fill="#555"/></svg>
<div class="r" style="left:695.0px;top:672.8px;width:41.0px;height:9.3px;background:#fff;box-shadow:inset 0 0 0 .8px #ababab"></div>
<div class="r" style="left:945.0px;top:672.8px;width:10.6px;height:9.3px;background:#fff;box-shadow:inset 0 0 0 .8px #ababab"></div>
<svg class="r" style="left:948.500px;top:675px" width="4" height="5" viewBox="0 0 4 5"><path d="M.5 0l3 2.500-3 2.500z" fill="#555"/></svg>
<div class="r" style="left:0.0px;top:21.0px;width:1.0px;height:665.0px;background:#3d8a60;"></div>
<div class="r" style="left:778.7px;top:0.0px;width:191.3px;height:48.6px;background:#fff59d;"></div>
<span class="t" style="left:789px;top:5.3px;font-size:30.6px;line-height:38px;color:#6d0d30;font-weight:bold;-webkit-text-stroke:.9px #6d0d30;transform:scaleX(0.908) rotate(.03deg)">ENLARGE</span>
<svg class="r" style="left:930px;top:4px" width="40" height="40" viewBox="0 0 40 40"><circle cx="14.500" cy="14.300" r="10.300" fill="none" stroke="#000" stroke-width="2.600"/><path d="M21.500 21.200l3 3.200" stroke="#000" stroke-width="2.600"/><path d="M24.300 23.800l9.700 10.400" stroke="#000" stroke-width="5" stroke-linecap="round"/></svg>
</div></body></html>
